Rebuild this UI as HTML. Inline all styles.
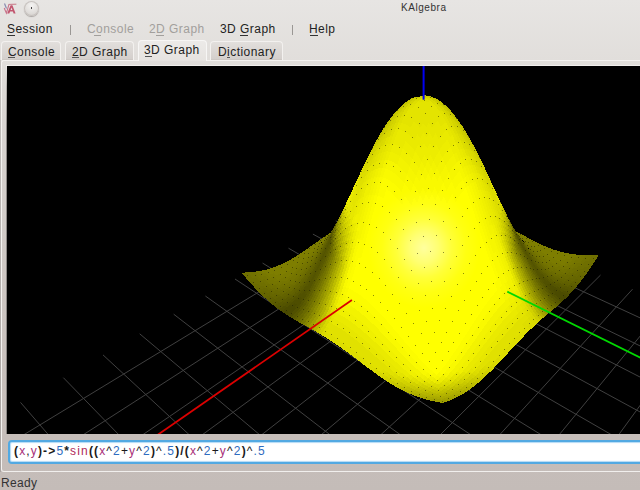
<!DOCTYPE html>
<html><head><meta charset="utf-8">
<style>
html,body{margin:0;padding:0;}
body{width:640px;height:490px;overflow:hidden;position:relative;
 background:linear-gradient(to bottom,#e7e5e3 0px,#e1dedb 60px,#dad6d3 110px,#cfc9c5 250px,#c8c0bc 380px,#c4bcb8 490px);
 font-family:"Liberation Sans",sans-serif;color:#222;}
.t{position:absolute;white-space:pre;font-size:12px;line-height:14px;}
.u{position:absolute;height:1px;background:#333;}
#frame{position:absolute;left:1px;top:60px;width:700px;height:412px;border-left:1px solid #f4f2f0;border-top:1px solid #f4f2f0;border-bottom:1px solid #f1efed;border-radius:3px 0 0 3px;box-sizing:border-box;}
#frame0{position:absolute;left:0px;top:60px;width:1px;height:412px;background:linear-gradient(#c3bfbc,#a9a3a0);}
#gwrap{position:absolute;left:6px;top:65px;width:700px;height:369px;background:#f0eeec;}
#gleft{position:absolute;left:6px;top:66px;width:1px;height:368px;background:linear-gradient(#ebe9e7 0px,#b4b0ad 20px,#8e8a88 60px,#8a8684 368px);}
#gbot{display:none;}
#graph{position:absolute;left:7px;top:66px;width:633px;height:368px;background:#000;overflow:hidden;}
.tab{position:absolute;top:41px;height:19px;box-sizing:border-box;border:1px solid #f3f1ef;border-bottom:none;border-radius:4px 4px 0 0;
 background:linear-gradient(#e2dfdc,#d3cecb);box-shadow:inset 0 -1px 0 #cdc8c4;}
.tab.sel{top:40px;height:21px;background:linear-gradient(#eceae8,#e6e3e0);box-shadow:none;border-color:#f7f6f5;}
#input{position:absolute;left:8px;top:440px;width:700px;height:24px;box-sizing:border-box;border:2px solid #52a9e2;border-radius:4px;background:#fff;
 box-shadow:inset 0 0 1px 1px #b3daf5;}
</style></head><body>
<!-- title bar -->
<svg style="position:absolute;left:0px;top:0px" width="20" height="16" viewBox="0 0 20 16">
 <path d="M8.6 4.4 L16.4 4.2" stroke="#c46a7c" stroke-width="0.9" fill="none"/>
 <path d="M4.2 8 L6.4 13.2 L9 4.4" stroke="#c9728a" stroke-width="1.1" fill="none"/>
 <path d="M4.5 3.5 L6.5 8.5" stroke="#8a8ab0" stroke-width="1.2" fill="none"/>
 <path d="M7.2 13.4 L10.6 5.2 L12.4 5.2 L15.6 13.4 L13.6 13.4 L12.9 11.4 L10.1 11.4 L9.3 13.4 Z M10.6 10 L12.4 10 L11.5 7.4 Z" fill="#c2566f" fill-rule="evenodd"/>
</svg>
<div style="position:absolute;left:24px;top:1px;width:15px;height:15px;border-radius:50%;background:radial-gradient(circle at 50% 30%,#f4f3f2,#dddad7 65%,#c9c5c2);box-shadow:0 1px 1px #a9a4a1, inset 0 0 0 1px #c7c2bf;"></div>
<div style="position:absolute;left:31px;top:7px;width:1px;height:2px;background:#444;"></div>
<div class="t" style="left:401px;top:2px;font-size:10px;line-height:12px;color:#333;letter-spacing:0.55px">KAlgebra</div>
<!-- menu -->
<div class="t" style="left:7px;top:22px;letter-spacing:0.45px">Session</div>
<div class="u" style="left:7px;top:35px;width:8px"></div><div class="u" style="left:94px;top:35px;width:7px;background:#a29f9c"></div><div class="u" style="left:156px;top:35px;width:8px;background:#a29f9c"></div><div class="u" style="left:240px;top:35px;width:8px"></div><div class="u" style="left:310px;top:35px;width:8px"></div>
<div style="position:absolute;left:70px;top:25px;width:1px;height:10px;background:#9a9794"></div>
<div class="t" style="left:87px;top:22px;color:#a29f9c;letter-spacing:0.45px">Console</div>
<div class="t" style="left:149px;top:22px;color:#a29f9c;letter-spacing:0.45px">2D Graph</div>
<div class="t" style="left:220px;top:22px;letter-spacing:0.45px">3D Graph</div>
<div style="position:absolute;left:292px;top:25px;width:1px;height:10px;background:#9a9794"></div>
<div class="t" style="left:309px;top:22px;letter-spacing:0.45px">Help</div>
<!-- tabs -->
<div id="frame0"></div>
<div id="frame"></div>
<div class="tab" style="left:1px;width:60px"></div>
<div class="tab" style="left:65px;width:69px"></div>
<div class="tab" style="left:210px;width:73px"></div>
<div class="tab sel" style="left:138px;width:69px"></div>
<div class="t" style="left:8px;top:45px;letter-spacing:0.45px">Console</div>
<div class="t" style="left:72px;top:45px;letter-spacing:0.45px">2D Graph</div>
<div class="t" style="left:144px;top:43px;letter-spacing:0.45px">3D Graph</div>
<div class="t" style="left:218px;top:45px;letter-spacing:0.45px">Dictionary</div>
<div class="u" style="left:8px;top:57px;width:7px;background:#555"></div><div class="u" style="left:72px;top:57px;width:7px;background:#555"></div><div class="u" style="left:145px;top:56px;width:7px;background:#555"></div><div class="u" style="left:227px;top:57px;width:3px;background:#555"></div><div id="gwrap"></div><div id="gleft"></div><div id="gbot"></div>
<div id="graph"><svg width="633" height="368" viewBox="0 0 633 368" style="display:block"><defs><radialGradient id="sp" cx="50%" cy="50%" r="50%"><stop offset="0" stop-color="#fff" stop-opacity=".62"/><stop offset=".25" stop-color="#fff" stop-opacity=".45"/><stop offset=".5" stop-color="#fff" stop-opacity=".22"/><stop offset=".75" stop-color="#fff" stop-opacity=".07"/><stop offset="1" stop-color="#fff" stop-opacity="0"/></radialGradient></defs><rect width="633" height="368" fill="#000"/><path d="M370.9 130.8L906.7 378.2M411.4 129L-123.9 454.2M350.4 142.5L898.4 408.9M433.7 138.8L-106.6 486.4M328.8 154.9L889.3 442.6M457.1 149.1L-87.7 521.5M305.9 168.1L879.3 479.8M481.6 159.9L-67 560.1M281.5 182.2L868.1 521M507.4 171.2L-44.3 602.5M255.6 197.1L855.7 566.9M534.6 183.2L-19 649.4M228 213L841.8 618.4M563.3 195.8L9 701.6M198.4 230L826.1 676.6M593.5 209.1L40.4 760.1M166.7 248.2L808.2 742.9M625.5 223.2L75.7 825.9M132.7 267.8L787.7 819M659.4 238.1L115.9 900.6M96 288.9L763.8 907.3M695.4 253.9L161.8 986.2M56.4 311.7L735.8 1011.1M733.7 270.7L215 1085.1M13.5 336.4L702.4 1134.9M774.4 288.6L277.1 1200.8M-33.2 363.2L661.9 1284.8M817.9 307.8L350.7 1337.9M-84.1 392.5L611.8 1470.3M864.4 328.2L439.4 1503" stroke="#404040" stroke-width="1" fill="none"/><g shape-rendering="crispEdges"><path fill="#484800" d="M556.8 229.5L555 231.2 558.1 232.9 560 231.1zM279.3 244.8L276.4 246.7 278.8 248.3 281.7 246.2z"/><path fill="#4b4b00" d="M552.5 224.3L550.7 225.7 553.7 227.7 555.5 226.2zM555.5 226.2L553.7 227.7 556.8 229.5 558.6 227.8zM558.6 227.8L556.8 229.5 560 231.1 561.8 229.2zM547.7 223.3L545.9 224.5 548.9 227 550.7 225.7zM550.7 225.7L548.9 227 551.9 229.2 553.7 227.7zM553.7 227.7L551.9 229.2 555 231.2 556.8 229.5zM548.9 227L547.1 228.2 550.1 230.6 551.9 229.2zM551.9 229.2L550.1 230.6 553.2 232.8 555 231.2zM555 231.2L553.2 232.8 556.3 234.6 558.1 232.9zM287.6 237.4L284.9 240.1 287.2 241.3 289.9 238.4zM282.5 239L279.7 241.2 282.1 242.6 284.9 240.1zM284.9 240.1L282.1 242.6 284.5 243.9 287.2 241.3zM287.2 241.3L284.5 243.9 286.9 245.1 289.6 242.3zM279.7 241.2L276.9 243.3 279.3 244.8 282.1 242.6zM282.1 242.6L279.3 244.8 281.7 246.2 284.5 243.9zM284.5 243.9L281.7 246.2 284.1 247.6 286.9 245.1zM276.9 243.3L274 245 276.4 246.7 279.3 244.8zM281.7 246.2L278.8 248.3 281.2 249.9 284.1 247.6z"/><path fill="#4e4e00" d="M557.3 224.6L555.5 226.2 558.6 227.8 560.4 226.1zM560.4 226.1L558.6 227.8 561.8 229.2 563.6 227.3zM546.5 219.8L544.8 220.8 547.7 223.3 549.5 222.1zM549.5 222.1L547.7 223.3 550.7 225.7 552.5 224.3zM541.9 217.9L540.2 218.6 543 221.7 544.8 220.8zM544.8 220.8L543 221.7 545.9 224.5 547.7 223.3zM543 221.7L541.3 222.6 544.2 225.5 545.9 224.5zM545.9 224.5L544.2 225.5 547.1 228.2 548.9 227zM553.2 232.8L551.4 234.3 554.5 236.3 556.3 234.6zM292.8 231.3L290.2 234.5 292.5 235.2 295.1 231.8zM287.9 233.7L285.2 236.4 287.6 237.4 290.2 234.5zM290.2 234.5L287.6 237.4 289.9 238.4 292.5 235.2zM292.5 235.2L289.9 238.4 292.2 239.2 294.8 235.9zM285.2 236.4L282.5 239 284.9 240.1 287.6 237.4zM289.9 238.4L287.2 241.3 289.6 242.3 292.2 239.2zM277.4 239.8L274.5 241.7 276.9 243.3 279.7 241.2zM274.5 241.7L271.6 243.3 274 245 276.9 243.3zM284.1 247.6L281.2 249.9 283.7 251.4 286.5 249z"/><path fill="#515100" d="M551.2 220.9L549.5 222.1 552.5 224.3 554.2 222.8zM554.2 222.8L552.5 224.3 555.5 226.2 557.3 224.6zM540.7 214.3L539 214.8 541.9 217.9 543.6 217.1zM543.6 217.1L541.9 217.9 544.8 220.8 546.5 219.8zM536.2 211.5L534.6 211.8 537.3 215.3 539 214.8zM539 214.8L537.3 215.3 540.2 218.6 541.9 217.9zM537.3 215.3L535.6 215.8 538.4 219.3 540.2 218.6zM540.2 218.6L538.4 219.3 541.3 222.6 543 221.7zM544.2 225.5L542.4 226.5 545.3 229.4 547.1 228.2zM547.1 228.2L545.3 229.4 548.3 232 550.1 230.6zM550.1 230.6L548.3 232 551.4 234.3 553.2 232.8zM297.8 224.1L295.3 227.8 297.6 228.1 300.1 224.2zM293.1 227.4L290.5 230.7 292.8 231.3 295.3 227.8zM295.3 227.8L292.8 231.3 295.1 231.8 297.6 228.1zM297.6 228.1L295.1 231.8 297.4 232.3 299.9 228.4zM290.5 230.7L287.9 233.7 290.2 234.5 292.8 231.3zM295.1 231.8L292.5 235.2 294.8 235.9 297.4 232.3zM282.9 235.4L280.2 237.7 282.5 239 285.2 236.4zM292.2 239.2L289.6 242.3 291.9 243.3 294.6 240.1zM280.2 237.7L277.4 239.8 279.7 241.2 282.5 239zM289.6 242.3L286.9 245.1 289.2 246.3 291.9 243.3zM286.9 245.1L284.1 247.6 286.5 249 289.2 246.3z"/><path fill="#545400" d="M556 221.3L554.2 222.8 557.3 224.6 559.1 222.9zM559.1 222.9L557.3 224.6 560.4 226.1 562.3 224.2zM562.3 224.2L560.4 226.1 563.6 227.3 565.5 225.3zM545.3 216.3L543.6 217.1 546.5 219.8 548.2 218.7zM548.2 218.7L546.5 219.8 549.5 222.1 551.2 220.9zM535.2 207.8L533.5 207.9 536.2 211.5 537.9 211.1zM537.9 211.1L536.2 211.5 539 214.8 540.7 214.3zM509.6 167.7L508 165.3 510.6 170.5 512.2 172.6zM512.2 172.6L510.6 170.5 513.2 175.7 514.8 177.5zM514.8 177.5L513.2 175.7 515.8 180.8 517.5 182.3zM517.5 182.3L515.8 180.8 518.5 185.7 520.1 187zM520.1 187L518.5 185.7 521.1 190.6 522.7 191.5zM522.7 191.5L521.1 190.6 523.7 195.2 525.4 195.9zM525.4 195.9L523.7 195.2 526.4 199.7 528.1 200.1zM528.1 200.1L526.4 199.7 529.1 203.9 530.8 204.1zM530.8 204.1L529.1 203.9 531.8 208 533.5 207.9zM533.5 207.9L531.8 208 534.6 211.8 536.2 211.5zM508 165.3L506.4 162.9 509 168.4 510.6 170.5zM510.6 170.5L509 168.4 511.6 173.9 513.2 175.7zM513.2 175.7L511.6 173.9 514.2 179.2 515.8 180.8zM515.8 180.8L514.2 179.2 516.8 184.4 518.5 185.7zM518.5 185.7L516.8 184.4 519.5 189.5 521.1 190.6zM529.1 203.9L527.4 203.7 530.1 208 531.8 208zM531.8 208L530.1 208 532.8 212 534.6 211.8zM534.6 211.8L532.8 212 535.6 215.8 537.3 215.3zM538.4 219.3L536.7 219.9 539.5 223.4 541.3 222.6zM541.3 222.6L539.5 223.4 542.4 226.5 544.2 225.5zM323.7 171.4L321.4 176.7 323.5 174.1 325.8 168.5zM321.4 176.7L319.1 182 321.2 179.7 323.5 174.1zM323.5 174.1L321.2 179.7 323.3 177.3 325.6 171.5zM319.1 182L316.8 187.2 318.9 185.2 321.2 179.7zM316.8 187.2L314.5 192.4 316.6 190.6 318.9 185.2zM314.5 192.4L312.2 197.4 314.3 196 316.6 190.6zM312.2 197.4L309.9 202.3 312 201.1 314.3 196zM309.9 202.3L307.5 207.1 309.7 206.1 312 201.1zM307.5 207.1L305.1 211.6 307.3 211 309.7 206.1zM305.1 211.6L302.7 216 304.9 215.6 307.3 211zM302.7 216L300.3 220.2 302.5 220 304.9 215.6zM304.9 215.6L302.5 220 304.8 219.8 307.2 215.1zM298.1 220.2L295.6 223.9 297.8 224.1 300.3 220.2zM300.3 220.2L297.8 224.1 300.1 224.2 302.5 220zM302.5 220L300.1 224.2 302.3 224.2 304.8 219.8zM295.6 223.9L293.1 227.4 295.3 227.8 297.8 224.1zM300.1 224.2L297.6 228.1 299.9 228.4 302.3 224.2zM288.3 230L285.6 232.8 287.9 233.7 290.5 230.7zM285.6 232.8L282.9 235.4 285.2 236.4 287.9 233.7zM294.8 235.9L292.2 239.2 294.6 240.1 297.1 236.5zM277.8 236.4L275 238.3 277.4 239.8 280.2 237.7zM275 238.3L272.1 240 274.5 241.7 277.4 239.8zM272.1 240L269.1 241.5 271.6 243.3 274.5 241.7z"/><path fill="#575700" d="M557.8 219.7L556 221.3 559.1 222.9 560.9 221.1zM560.9 221.1L559.1 222.9 562.3 224.2 564.1 222.3zM564.1 222.3L562.3 224.2 565.5 225.3 567.3 223.2zM550 217.5L548.2 218.7 551.2 220.9 553 219.5zM553 219.5L551.2 220.9 554.2 222.8 556 221.3zM539.6 210.7L537.9 211.1 540.7 214.3 542.5 213.6zM542.5 213.6L540.7 214.3 543.6 217.1 545.3 216.3zM505.9 160.5L504.3 157.7 507 162.7 508.5 165.2zM508.5 165.2L507 162.7 509.6 167.7 511.2 169.9zM511.2 169.9L509.6 167.7 512.2 172.6 513.8 174.6zM513.8 174.6L512.2 172.6 514.8 177.5 516.4 179.2zM516.4 179.2L514.8 177.5 517.5 182.3 519 183.7zM519 183.7L517.5 182.3 520.1 187 521.7 188.2zM521.7 188.2L520.1 187 522.7 191.5 524.3 192.4zM524.3 192.4L522.7 191.5 525.4 195.9 527 196.5zM527 196.5L525.4 195.9 528.1 200.1 529.7 200.5zM529.7 200.5L528.1 200.1 530.8 204.1 532.4 204.3zM532.4 204.3L530.8 204.1 533.5 207.9 535.2 207.8zM521.1 190.6L519.5 189.5 522.1 194.4 523.7 195.2zM523.7 195.2L522.1 194.4 524.7 199.2 526.4 199.7zM526.4 199.7L524.7 199.2 527.4 203.7 529.1 203.9zM532.8 212L531.1 212.2 533.9 216.2 535.6 215.8zM535.6 215.8L533.9 216.2 536.7 219.9 538.4 219.3zM545.3 229.4L543.5 230.6 546.5 233.4 548.3 232zM548.3 232L546.5 233.4 549.5 235.8 551.4 234.3zM551.4 234.3L549.5 235.8 552.6 238 554.5 236.3zM323.9 169.1L321.6 174.2 323.7 171.4 326 166.1zM321.6 174.2L319.3 179.2 321.4 176.7 323.7 171.4zM319.3 179.2L317 184.2 319.1 182 321.4 176.7zM317 184.2L314.7 189.2 316.8 187.2 319.1 182zM321.2 179.7L318.9 185.2 321 183.1 323.3 177.3zM314.7 189.2L312.4 194 314.5 192.4 316.8 187.2zM318.9 185.2L316.6 190.6 318.8 188.8 321 183.1zM312.4 194L310.1 198.8 312.2 197.4 314.5 192.4zM316.6 190.6L314.3 196 316.5 194.4 318.8 188.8zM310.1 198.8L307.7 203.4 309.9 202.3 312.2 197.4zM314.3 196L312 201.1 314.2 199.9 316.5 194.4zM307.7 203.4L305.4 207.9 307.5 207.1 309.9 202.3zM312 201.1L309.7 206.1 311.9 205.2 314.2 199.9zM305.4 207.9L303 212.2 305.1 211.6 307.5 207.1zM309.7 206.1L307.3 211 309.5 210.2 311.9 205.2zM303 212.2L300.6 216.3 302.7 216 305.1 211.6zM307.3 211L304.9 215.6 307.2 215.1 309.5 210.2zM300.6 216.3L298.1 220.2 300.3 220.2 302.7 216zM293.4 223.7L290.8 227 293.1 227.4 295.6 223.9zM302.3 224.2L299.9 228.4 302.2 228.6 304.6 224.2zM290.8 227L288.3 230 290.5 230.7 293.1 227.4zM299.9 228.4L297.4 232.3 299.7 232.7 302.2 228.6zM297.4 232.3L294.8 235.9 297.1 236.5 299.7 232.7zM283.3 231.8L280.6 234.2 282.9 235.4 285.6 232.8zM280.6 234.2L277.8 236.4 280.2 237.7 282.9 235.4zM275.5 234.9L272.6 236.7 275 238.3 277.8 236.4zM291.9 243.3L289.2 246.3 291.6 247.4 294.3 244.3zM272.6 236.7L269.7 238.2 272.1 240 275 238.3zM289.2 246.3L286.5 249 288.9 250.3 291.6 247.4zM269.7 238.2L266.7 239.6 269.1 241.5 272.1 240zM286.5 249L283.7 251.4 286.1 252.8 288.9 250.3z"/><path fill="#5a5a00" d="M562.7 219.2L560.9 221.1 564.1 222.3 565.9 220.3zM565.9 220.3L564.1 222.3 567.3 223.2 569.2 221.1zM551.7 216.3L550 217.5 553 219.5 554.7 218.1zM554.7 218.1L553 219.5 556 221.3 557.8 219.7zM544.2 212.9L542.5 213.6 545.3 216.3 547 215.3zM547 215.3L545.3 216.3 548.2 218.7 550 217.5zM510.1 167.7L508.5 165.2 511.2 169.9 512.7 172.1zM512.7 172.1L511.2 169.9 513.8 174.6 515.4 176.5zM515.4 176.5L513.8 174.6 516.4 179.2 518 180.8zM518 180.8L516.4 179.2 519 183.7 520.6 185.1zM520.6 185.1L519 183.7 521.7 188.2 523.3 189.2zM523.3 189.2L521.7 188.2 524.3 192.4 525.9 193.2zM525.9 193.2L524.3 192.4 527 196.5 528.6 197.1zM528.6 197.1L527 196.5 529.7 200.5 531.3 200.8zM531.3 200.8L529.7 200.5 532.4 204.3 534.1 204.3zM534.1 204.3L532.4 204.3 535.2 207.8 536.8 207.6zM536.8 207.6L535.2 207.8 537.9 211.1 539.6 210.7zM509 168.4L507.3 166.2 510 172 511.6 173.9zM511.6 173.9L510 172 512.6 177.6 514.2 179.2zM514.2 179.2L512.6 177.6 515.2 183.1 516.8 184.4zM516.8 184.4L515.2 183.1 517.8 188.5 519.5 189.5zM519.5 189.5L517.8 188.5 520.4 193.7 522.1 194.4zM522.1 194.4L520.4 193.7 523.1 198.6 524.7 199.2zM524.7 199.2L523.1 198.6 525.7 203.4 527.4 203.7zM527.4 203.7L525.7 203.4 528.4 207.9 530.1 208zM530.1 208L528.4 207.9 531.1 212.2 532.8 212zM539.5 223.4L537.7 224.2 540.6 227.5 542.4 226.5zM542.4 226.5L540.6 227.5 543.5 230.6 545.3 229.4zM324.2 167.3L321.9 172.1 323.9 169.1 326.2 164.1zM321.9 172.1L319.6 176.8 321.6 174.2 323.9 169.1zM319.6 176.8L317.3 181.6 319.3 179.2 321.6 174.2zM317.3 181.6L315 186.3 317 184.2 319.3 179.2zM315 186.3L312.6 191 314.7 189.2 317 184.2zM323.3 177.3L321 183.1 323.2 181 325.5 174.9zM312.6 191L310.3 195.6 312.4 194 314.7 189.2zM321 183.1L318.8 188.8 320.9 187 323.2 181zM310.3 195.6L308 200.1 310.1 198.8 312.4 194zM318.8 188.8L316.5 194.4 318.7 192.9 320.9 187zM308 200.1L305.6 204.4 307.7 203.4 310.1 198.8zM316.5 194.4L314.2 199.9 316.4 198.6 318.7 192.9zM305.6 204.4L303.2 208.6 305.4 207.9 307.7 203.4zM314.2 199.9L311.9 205.2 314.1 204.2 316.4 198.6zM303.2 208.6L300.8 212.7 303 212.2 305.4 207.9zM311.9 205.2L309.5 210.2 311.7 209.5 314.1 204.2zM300.8 212.7L298.4 216.6 300.6 216.3 303 212.2zM309.5 210.2L307.2 215.1 309.4 214.6 311.7 209.5zM298.4 216.6L295.9 220.2 298.1 220.2 300.6 216.3zM307.2 215.1L304.8 219.8 307 219.5 309.4 214.6zM295.9 220.2L293.4 223.7 295.6 223.9 298.1 220.2zM304.8 219.8L302.3 224.2 304.6 224.2 307 219.5zM288.6 226.4L286 229.2 288.3 230 290.8 227zM286 229.2L283.3 231.8 285.6 232.8 288.3 230zM281 230.8L278.3 232.9 280.6 234.2 283.3 231.8zM297.1 236.5L294.6 240.1 296.9 240.9 299.5 237.1zM278.3 232.9L275.5 234.9 277.8 236.4 280.6 234.2zM294.6 240.1L291.9 243.3 294.3 244.3 296.9 240.9zM270.2 235L267.3 236.4 269.7 238.2 272.6 236.7zM267.3 236.4L264.3 237.6 266.7 239.6 269.7 238.2z"/><path fill="#5d5d00" d="M564.5 217.3L562.7 219.2 565.9 220.3 567.8 218.1zM567.8 218.1L565.9 220.3 569.2 221.1 571 218.8zM556.5 216.6L554.7 218.1 557.8 219.7 559.6 218zM559.6 218L557.8 219.7 560.9 221.1 562.7 219.2zM548.8 214.2L547 215.3 550 217.5 551.7 216.3zM538.5 207.3L536.8 207.6 539.6 210.7 541.3 210.2zM541.3 210.2L539.6 210.7 542.5 213.6 544.2 212.9zM533.9 216.2L532.1 216.6 534.9 220.5 536.7 219.9zM536.7 219.9L534.9 220.5 537.7 224.2 539.5 223.4zM546.5 233.4L544.7 234.7 547.7 237.3 549.5 235.8zM549.5 235.8L547.7 237.3 550.8 239.6 552.6 238zM326.5 162.6L324.2 167.3 326.2 164.1 328.5 159.1zM326.2 164.1L323.9 169.1 326 166.1 328.3 160.8zM293.7 220.1L291.2 223.4 293.4 223.7 295.9 220.2zM291.2 223.4L288.6 226.4 290.8 227 293.4 223.7zM302.2 228.6L299.7 232.7 302 233.1 304.5 228.7zM283.7 228.4L281 230.8 283.3 231.8 286 229.2zM299.7 232.7L297.1 236.5 299.5 237.1 302 233.1zM276 231.6L273.1 233.4 275.5 234.9 278.3 232.9zM273.1 233.4L270.2 235 272.6 236.7 275.5 234.9zM267.9 233.2L264.9 234.4 267.3 236.4 270.2 235zM264.9 234.4L261.9 235.5 264.3 237.6 267.3 236.4zM288.9 250.3L286.1 252.8 288.6 254.3 291.3 251.6z"/><path fill="#606000" d="M566.4 215.2L564.5 217.3 567.8 218.1 569.6 215.9zM569.6 215.9L567.8 218.1 571 218.8 572.9 216.5zM558.3 214.9L556.5 216.6 559.6 218 561.4 216.2zM561.4 216.2L559.6 218 562.7 219.2 564.5 217.3zM550.5 213.1L548.8 214.2 551.7 216.3 553.5 214.9zM553.5 214.9L551.7 216.3 554.7 218.1 556.5 216.6zM543 209.5L541.3 210.2 544.2 212.9 545.9 212zM545.9 212L544.2 212.9 547 215.3 548.8 214.2zM511.6 170L510.1 167.7 512.7 172.1 514.3 174.1zM514.3 174.1L512.7 172.1 515.4 176.5 516.9 178.3zM516.9 178.3L515.4 176.5 518 180.8 519.6 182.3zM519.6 182.3L518 180.8 520.6 185.1 522.2 186.3zM522.2 186.3L520.6 185.1 523.3 189.2 524.9 190.2zM524.9 190.2L523.3 189.2 525.9 193.2 527.5 193.9zM527.5 193.9L525.9 193.2 528.6 197.1 530.2 197.5zM530.2 197.5L528.6 197.1 531.3 200.8 533 201zM533 201L531.3 200.8 534.1 204.3 535.7 204.2zM535.7 204.2L534.1 204.3 536.8 207.6 538.5 207.3zM510 172L508.3 170.1 510.9 176 512.6 177.6zM512.6 177.6L510.9 176 513.5 181.8 515.2 183.1zM515.2 183.1L513.5 181.8 516.1 187.4 517.8 188.5zM517.8 188.5L516.1 187.4 518.7 192.9 520.4 193.7zM520.4 193.7L518.7 192.9 521.4 198.1 523.1 198.6zM523.1 198.6L521.4 198.1 524 203.1 525.7 203.4zM525.7 203.4L524 203.1 526.7 207.9 528.4 207.9zM528.4 207.9L526.7 207.9 529.4 212.4 531.1 212.2zM531.1 212.2L529.4 212.4 532.1 216.6 533.9 216.2zM540.6 227.5L538.8 228.5 541.7 231.8 543.5 230.6zM543.5 230.6L541.7 231.8 544.7 234.7 546.5 233.4zM329.2 157.3L326.8 161.5 328.8 158 331.2 153.5zM326.8 161.5L324.5 165.9 326.5 162.6 328.8 158zM324.5 165.9L322.2 170.4 324.2 167.3 326.5 162.6zM322.2 170.4L319.9 174.8 321.9 172.1 324.2 167.3zM319.9 174.8L317.6 179.3 319.6 176.8 321.9 172.1zM326 166.1L323.7 171.4 325.8 168.5 328.1 162.9zM317.6 179.3L315.2 183.8 317.3 181.6 319.6 176.8zM315.2 183.8L312.9 188.3 315 186.3 317.3 181.6zM312.9 188.3L310.6 192.7 312.6 191 315 186.3zM310.6 192.7L308.2 197 310.3 195.6 312.6 191zM323.2 181L320.9 187 323.2 185.2 325.4 178.9zM308.2 197L305.9 201.2 308 200.1 310.3 195.6zM320.9 187L318.7 192.9 320.9 191.3 323.2 185.2zM305.9 201.2L303.5 205.3 305.6 204.4 308 200.1zM318.7 192.9L316.4 198.6 318.6 197.3 320.9 191.3zM303.5 205.3L301.1 209.3 303.2 208.6 305.6 204.4zM301.1 209.3L298.7 213.1 300.8 212.7 303.2 208.6zM298.7 213.1L296.2 216.7 298.4 216.6 300.8 212.7zM296.2 216.7L293.7 220.1 295.9 220.2 298.4 216.6zM307 219.5L304.6 224.2 306.9 224.1 309.3 219.3zM289 222.9L286.4 225.7 288.6 226.4 291.2 223.4zM304.6 224.2L302.2 228.6 304.5 228.7 306.9 224.1zM286.4 225.7L283.7 228.4 286 229.2 288.6 226.4zM281.4 227.4L278.7 229.6 281 230.8 283.7 228.4zM278.7 229.6L276 231.6 278.3 232.9 281 230.8zM273.6 230.1L270.8 231.7 273.1 233.4 276 231.6zM270.8 231.7L267.9 233.2 270.2 235 273.1 233.4zM294.3 244.3L291.6 247.4 294 248.6 296.7 245.2zM265.5 231.3L262.5 232.4 264.9 234.4 267.9 233.2zM291.6 247.4L288.9 250.3 291.3 251.6 294 248.6zM262.5 232.4L259.4 233.3 261.9 235.5 264.9 234.4z"/><path fill="#636300" d="M568.2 213L566.4 215.2 569.6 215.9 571.5 213.6zM571.5 213.6L569.6 215.9 572.9 216.5 574.8 214.1zM560.1 213.2L558.3 214.9 561.4 216.2 563.2 214.3zM563.2 214.3L561.4 216.2 564.5 217.3 566.4 215.2zM552.2 211.8L550.5 213.1 553.5 214.9 555.2 213.5zM555.2 213.5L553.5 214.9 556.5 216.6 558.3 214.9zM544.7 208.8L543 209.5 545.9 212 547.6 211zM547.6 211L545.9 212 548.8 214.2 550.5 213.1zM515.8 176L514.3 174.1 516.9 178.3 518.5 179.9zM518.5 179.9L516.9 178.3 519.6 182.3 521.1 183.7zM521.1 183.7L519.6 182.3 522.2 186.3 523.8 187.4zM523.8 187.4L522.2 186.3 524.9 190.2 526.4 191zM526.4 191L524.9 190.2 527.5 193.9 529.1 194.5zM529.1 194.5L527.5 193.9 530.2 197.5 531.8 197.8zM531.8 197.8L530.2 197.5 533 201 534.6 201zM534.6 201L533 201 535.7 204.2 537.4 204zM537.4 204L535.7 204.2 538.5 207.3 540.1 206.9zM540.1 206.9L538.5 207.3 541.3 210.2 543 209.5zM505.4 160L503.8 157.3 506.4 162.9 508 165.3zM506.4 162.9L504.7 160.4 507.3 166.2 509 168.4zM534.9 220.5L533.1 221.1 535.9 225 537.7 224.2zM537.7 224.2L535.9 225 538.8 228.5 540.6 227.5zM324.9 164.9L322.5 169 324.5 165.9 326.8 161.5zM322.5 169L320.2 173.2 322.2 170.4 324.5 165.9zM320.2 173.2L317.9 177.5 319.9 174.8 322.2 170.4zM317.9 177.5L315.5 181.7 317.6 179.3 319.9 174.8zM315.5 181.7L313.2 185.9 315.2 183.8 317.6 179.3zM325.8 168.5L323.5 174.1 325.6 171.5 327.9 165.6zM313.2 185.9L310.9 190.1 312.9 188.3 315.2 183.8zM310.9 190.1L308.5 194.2 310.6 192.7 312.9 188.3zM308.5 194.2L306.2 198.3 308.2 197 310.6 192.7zM306.2 198.3L303.8 202.3 305.9 201.2 308.2 197zM303.8 202.3L301.4 206.1 303.5 205.3 305.9 201.2zM301.4 206.1L299 209.8 301.1 209.3 303.5 205.3zM316.4 198.6L314.1 204.2 316.3 203.1 318.6 197.3zM299 209.8L296.5 213.3 298.7 213.1 301.1 209.3zM314.1 204.2L311.7 209.5 314 208.7 316.3 203.1zM296.5 213.3L294 216.7 296.2 216.7 298.7 213.1zM311.7 209.5L309.4 214.6 311.7 214.1 314 208.7zM294 216.7L291.5 219.9 293.7 220.1 296.2 216.7zM309.4 214.6L307 219.5 309.3 219.3 311.7 214.1zM291.5 219.9L289 222.9 291.2 223.4 293.7 220.1zM286.7 222.4L284.1 225 286.4 225.7 289 222.9zM284.1 225L281.4 227.4 283.7 228.4 286.4 225.7zM279.2 226.3L276.4 228.3 278.7 229.6 281.4 227.4zM276.4 228.3L273.6 230.1 276 231.6 278.7 229.6zM299.5 237.1L296.9 240.9 299.3 241.6 301.8 237.7zM271.3 228.5L268.4 230 270.8 231.7 273.6 230.1zM296.9 240.9L294.3 244.3 296.7 245.2 299.3 241.6zM268.4 230L265.5 231.3 267.9 233.2 270.8 231.7zM263.1 229.3L260 230.2 262.5 232.4 265.5 231.3zM260 230.2L257 231.1 259.4 233.3 262.5 232.4z"/><path fill="#666600" d="M571.9 208.4L570.1 210.7 573.3 211.2 575.2 208.7zM575.2 208.7L573.3 211.2 576.7 211.6 578.6 209zM566.8 210.1L565 212.2 568.2 213 570.1 210.7zM570.1 210.7L568.2 213 571.5 213.6 573.3 211.2zM573.3 211.2L571.5 213.6 574.8 214.1 576.7 211.6zM561.9 211.3L560.1 213.2 563.2 214.3 565 212.2zM565 212.2L563.2 214.3 566.4 215.2 568.2 213zM557 211.9L555.2 213.5 558.3 214.9 560.1 213.2zM549.3 209.9L547.6 211 550.5 213.1 552.2 211.8zM512.1 170.4L510.5 168.2 513.2 172.1 514.7 174.1zM514.7 174.1L513.2 172.1 515.8 176 517.3 177.7zM517.3 177.7L515.8 176 518.5 179.9 520 181.3zM520 181.3L518.5 179.9 521.1 183.7 522.7 184.8zM522.7 184.8L521.1 183.7 523.8 187.4 525.3 188.3zM525.3 188.3L523.8 187.4 526.4 191 528 191.6zM528 191.6L526.4 191 529.1 194.5 530.7 194.9zM530.7 194.9L529.1 194.5 531.8 197.8 533.5 198zM533.5 198L531.8 197.8 534.6 201 536.2 200.9zM536.2 200.9L534.6 201 537.4 204 539 203.7zM539 203.7L537.4 204 540.1 206.9 541.8 206.4zM541.8 206.4L540.1 206.9 543 209.5 544.7 208.8zM507.3 166.2L505.7 164.1 508.3 170.1 510 172zM529.4 212.4L527.6 212.5 530.4 217 532.1 216.6zM532.1 216.6L530.4 217 533.1 221.1 534.9 220.5zM541.7 231.8L539.9 232.9 542.8 236 544.7 234.7zM544.7 234.7L542.8 236 545.8 238.7 547.7 237.3zM547.7 237.3L545.8 238.7 548.9 241.2 550.8 239.6zM325.2 164.2L322.9 168.1 324.9 164.9 327.2 160.9zM322.9 168.1L320.6 172 322.5 169 324.9 164.9zM320.6 172L318.2 175.9 320.2 173.2 322.5 169zM318.2 175.9L315.9 179.9 317.9 177.5 320.2 173.2zM315.9 179.9L313.5 183.9 315.5 181.7 317.9 177.5zM313.5 183.9L311.2 187.8 313.2 185.9 315.5 181.7zM311.2 187.8L308.9 191.8 310.9 190.1 313.2 185.9zM325.6 171.5L323.3 177.3 325.5 174.9 327.8 168.8zM308.9 191.8L306.5 195.6 308.5 194.2 310.9 190.1zM306.5 195.6L304.1 199.4 306.2 198.3 308.5 194.2zM304.1 199.4L301.7 203.1 303.8 202.3 306.2 198.3zM301.7 203.1L299.3 206.7 301.4 206.1 303.8 202.3zM299.3 206.7L296.8 210.1 299 209.8 301.4 206.1zM296.8 210.1L294.4 213.5 296.5 213.3 299 209.8zM294.4 213.5L291.9 216.6 294 216.7 296.5 213.3zM291.9 216.6L289.3 219.6 291.5 219.9 294 216.7zM289.3 219.6L286.7 222.4 289 222.9 291.5 219.9zM281.9 224.1L279.2 226.3 281.4 227.4 284.1 225zM304.5 228.7L302 233.1 304.3 233.5 306.8 228.9zM302 233.1L299.5 237.1 301.8 237.7 304.3 233.5zM274.1 226.9L271.3 228.5 273.6 230.1 276.4 228.3zM268.9 226.8L266 228.1 268.4 230 271.3 228.5zM263.6 226.1L260.7 227.1 263.1 229.3 266 228.1zM266 228.1L263.1 229.3 265.5 231.3 268.4 230zM258.2 224.9L255.2 225.6 257.6 228 260.7 227.1zM260.7 227.1L257.6 228 260 230.2 263.1 229.3zM294 248.6L291.3 251.6 293.8 252.8 296.5 249.7zM255.2 225.6L252 226.2 254.5 228.7 257.6 228zM257.6 228L254.5 228.7 257 231.1 260 230.2zM291.3 251.6L288.6 254.3 291 255.7 293.8 252.8z"/><path fill="#696900" d="M579 203.5L577.1 206.2 580.5 206.3 582.4 203.5zM570.5 205.5L568.7 207.8 571.9 208.4 573.8 205.9zM573.8 205.9L571.9 208.4 575.2 208.7 577.1 206.2zM577.1 206.2L575.2 208.7 578.6 209 580.5 206.3zM565.5 207.2L563.7 209.3 566.8 210.1 568.7 207.8zM568.7 207.8L566.8 210.1 570.1 210.7 571.9 208.4zM560.6 208.3L558.8 210.1 561.9 211.3 563.7 209.3zM563.7 209.3L561.9 211.3 565 212.2 566.8 210.1zM555.7 208.8L554 210.4 557 211.9 558.8 210.1zM558.8 210.1L557 211.9 560.1 213.2 561.9 211.3zM551 208.7L549.3 209.9 552.2 211.8 554 210.4zM554 210.4L552.2 211.8 555.2 213.5 557 211.9zM540.7 203.3L539 203.7 541.8 206.4 543.5 205.7zM543.5 205.7L541.8 206.4 544.7 208.8 546.4 207.9zM546.4 207.9L544.7 208.8 547.6 211 549.3 209.9zM508.3 170.1L506.6 168.3 509.2 174.4 510.9 176zM510.9 176L509.2 174.4 511.8 180.5 513.5 181.8zM513.5 181.8L511.8 180.5 514.4 186.4 516.1 187.4zM516.1 187.4L514.4 186.4 517 192.1 518.7 192.9zM518.7 192.9L517 192.1 519.6 197.6 521.4 198.1zM521.4 198.1L519.6 197.6 522.3 202.8 524 203.1zM524 203.1L522.3 202.8 524.9 207.8 526.7 207.9zM526.7 207.9L524.9 207.8 527.6 212.5 529.4 212.4zM535.9 225L534.1 225.8 537 229.5 538.8 228.5zM538.8 228.5L537 229.5 539.9 232.9 541.7 231.8zM325.5 174.9L323.2 181 325.4 178.9 327.7 172.6zM323.2 185.2L320.9 191.3 323.1 189.8 325.4 183.4zM320.9 191.3L318.6 197.3 320.9 196.1 323.1 189.8zM318.6 197.3L316.3 203.1 318.6 202.1 320.9 196.1zM316.3 203.1L314 208.7 316.3 208 318.6 202.1zM289.7 216.3L287.1 219.1 289.3 219.6 291.9 216.6zM311.7 214.1L309.3 219.3 311.6 219 313.9 213.6zM287.1 219.1L284.5 221.7 286.7 222.4 289.3 219.6zM309.3 219.3L306.9 224.1 309.2 224.1 311.6 219zM284.5 221.7L281.9 224.1 284.1 225 286.7 222.4zM306.9 224.1L304.5 228.7 306.8 228.9 309.2 224.1zM279.6 223L276.9 225 279.2 226.3 281.9 224.1zM274.6 223.6L271.8 225.3 274.1 226.9 276.9 225zM276.9 225L274.1 226.9 276.4 228.3 279.2 226.3zM269.5 223.6L266.6 225 268.9 226.8 271.8 225.3zM271.8 225.3L268.9 226.8 271.3 228.5 274.1 226.9zM264.2 223L261.2 224 263.6 226.1 266.6 225zM266.6 225L263.6 226.1 266 228.1 268.9 226.8zM299.3 241.6L296.7 245.2 299.1 246.2 301.7 242.4zM258.8 221.8L255.8 222.6 258.2 224.9 261.2 224zM261.2 224L258.2 224.9 260.7 227.1 263.6 226.1zM296.7 245.2L294 248.6 296.5 249.7 299.1 246.2zM255.8 222.6L252.7 223.2 255.2 225.6 258.2 224.9zM250.2 220.6L247 221 249.5 223.7 252.7 223.2zM252.7 223.2L249.5 223.7 252 226.2 255.2 225.6z"/><path fill="#6c6c00" d="M582.8 197.8L580.9 200.7 584.3 200.7 586.2 197.7zM577.6 200.6L575.7 203.3 579 203.5 580.9 200.7zM580.9 200.7L579 203.5 582.4 203.5 584.3 200.7zM572.4 203L570.5 205.5 573.8 205.9 575.7 203.3zM575.7 203.3L573.8 205.9 577.1 206.2 579 203.5zM567.3 204.9L565.5 207.2 568.7 207.8 570.5 205.5zM562.4 206.3L560.6 208.3 563.7 209.3 565.5 207.2zM557.5 207.2L555.7 208.8 558.8 210.1 560.6 208.3zM552.7 207.4L551 208.7 554 210.4 555.7 208.8zM545.2 204.9L543.5 205.7 546.4 207.9 548.1 206.9zM548.1 206.9L546.4 207.9 549.3 209.9 551 208.7zM516.2 175.8L514.7 174.1 517.3 177.7 518.9 179.2zM518.9 179.2L517.3 177.7 520 181.3 521.5 182.5zM521.5 182.5L520 181.3 522.7 184.8 524.2 185.8zM524.2 185.8L522.7 184.8 525.3 188.3 526.9 189zM526.9 189L525.3 188.3 528 191.6 529.6 192.1zM529.6 192.1L528 191.6 530.7 194.9 532.3 195.1zM532.3 195.1L530.7 194.9 533.5 198 535.1 198zM535.1 198L533.5 198 536.2 200.9 537.8 200.7zM537.8 200.7L536.2 200.9 539 203.7 540.7 203.3zM533.1 221.1L531.4 221.7 534.1 225.8 535.9 225zM318.6 174.6L316.3 178.3 318.2 175.9 320.6 172zM316.3 178.3L313.9 182.1 315.9 179.9 318.2 175.9zM313.9 182.1L311.6 185.8 313.5 183.9 315.9 179.9zM311.6 185.8L309.2 189.5 311.2 187.8 313.5 183.9zM309.2 189.5L306.8 193.2 308.9 191.8 311.2 187.8zM306.8 193.2L304.4 196.8 306.5 195.6 308.9 191.8zM304.4 196.8L302.1 200.4 304.1 199.4 306.5 195.6zM325.4 178.9L323.2 185.2 325.4 183.4 327.7 176.8zM302.1 200.4L299.6 203.8 301.7 203.1 304.1 199.4zM299.6 203.8L297.2 207.1 299.3 206.7 301.7 203.1zM297.2 207.1L294.7 210.3 296.8 210.1 299.3 206.7zM294.7 210.3L292.2 213.4 294.4 213.5 296.8 210.1zM292.2 213.4L289.7 216.3 291.9 216.6 294.4 213.5zM314 208.7L311.7 214.1 313.9 213.6 316.3 208zM284.9 218.4L282.3 220.8 284.5 221.7 287.1 219.1zM282.3 220.8L279.6 223 281.9 224.1 284.5 221.7zM277.4 221.8L274.6 223.6 276.9 225 279.6 223zM272.3 222.1L269.5 223.6 271.8 225.3 274.6 223.6zM267.1 221.8L264.2 223 266.6 225 269.5 223.6zM301.8 237.7L299.3 241.6 301.7 242.4 304.2 238.3zM261.8 220.9L258.8 221.8 261.2 224 264.2 223zM256.4 219.5L253.3 220.1 255.8 222.6 258.8 221.8zM250.9 217.6L247.7 218 250.2 220.6 253.3 220.1zM253.3 220.1L250.2 220.6 252.7 223.2 255.8 222.6zM245.2 215.2L242 215.5 244.5 218.3 247.7 218zM247.7 218L244.5 218.3 247 221 250.2 220.6z"/><path fill="#6f6f00" d="M585.3 188.9L583.3 192 586.7 191.8 588.7 188.7zM588.7 188.7L586.7 191.8 590.1 191.6 592.1 188.5zM583.3 192L581.4 194.9 584.8 194.9 586.7 191.8zM586.7 191.8L584.8 194.9 588.2 194.7 590.1 191.6zM578.1 194.9L576.2 197.7 579.5 197.8 581.4 194.9zM581.4 194.9L579.5 197.8 582.8 197.8 584.8 194.9zM584.8 194.9L582.8 197.8 586.2 197.7 588.2 194.7zM576.2 197.7L574.3 200.4 577.6 200.6 579.5 197.8zM579.5 197.8L577.6 200.6 580.9 200.7 582.8 197.8zM571 200.1L569.2 202.6 572.4 203 574.3 200.4zM574.3 200.4L572.4 203 575.7 203.3 577.6 200.6zM566 202L564.2 204.2 567.3 204.9 569.2 202.6zM569.2 202.6L567.3 204.9 570.5 205.5 572.4 203zM561.1 203.4L559.3 205.3 562.4 206.3 564.2 204.2zM564.2 204.2L562.4 206.3 565.5 207.2 567.3 204.9zM559.3 205.3L557.5 207.2 560.6 208.3 562.4 206.3zM551.5 204.4L549.8 205.7 552.7 207.4 554.5 205.8zM554.5 205.8L552.7 207.4 555.7 208.8 557.5 207.2zM546.9 203.9L545.2 204.9 548.1 206.9 549.8 205.7zM549.8 205.7L548.1 206.9 551 208.7 552.7 207.4zM515.1 174.1L513.6 172.4 516.2 175.8 517.8 177.3zM517.8 177.3L516.2 175.8 518.9 179.2 520.4 180.5zM523.1 183.6L521.5 182.5 524.2 185.8 525.8 186.6zM525.8 186.6L524.2 185.8 526.9 189 528.5 189.6zM528.5 189.6L526.9 189 529.6 192.1 531.2 192.4zM531.2 192.4L529.6 192.1 532.3 195.1 533.9 195.2zM533.9 195.2L532.3 195.1 535.1 198 536.7 197.8zM536.7 197.8L535.1 198 537.8 200.7 539.5 200.3zM539.5 200.3L537.8 200.7 540.7 203.3 542.3 202.7zM542.3 202.7L540.7 203.3 543.5 205.7 545.2 204.9zM509.2 174.4L507.4 172.9 510 179.2 511.8 180.5zM511.8 180.5L510 179.2 512.6 185.4 514.4 186.4zM514.4 186.4L512.6 185.4 515.3 191.3 517 192.1zM517 192.1L515.3 191.3 517.9 197.1 519.6 197.6zM524.9 207.8L523.2 207.8 525.9 212.7 527.6 212.5zM527.6 212.5L525.9 212.7 528.6 217.4 530.4 217zM530.4 217L528.6 217.4 531.4 221.7 533.1 221.1zM539.9 232.9L538 234.1 541 237.3 542.8 236zM542.8 236L541 237.3 544 240.2 545.8 238.7zM545.8 238.7L544 240.2 547 242.8 548.9 241.2zM321.3 170.2L319 173.6 320.9 171 323.3 167.4zM319 173.6L316.6 177.1 318.6 174.6 320.9 171zM316.6 177.1L314.3 180.5 316.3 178.3 318.6 174.6zM314.3 180.5L311.9 184 313.9 182.1 316.3 178.3zM311.9 184L309.6 187.5 311.6 185.8 313.9 182.1zM309.6 187.5L307.2 191 309.2 189.5 311.6 185.8zM307.2 191L304.8 194.4 306.8 193.2 309.2 189.5zM304.8 194.4L302.4 197.8 304.4 196.8 306.8 193.2zM302.4 197.8L300 201.1 302.1 200.4 304.4 196.8zM300 201.1L297.6 204.3 299.6 203.8 302.1 200.4zM297.6 204.3L295.1 207.4 297.2 207.1 299.6 203.8zM295.1 207.4L292.6 210.4 294.7 210.3 297.2 207.1zM292.6 210.4L290.1 213.2 292.2 213.4 294.7 210.3zM290.1 213.2L287.5 215.9 289.7 216.3 292.2 213.4zM287.5 215.9L284.9 218.4 287.1 219.1 289.7 216.3zM282.7 217.6L280.1 219.8 282.3 220.8 284.9 218.4zM277.8 218.7L275.1 220.5 277.4 221.8 280.1 219.8zM280.1 219.8L277.4 221.8 279.6 223 282.3 220.8zM275.1 220.5L272.3 222.1 274.6 223.6 277.4 221.8zM306.8 228.9L304.3 233.5 306.7 233.8 309.1 229.1zM267.6 218.7L264.8 219.9 267.1 221.8 270 220.5zM270 220.5L267.1 221.8 269.5 223.6 272.3 222.1zM304.3 233.5L301.8 237.7 304.2 238.3 306.7 233.8zM262.4 217.8L259.4 218.7 261.8 220.9 264.8 219.9zM264.8 219.9L261.8 220.9 264.2 223 267.1 221.8zM257 216.3L254 217 256.4 219.5 259.4 218.7zM259.4 218.7L256.4 219.5 258.8 221.8 261.8 220.9zM249 211.8L245.9 212.1 248.4 214.9 251.5 214.4zM251.5 214.4L248.4 214.9 250.9 217.6 254 217zM254 217L250.9 217.6 253.3 220.1 256.4 219.5zM240.9 206.4L237.7 206.5 240.2 209.5 243.4 209.3zM243.4 209.3L240.2 209.5 242.7 212.4 245.9 212.1zM245.9 212.1L242.7 212.4 245.2 215.2 248.4 214.9zM248.4 214.9L245.2 215.2 247.7 218 250.9 217.6zM296.5 249.7L293.8 252.8 296.2 254.1 298.9 250.8zM237.7 206.5L234.4 206.6 236.9 209.7 240.2 209.5zM240.2 209.5L236.9 209.7 239.5 212.6 242.7 212.4zM242.7 212.4L239.5 212.6 242 215.5 245.2 215.2zM293.8 252.8L291 255.7 293.5 257.1 296.2 254.1z"/><path fill="#727200" d="M578.6 189L576.7 191.9 580 192 581.9 189zM581.9 189L580 192 583.3 192 585.3 188.9zM576.7 191.9L574.8 194.7 578.1 194.9 580 192zM580 192L578.1 194.9 581.4 194.9 583.3 192zM574.8 194.7L572.9 197.5 576.2 197.7 578.1 194.9zM569.7 197.1L567.8 199.6 571 200.1 572.9 197.5zM572.9 197.5L571 200.1 574.3 200.4 576.2 197.7zM567.8 199.6L566 202 569.2 202.6 571 200.1zM562.9 201.3L561.1 203.4 564.2 204.2 566 202zM558 202.4L556.2 204.2 559.3 205.3 561.1 203.4zM553.2 202.9L551.5 204.4 554.5 205.8 556.2 204.2zM556.2 204.2L554.5 205.8 557.5 207.2 559.3 205.3zM545.7 201L544 201.9 546.9 203.9 548.6 202.7zM548.6 202.7L546.9 203.9 549.8 205.7 551.5 204.4zM514 172.7L512.5 171 515.1 174.1 516.6 175.6zM519.3 178.6L517.8 177.3 520.4 180.5 522 181.5zM522 181.5L520.4 180.5 523.1 183.6 524.6 184.4zM524.6 184.4L523.1 183.6 525.8 186.6 527.3 187.2zM527.3 187.2L525.8 186.6 528.5 189.6 530.1 189.9zM530.1 189.9L528.5 189.6 531.2 192.4 532.8 192.6zM532.8 192.6L531.2 192.4 533.9 195.2 535.5 195.1zM535.5 195.1L533.9 195.2 536.7 197.8 538.3 197.5zM538.3 197.5L536.7 197.8 539.5 200.3 541.1 199.8zM541.1 199.8L539.5 200.3 542.3 202.7 544 201.9zM544 201.9L542.3 202.7 545.2 204.9 546.9 203.9zM519.6 197.6L517.9 197.1 520.5 202.6 522.3 202.8zM522.3 202.8L520.5 202.6 523.2 207.8 524.9 207.8zM534.1 225.8L532.3 226.6 535.2 230.5 537 229.5zM537 229.5L535.2 230.5 538 234.1 539.9 232.9zM317 176L314.7 179.2 316.6 177.1 319 173.6zM314.7 179.2L312.3 182.5 314.3 180.5 316.6 177.1zM328.5 159.1L326.2 164.1 328.3 160.8 330.6 155.5zM312.3 182.5L309.9 185.8 311.9 184 314.3 180.5zM309.9 185.8L307.6 189 309.6 187.5 311.9 184zM307.6 189L305.2 192.3 307.2 191 309.6 187.5zM305.2 192.3L302.8 195.5 304.8 194.4 307.2 191zM302.8 195.5L300.4 198.6 302.4 197.8 304.8 194.4zM300.4 198.6L297.9 201.7 300 201.1 302.4 197.8zM297.9 201.7L295.5 204.6 297.6 204.3 300 201.1zM325.4 183.4L323.1 189.8 325.4 188.3 327.7 181.7zM295.5 204.6L293 207.5 295.1 207.4 297.6 204.3zM323.1 189.8L320.9 196.1 323.1 194.8 325.4 188.3zM293 207.5L290.5 210.2 292.6 210.4 295.1 207.4zM320.9 196.1L318.6 202.1 320.9 201.2 323.1 194.8zM290.5 210.2L287.9 212.8 290.1 213.2 292.6 210.4zM318.6 202.1L316.3 208 318.6 207.3 320.9 201.2zM287.9 212.8L285.3 215.3 287.5 215.9 290.1 213.2zM316.3 208L313.9 213.6 316.3 213.1 318.6 207.3zM283.1 214.6L280.5 216.7 282.7 217.6 285.3 215.3zM285.3 215.3L282.7 217.6 284.9 218.4 287.5 215.9zM313.9 213.6L311.6 219 313.9 218.7 316.3 213.1zM280.5 216.7L277.8 218.7 280.1 219.8 282.7 217.6zM311.6 219L309.2 224.1 311.5 224.1 313.9 218.7zM275.5 217.3L272.8 219 275.1 220.5 277.8 218.7zM309.2 224.1L306.8 228.9 309.1 229.1 311.5 224.1zM270.5 217.3L267.6 218.7 270 220.5 272.8 219zM272.8 219L270 220.5 272.3 222.1 275.1 220.5zM265.3 216.7L262.4 217.8 264.8 219.9 267.6 218.7zM257.6 213.2L254.6 213.9 257 216.3 260 215.6zM260 215.6L257 216.3 259.4 218.7 262.4 217.8zM247.2 205.8L244.1 206.1 246.6 209 249.7 208.6zM249.7 208.6L246.6 209 249 211.8 252.1 211.3zM252.1 211.3L249 211.8 251.5 214.4 254.6 213.9zM254.6 213.9L251.5 214.4 254 217 257 216.3zM301.7 242.4L299.1 246.2 301.5 247.1 304.1 243.2zM244.1 206.1L240.9 206.4 243.4 209.3 246.6 209zM246.6 209L243.4 209.3 245.9 212.1 249 211.8zM299.1 246.2L296.5 249.7 298.9 250.8 301.5 247.1z"/><path fill="#757500" d="M575.4 188.9L573.5 191.8 576.7 191.9 578.6 189zM573.5 191.8L571.6 194.5 574.8 194.7 576.7 191.9zM568.4 194.2L566.5 196.7 569.7 197.1 571.6 194.5zM571.6 194.5L569.7 197.1 572.9 197.5 574.8 194.7zM566.5 196.7L564.7 199 567.8 199.6 569.7 197.1zM561.6 198.3L559.8 200.4 562.9 201.3 564.7 199zM564.7 199L562.9 201.3 566 202 567.8 199.6zM556.8 199.5L555 201.3 558 202.4 559.8 200.4zM559.8 200.4L558 202.4 561.1 203.4 562.9 201.3zM552 200L550.3 201.5 553.2 202.9 555 201.3zM555 201.3L553.2 202.9 556.2 204.2 558 202.4zM522.4 180.4L520.8 179.6 523.5 182.3 525.1 182.9zM525.1 182.9L523.5 182.3 526.2 185 527.8 185.3zM527.8 185.3L526.2 185 528.9 187.6 530.5 187.7zM530.5 187.7L528.9 187.6 531.6 190.1 533.3 190zM533.3 190L531.6 190.1 534.4 192.5 536 192.2zM536 192.2L534.4 192.5 537.2 194.8 538.8 194.3zM538.8 194.3L537.2 194.8 540 197 541.6 196.3zM541.6 196.3L540 197 542.8 199 544.5 198.1zM544.5 198.1L542.8 199 545.7 201 547.4 199.9zM547.4 199.9L545.7 201 548.6 202.7 550.3 201.5zM550.3 201.5L548.6 202.7 551.5 204.4 553.2 202.9zM515.5 174.2L514 172.7 516.6 175.6 518.2 176.9zM518.2 176.9L516.6 175.6 519.3 178.6 520.8 179.6zM520.8 179.6L519.3 178.6 522 181.5 523.5 182.3zM523.5 182.3L522 181.5 524.6 184.4 526.2 185zM526.2 185L524.6 184.4 527.3 187.2 528.9 187.6zM528.9 187.6L527.3 187.2 530.1 189.9 531.6 190.1zM531.6 190.1L530.1 189.9 532.8 192.6 534.4 192.5zM534.4 192.5L532.8 192.6 535.5 195.1 537.2 194.8zM537.2 194.8L535.5 195.1 538.3 197.5 540 197zM540 197L538.3 197.5 541.1 199.8 542.8 199zM542.8 199L541.1 199.8 544 201.9 545.7 201zM528.6 217.4L526.8 217.8 529.5 222.4 531.4 221.7zM531.4 221.7L529.5 222.4 532.3 226.6 534.1 225.8zM320.2 171.7L317.9 174.3 319.8 172.2 322.2 169.3zM315.5 177.1L313.1 179.9 315.1 178.1 317.5 175.1zM317.5 175.1L315.1 178.1 317 176 319.4 172.8zM310.8 182.7L308.4 185.6 310.3 184.2 312.7 181.1zM312.7 181.1L310.3 184.2 312.3 182.5 314.7 179.2zM308.4 185.6L306 188.4 308 187.2 310.3 184.2zM310.3 184.2L308 187.2 309.9 185.8 312.3 182.5zM328.3 160.8L326 166.1 328.1 162.9 330.4 157.3zM306 188.4L303.6 191.2 305.6 190.3 308 187.2zM308 187.2L305.6 190.3 307.6 189 309.9 185.8zM303.6 191.2L301.1 194 303.2 193.3 305.6 190.3zM305.6 190.3L303.2 193.3 305.2 192.3 307.6 189zM301.1 194L298.7 196.8 300.8 196.2 303.2 193.3zM303.2 193.3L300.8 196.2 302.8 195.5 305.2 192.3zM298.7 196.8L296.2 199.5 298.3 199.1 300.8 196.2zM300.8 196.2L298.3 199.1 300.4 198.6 302.8 195.5zM296.2 199.5L293.8 202.1 295.9 202 298.3 199.1zM298.3 199.1L295.9 202 297.9 201.7 300.4 198.6zM293.8 202.1L291.3 204.6 293.4 204.7 295.9 202zM295.9 202L293.4 204.7 295.5 204.6 297.9 201.7zM291.3 204.6L288.7 207 290.9 207.4 293.4 204.7zM293.4 204.7L290.9 207.4 293 207.5 295.5 204.6zM288.7 207L286.2 209.4 288.3 209.9 290.9 207.4zM290.9 207.4L288.3 209.9 290.5 210.2 293 207.5zM286.2 209.4L283.6 211.6 285.8 212.3 288.3 209.9zM288.3 209.9L285.8 212.3 287.9 212.8 290.5 210.2zM283.6 211.6L280.9 213.6 283.1 214.6 285.8 212.3zM285.8 212.3L283.1 214.6 285.3 215.3 287.9 212.8zM280.9 213.6L278.3 215.6 280.5 216.7 283.1 214.6zM276 214.3L273.3 215.9 275.5 217.3 278.3 215.6zM278.3 215.6L275.5 217.3 277.8 218.7 280.5 216.7zM271 214.2L268.2 215.5 270.5 217.3 273.3 215.9zM273.3 215.9L270.5 217.3 272.8 219 275.5 217.3zM265.8 213.6L262.9 214.6 265.3 216.7 268.2 215.5zM268.2 215.5L265.3 216.7 267.6 218.7 270.5 217.3zM258.1 210L255.2 210.7 257.6 213.2 260.6 212.4zM260.6 212.4L257.6 213.2 260 215.6 262.9 214.6zM262.9 214.6L260 215.6 262.4 217.8 265.3 216.7zM250.3 205.4L247.2 205.8 249.7 208.6 252.7 208.1zM252.7 208.1L249.7 208.6 252.1 211.3 255.2 210.7zM255.2 210.7L252.1 211.3 254.6 213.9 257.6 213.2zM304.2 238.3L301.7 242.4 304.1 243.2 306.6 238.9z"/><path fill="#787800" d="M572.2 188.8L570.3 191.5 573.5 191.8 575.4 188.9zM567.1 191.2L565.3 193.7 568.4 194.2 570.3 191.5zM570.3 191.5L568.4 194.2 571.6 194.5 573.5 191.8zM565.3 193.7L563.4 196.1 566.5 196.7 568.4 194.2zM560.3 195.4L558.5 197.5 561.6 198.3 563.4 196.1zM563.4 196.1L561.6 198.3 564.7 199 566.5 196.7zM558.5 197.5L556.8 199.5 559.8 200.4 561.6 198.3zM550.8 197.1L549.1 198.6 552 200 553.8 198.3zM553.8 198.3L552 200 555 201.3 556.8 199.5zM515.9 173.9L514.4 172.8 517 175.4 518.6 176.3zM518.6 176.3L517 175.4 519.7 177.9 521.3 178.6zM521.3 178.6L519.7 177.9 522.4 180.4 523.9 180.9zM523.9 180.9L522.4 180.4 525.1 182.9 526.7 183.2zM526.7 183.2L525.1 182.9 527.8 185.3 529.4 185.4zM529.4 185.4L527.8 185.3 530.5 187.7 532.1 187.6zM532.1 187.6L530.5 187.7 533.3 190 534.9 189.7zM534.9 189.7L533.3 190 536 192.2 537.7 191.7zM537.7 191.7L536 192.2 538.8 194.3 540.5 193.6zM540.5 193.6L538.8 194.3 541.6 196.3 543.3 195.4zM543.3 195.4L541.6 196.3 544.5 198.1 546.2 197zM546.2 197L544.5 198.1 547.4 199.9 549.1 198.6zM549.1 198.6L547.4 199.9 550.3 201.5 552 200zM502.7 154.8L501.1 151.8 503.8 157.3 505.4 160zM503.8 157.3L502.1 154.6 504.7 160.4 506.4 162.9zM510 179.2L508.3 178.1 510.9 184.5 512.6 185.4zM512.6 185.4L510.9 184.5 513.5 190.7 515.3 191.3zM515.3 191.3L513.5 190.7 516.1 196.6 517.9 197.1zM517.9 197.1L516.1 196.6 518.7 202.3 520.5 202.6zM520.5 202.6L518.7 202.3 521.4 207.8 523.2 207.8zM523.2 207.8L521.4 207.8 524.1 212.9 525.9 212.7zM525.9 212.7L524.1 212.9 526.8 217.8 528.6 217.4zM541 237.3L539.1 238.6 542.1 241.7 544 240.2zM544 240.2L542.1 241.7 545.1 244.4 547 242.8zM318.3 173.7L315.9 176.2 317.9 174.3 320.2 171.7zM311.2 181.4L308.8 184 310.8 182.7 313.1 179.9zM308.8 184L306.4 186.7 308.4 185.6 310.8 182.7zM306.4 186.7L304 189.3 306 188.4 308.4 185.6zM304 189.3L301.5 191.9 303.6 191.2 306 188.4zM328.1 162.9L325.8 168.5 327.9 165.6 330.2 159.7zM301.5 191.9L299.1 194.5 301.1 194 303.6 191.2zM299.1 194.5L296.6 197.1 298.7 196.8 301.1 194zM296.6 197.1L294.2 199.5 296.2 199.5 298.7 196.8zM294.2 199.5L291.7 202 293.8 202.1 296.2 199.5zM291.7 202L289.1 204.3 291.3 204.6 293.8 202.1zM289.1 204.3L286.6 206.5 288.7 207 291.3 204.6zM286.6 206.5L284 208.6 286.2 209.4 288.7 207zM284 208.6L281.4 210.6 283.6 211.6 286.2 209.4zM281.4 210.6L278.7 212.5 280.9 213.6 283.6 211.6zM276.5 211.2L273.7 212.8 276 214.3 278.7 212.5zM278.7 212.5L276 214.3 278.3 215.6 280.9 213.6zM273.7 212.8L271 214.2 273.3 215.9 276 214.3zM266.3 210.5L263.5 211.5 265.8 213.6 268.7 212.4zM268.7 212.4L265.8 213.6 268.2 215.5 271 214.2zM258.7 206.8L255.7 207.5 258.1 210 261.1 209.2zM261.1 209.2L258.1 210 260.6 212.4 263.5 211.5zM263.5 211.5L260.6 212.4 262.9 214.6 265.8 213.6zM309.1 229.1L306.7 233.8 309.1 234.3 311.5 229.3zM253.3 204.9L250.3 205.4 252.7 208.1 255.7 207.5zM255.7 207.5L252.7 208.1 255.2 210.7 258.1 210zM306.7 233.8L304.2 238.3 306.6 238.9 309.1 234.3zM296.2 254.1L293.5 257.1 296 258.4 298.7 255.3z"/><path fill="#7b7b00" d="M565.9 188.1L564 190.7 567.1 191.2 569 188.5zM569 188.5L567.1 191.2 570.3 191.5 572.2 188.8zM564 190.7L562.2 193.1 565.3 193.7 567.1 191.2zM559.1 192.4L557.3 194.6 560.3 195.4 562.2 193.1zM562.2 193.1L560.3 195.4 563.4 196.1 565.3 193.7zM554.3 193.6L552.5 195.5 555.5 196.5 557.3 194.6zM557.3 194.6L555.5 196.5 558.5 197.5 560.3 195.4zM511 169.3L509.5 168.3 512.1 170.4 513.7 171.2zM513.7 171.2L512.1 170.4 514.8 172.6 516.4 173.2zM516.4 173.2L514.8 172.6 517.5 174.7 519 175.2zM519 175.2L517.5 174.7 520.1 176.9 521.7 177.2zM521.7 177.2L520.1 176.9 522.8 179 524.4 179.2zM524.4 179.2L522.8 179 525.5 181.2 527.1 181.1zM527.1 181.1L525.5 181.2 528.2 183.2 529.9 183zM529.9 183L528.2 183.2 531 185.3 532.6 184.9zM532.6 184.9L531 185.3 533.7 187.2 535.4 186.6zM535.4 186.6L533.7 187.2 536.5 189.1 538.2 188.4zM538.2 188.4L536.5 189.1 539.3 190.9 541 190zM541 190L539.3 190.9 542.1 192.6 543.8 191.5zM543.8 191.5L542.1 192.6 545 194.2 546.7 192.9zM546.7 192.9L545 194.2 547.9 195.7 549.6 194.3zM549.6 194.3L547.9 195.7 550.8 197.1 552.5 195.5zM552.5 195.5L550.8 197.1 553.8 198.3 555.5 196.5zM555.5 196.5L553.8 198.3 556.8 199.5 558.5 197.5zM514.8 172.6L513.2 171.6 515.9 173.9 517.5 174.7zM517.5 174.7L515.9 173.9 518.6 176.3 520.1 176.9zM520.1 176.9L518.6 176.3 521.3 178.6 522.8 179zM522.8 179L521.3 178.6 523.9 180.9 525.5 181.2zM525.5 181.2L523.9 180.9 526.7 183.2 528.2 183.2zM528.2 183.2L526.7 183.2 529.4 185.4 531 185.3zM531 185.3L529.4 185.4 532.1 187.6 533.7 187.2zM533.7 187.2L532.1 187.6 534.9 189.7 536.5 189.1zM536.5 189.1L534.9 189.7 537.7 191.7 539.3 190.9zM539.3 190.9L537.7 191.7 540.5 193.6 542.1 192.6zM542.1 192.6L540.5 193.6 543.3 195.4 545 194.2zM545 194.2L543.3 195.4 546.2 197 547.9 195.7zM547.9 195.7L546.2 197 549.1 198.6 550.8 197.1zM504.7 160.4L503.1 158 505.7 164.1 507.3 166.2zM505.7 164.1L504 162 506.6 168.3 508.3 170.1zM535.2 230.5L533.3 231.5 536.2 235.2 538 234.1zM538 234.1L536.2 235.2 539.1 238.6 541 237.3zM314.4 176.6L312 178.9 314 177.7 316.3 175.3zM316.3 175.3L314 177.7 315.9 176.2 318.3 173.7zM312 178.9L309.6 181.1 311.6 180.1 314 177.7zM314 177.7L311.6 180.1 313.5 178.8 315.9 176.2zM309.6 181.1L307.2 183.4 309.2 182.5 311.6 180.1zM311.6 180.1L309.2 182.5 311.2 181.4 313.5 178.8zM307.2 183.4L304.8 185.7 306.8 185 309.2 182.5zM309.2 182.5L306.8 185 308.8 184 311.2 181.4zM304.8 185.7L302.4 188 304.4 187.5 306.8 185zM306.8 185L304.4 187.5 306.4 186.7 308.8 184zM302.4 188L299.9 190.2 301.9 189.9 304.4 187.5zM304.4 187.5L301.9 189.9 304 189.3 306.4 186.7zM299.9 190.2L297.5 192.5 299.5 192.3 301.9 189.9zM301.9 189.9L299.5 192.3 301.5 191.9 304 189.3zM297.5 192.5L295 194.7 297.1 194.7 299.5 192.3zM299.5 192.3L297.1 194.7 299.1 194.5 301.5 191.9zM327.9 165.6L325.6 171.5 327.8 168.8 330 162.6zM295 194.7L292.5 196.9 294.6 197.1 297.1 194.7zM297.1 194.7L294.6 197.1 296.6 197.1 299.1 194.5zM292.5 196.9L290 199 292.1 199.4 294.6 197.1zM294.6 197.1L292.1 199.4 294.2 199.5 296.6 197.1zM290 199L287.4 201 289.6 201.6 292.1 199.4zM292.1 199.4L289.6 201.6 291.7 202 294.2 199.5zM287.4 201L284.8 202.9 287 203.7 289.6 201.6zM289.6 201.6L287 203.7 289.1 204.3 291.7 202zM284.8 202.9L282.2 204.8 284.4 205.8 287 203.7zM287 203.7L284.4 205.8 286.6 206.5 289.1 204.3zM325.4 188.3L323.1 194.8 325.5 193.7 327.7 186.9zM282.2 204.8L279.6 206.5 281.8 207.7 284.4 205.8zM284.4 205.8L281.8 207.7 284 208.6 286.6 206.5zM323.1 194.8L320.9 201.2 323.2 200.3 325.5 193.7zM279.6 206.5L276.9 208.2 279.2 209.5 281.8 207.7zM281.8 207.7L279.2 209.5 281.4 210.6 284 208.6zM320.9 201.2L318.6 207.3 320.9 206.6 323.2 200.3zM276.9 208.2L274.2 209.7 276.5 211.2 279.2 209.5zM279.2 209.5L276.5 211.2 278.7 212.5 281.4 210.6zM318.6 207.3L316.3 213.1 318.6 212.7 320.9 206.6zM271.9 208L269.2 209.3 271.5 211.1 274.2 209.7zM274.2 209.7L271.5 211.1 273.7 212.8 276.5 211.2zM316.3 213.1L313.9 218.7 316.3 218.5 318.6 212.7zM266.8 207.3L264 208.3 266.3 210.5 269.2 209.3zM269.2 209.3L266.3 210.5 268.7 212.4 271.5 211.1zM271.5 211.1L268.7 212.4 271 214.2 273.7 212.8zM313.9 218.7L311.5 224.1 313.9 224.1 316.3 218.5zM259.2 203.6L256.3 204.3 258.7 206.8 261.6 206.1zM261.6 206.1L258.7 206.8 261.1 209.2 264 208.3zM264 208.3L261.1 209.2 263.5 211.5 266.3 210.5zM311.5 224.1L309.1 229.1 311.5 229.3 313.9 224.1zM256.3 204.3L253.3 204.9 255.7 207.5 258.7 206.8zM301.5 247.1L298.9 250.8 301.4 251.9 304 248.1zM298.9 250.8L296.2 254.1 298.7 255.3 301.4 251.9z"/><path fill="#7e7e00" d="M509.5 165.6L507.9 165.6 510.5 167.1 512.2 167zM512.2 167L510.5 167.1 513.2 168.7 514.8 168.4zM514.8 168.4L513.2 168.7 515.8 170.2 517.5 169.9zM517.5 169.9L515.8 170.2 518.5 171.8 520.1 171.3zM520.1 171.3L518.5 171.8 521.2 173.3 522.8 172.8zM522.8 172.8L521.2 173.3 523.9 174.9 525.5 174.2zM525.5 174.2L523.9 174.9 526.6 176.4 528.2 175.6zM528.2 175.6L526.6 176.4 529.3 177.9 531 176.9zM531 176.9L529.3 177.9 532 179.4 533.7 178.3zM533.7 178.3L532 179.4 534.8 180.8 536.5 179.5zM536.5 179.5L534.8 180.8 537.6 182.1 539.3 180.7zM539.3 180.7L537.6 182.1 540.4 183.4 542.1 181.9zM542.1 181.9L540.4 183.4 543.2 184.7 545 183zM545 183L543.2 184.7 546.1 185.8 547.9 184zM547.9 184L546.1 185.8 549 186.9 550.8 184.9zM550.8 184.9L549 186.9 551.9 187.8 553.7 185.7zM553.7 185.7L551.9 187.8 554.9 188.7 556.7 186.5zM556.7 186.5L554.9 188.7 557.9 189.5 559.7 187.1zM559.7 187.1L557.9 189.5 560.9 190.1 562.8 187.7zM562.8 187.7L560.9 190.1 564 190.7 565.9 188.1zM510.5 167.1L508.9 166.9 511.6 168.6 513.2 168.7zM513.2 168.7L511.6 168.6 514.2 170.2 515.8 170.2zM515.8 170.2L514.2 170.2 516.9 171.9 518.5 171.8zM518.5 171.8L516.9 171.9 519.5 173.6 521.2 173.3zM521.2 173.3L519.5 173.6 522.2 175.3 523.9 174.9zM523.9 174.9L522.2 175.3 524.9 177 526.6 176.4zM526.6 176.4L524.9 177 527.7 178.6 529.3 177.9zM529.3 177.9L527.7 178.6 530.4 180.2 532 179.4zM532 179.4L530.4 180.2 533.1 181.8 534.8 180.8zM534.8 180.8L533.1 181.8 535.9 183.3 537.6 182.1zM537.6 182.1L535.9 183.3 538.7 184.7 540.4 183.4zM540.4 183.4L538.7 184.7 541.5 186.1 543.2 184.7zM543.2 184.7L541.5 186.1 544.4 187.4 546.1 185.8zM546.1 185.8L544.4 187.4 547.3 188.6 549 186.9zM549 186.9L547.3 188.6 550.2 189.7 551.9 187.8zM551.9 187.8L550.2 189.7 553.1 190.7 554.9 188.7zM554.9 188.7L553.1 190.7 556.1 191.6 557.9 189.5zM557.9 189.5L556.1 191.6 559.1 192.4 560.9 190.1zM560.9 190.1L559.1 192.4 562.2 193.1 564 190.7zM511.6 168.6L510 168.1 512.6 169.9 514.2 170.2zM514.2 170.2L512.6 169.9 515.3 171.7 516.9 171.9zM516.9 171.9L515.3 171.7 517.9 173.6 519.5 173.6zM519.5 173.6L517.9 173.6 520.6 175.4 522.2 175.3zM522.2 175.3L520.6 175.4 523.3 177.2 524.9 177zM524.9 177L523.3 177.2 526 179 527.7 178.6zM527.7 178.6L526 179 528.7 180.8 530.4 180.2zM530.4 180.2L528.7 180.8 531.5 182.5 533.1 181.8zM533.1 181.8L531.5 182.5 534.2 184.2 535.9 183.3zM535.9 183.3L534.2 184.2 537 185.8 538.7 184.7zM538.7 184.7L537 185.8 539.8 187.4 541.5 186.1zM541.5 186.1L539.8 187.4 542.7 188.8 544.4 187.4zM544.4 187.4L542.7 188.8 545.5 190.2 547.3 188.6zM547.3 188.6L545.5 190.2 548.4 191.4 550.2 189.7zM550.2 189.7L548.4 191.4 551.3 192.6 553.1 190.7zM553.1 190.7L551.3 192.6 554.3 193.6 556.1 191.6zM556.1 191.6L554.3 193.6 557.3 194.6 559.1 192.4zM512.6 169.9L511 169.3 513.7 171.2 515.3 171.7zM515.3 171.7L513.7 171.2 516.4 173.2 517.9 173.6zM517.9 173.6L516.4 173.2 519 175.2 520.6 175.4zM520.6 175.4L519 175.2 521.7 177.2 523.3 177.2zM523.3 177.2L521.7 177.2 524.4 179.2 526 179zM526 179L524.4 179.2 527.1 181.1 528.7 180.8zM528.7 180.8L527.1 181.1 529.9 183 531.5 182.5zM531.5 182.5L529.9 183 532.6 184.9 534.2 184.2zM534.2 184.2L532.6 184.9 535.4 186.6 537 185.8zM537 185.8L535.4 186.6 538.2 188.4 539.8 187.4zM539.8 187.4L538.2 188.4 541 190 542.7 188.8zM542.7 188.8L541 190 543.8 191.5 545.5 190.2zM545.5 190.2L543.8 191.5 546.7 192.9 548.4 191.4zM548.4 191.4L546.7 192.9 549.6 194.3 551.3 192.6zM551.3 192.6L549.6 194.3 552.5 195.5 554.3 193.6zM506.6 168.3L504.8 166.5 507.4 172.9 509.2 174.4zM507.4 172.9L505.7 171.5 508.3 178.1 510 179.2zM529.5 222.4L527.7 223 530.5 227.4 532.3 226.6zM532.3 226.6L530.5 227.4 533.3 231.5 535.2 230.5zM322.9 167.1L320.5 168.6 322.6 168.1 324.9 166.6zM320.5 168.6L318.2 170.1 320.2 169.8 322.6 168.1zM322.6 168.1L320.2 169.8 322.2 169 324.6 167.3zM318.2 170.1L315.8 171.8 317.9 171.4 320.2 169.8zM320.2 169.8L317.9 171.4 319.9 170.7 322.2 169zM315.8 171.8L313.5 173.4 315.5 173.1 317.9 171.4zM317.9 171.4L315.5 173.1 317.5 172.5 319.9 170.7zM319.9 170.7L317.5 172.5 319.5 171.6 321.9 169.7zM313.5 173.4L311.1 175.1 313.1 174.9 315.5 173.1zM315.5 173.1L313.1 174.9 315.1 174.4 317.5 172.5zM317.5 172.5L315.1 174.4 317.1 173.5 319.5 171.6zM319.5 171.6L317.1 173.5 319.1 172.3 321.5 170.3zM311.1 175.1L308.7 176.8 310.7 176.7 313.1 174.9zM313.1 174.9L310.7 176.7 312.8 176.3 315.1 174.4zM315.1 174.4L312.8 176.3 314.8 175.6 317.1 173.5zM317.1 173.5L314.8 175.6 316.7 174.5 319.1 172.3zM308.7 176.8L306.3 178.5 308.3 178.5 310.7 176.7zM310.7 176.7L308.3 178.5 310.4 178.2 312.8 176.3zM312.8 176.3L310.4 178.2 312.4 177.6 314.8 175.6zM314.8 175.6L312.4 177.6 314.4 176.6 316.7 174.5zM306.3 178.5L303.9 180.2 305.9 180.4 308.3 178.5zM308.3 178.5L305.9 180.4 308 180.2 310.4 178.2zM310.4 178.2L308 180.2 310 179.7 312.4 177.6zM312.4 177.6L310 179.7 312 178.9 314.4 176.6zM303.9 180.2L301.4 181.9 303.5 182.2 305.9 180.4zM305.9 180.4L303.5 182.2 305.6 182.2 308 180.2zM308 180.2L305.6 182.2 307.6 181.8 310 179.7zM310 179.7L307.6 181.8 309.6 181.1 312 178.9zM301.4 181.9L299 183.6 301.1 184.1 303.5 182.2zM303.5 182.2L301.1 184.1 303.1 184.1 305.6 182.2zM305.6 182.2L303.1 184.1 305.2 183.9 307.6 181.8zM307.6 181.8L305.2 183.9 307.2 183.4 309.6 181.1zM299 183.6L296.5 185.4 298.6 185.9 301.1 184.1zM301.1 184.1L298.6 185.9 300.7 186.1 303.1 184.1zM303.1 184.1L300.7 186.1 302.7 186.1 305.2 183.9zM305.2 183.9L302.7 186.1 304.8 185.7 307.2 183.4zM296.5 185.4L294 187 296.2 187.7 298.6 185.9zM298.6 185.9L296.2 187.7 298.2 188.1 300.7 186.1zM300.7 186.1L298.2 188.1 300.3 188.2 302.7 186.1zM302.7 186.1L300.3 188.2 302.4 188 304.8 185.7zM294 187L291.5 188.7 293.7 189.5 296.2 187.7zM296.2 187.7L293.7 189.5 295.8 190 298.2 188.1zM298.2 188.1L295.8 190 297.9 190.3 300.3 188.2zM300.3 188.2L297.9 190.3 299.9 190.2 302.4 188zM291.5 188.7L289 190.3 291.2 191.3 293.7 189.5zM293.7 189.5L291.2 191.3 293.3 192 295.8 190zM295.8 190L293.3 192 295.4 192.4 297.9 190.3zM297.9 190.3L295.4 192.4 297.5 192.5 299.9 190.2zM289 190.3L286.5 191.9 288.6 193 291.2 191.3zM291.2 191.3L288.6 193 290.8 193.8 293.3 192zM293.3 192L290.8 193.8 292.9 194.4 295.4 192.4zM295.4 192.4L292.9 194.4 295 194.7 297.5 192.5zM286.5 191.9L283.9 193.4 286.1 194.6 288.6 193zM288.6 193L286.1 194.6 288.2 195.6 290.8 193.8zM290.8 193.8L288.2 195.6 290.4 196.4 292.9 194.4zM292.9 194.4L290.4 196.4 292.5 196.9 295 194.7zM327.8 168.8L325.5 174.9 327.7 172.6 330 166.1zM283.9 193.4L281.3 194.9 283.5 196.2 286.1 194.6zM286.1 194.6L283.5 196.2 285.7 197.4 288.2 195.6zM288.2 195.6L285.7 197.4 287.8 198.3 290.4 196.4zM290.4 196.4L287.8 198.3 290 199 292.5 196.9zM327.7 172.6L325.4 178.9 327.7 176.8 329.9 170.2zM281.3 194.9L278.6 196.2 280.9 197.8 283.5 196.2zM283.5 196.2L280.9 197.8 283.1 199.1 285.7 197.4zM285.7 197.4L283.1 199.1 285.3 200.2 287.8 198.3zM287.8 198.3L285.3 200.2 287.4 201 290 199zM278.6 196.2L276 197.6 278.2 199.2 280.9 197.8zM280.9 197.8L278.2 199.2 280.5 200.7 283.1 199.1zM283.1 199.1L280.5 200.7 282.7 201.9 285.3 200.2zM285.3 200.2L282.7 201.9 284.8 202.9 287.4 201zM276 197.6L273.3 198.8 275.6 200.6 278.2 199.2zM278.2 199.2L275.6 200.6 277.8 202.2 280.5 200.7zM280.5 200.7L277.8 202.2 280 203.6 282.7 201.9zM282.7 201.9L280 203.6 282.2 204.8 284.8 202.9zM273.3 198.8L270.5 199.9 272.8 201.9 275.6 200.6zM275.6 200.6L272.8 201.9 275.1 203.6 277.8 202.2zM277.8 202.2L275.1 203.6 277.4 205.2 280 203.6zM280 203.6L277.4 205.2 279.6 206.5 282.2 204.8zM270.5 199.9L267.8 201 270.1 203.1 272.8 201.9zM272.8 201.9L270.1 203.1 272.4 205 275.1 203.6zM275.1 203.6L272.4 205 274.7 206.7 277.4 205.2zM277.4 205.2L274.7 206.7 276.9 208.2 279.6 206.5zM267.8 201L265 202 267.3 204.2 270.1 203.1zM270.1 203.1L267.3 204.2 269.6 206.2 272.4 205zM272.4 205L269.6 206.2 271.9 208 274.7 206.7zM274.7 206.7L271.9 208 274.2 209.7 276.9 208.2zM265 202L262.1 202.8 264.5 205.2 267.3 204.2zM267.3 204.2L264.5 205.2 266.8 207.3 269.6 206.2zM269.6 206.2L266.8 207.3 269.2 209.3 271.9 208zM262.1 202.8L259.2 203.6 261.6 206.1 264.5 205.2zM264.5 205.2L261.6 206.1 264 208.3 266.8 207.3zM304.1 243.2L301.5 247.1 304 248.1 306.5 244z"/><path fill="#818100" d="M508.3 178.1L506.5 177 509.1 183.6 510.9 184.5zM510.9 184.5L509.1 183.6 511.7 190.1 513.5 190.7zM524.1 212.9L522.3 213.2 525 218.3 526.8 217.8zM526.8 217.8L525 218.3 527.7 223 529.5 222.4zM327.7 176.8L325.4 183.4 327.7 181.7 329.9 174.8zM327.7 181.7L325.4 188.3 327.7 186.9 330 180zM309.1 234.3L306.6 238.9 309 239.5 311.5 234.7zM306.6 238.9L304.1 243.2 306.5 244 309 239.5z"/><path fill="#848400" d="M513.5 190.7L511.7 190.1 514.3 196.3 516.1 196.6zM516.1 196.6L514.3 196.3 516.9 202.2 518.7 202.3zM518.7 202.3L516.9 202.2 519.6 207.9 521.4 207.8zM521.4 207.8L519.6 207.9 522.3 213.2 524.1 212.9zM536.2 235.2L534.3 236.4 537.2 239.9 539.1 238.6zM539.1 238.6L537.2 239.9 540.2 243.1 542.1 241.7zM542.1 241.7L540.2 243.1 543.2 246 545.1 244.4zM330.9 154.3L328.5 159.1 330.6 155.5 332.9 150.4zM311.5 229.3L309.1 234.3 311.5 234.7 313.9 229.6zM298.7 255.3L296 258.4 298.5 259.8 301.2 256.6z"/><path fill="#878700" d="M530.5 227.4L528.6 228.3 531.4 232.5 533.3 231.5zM533.3 231.5L531.4 232.5 534.3 236.4 536.2 235.2zM330.6 155.5L328.3 160.8 330.4 157.3 332.7 151.8zM327.7 186.9L325.5 193.7 327.8 192.6 330.1 185.6zM325.5 193.7L323.2 200.3 325.6 199.5 327.8 192.6zM323.2 200.3L320.9 206.6 323.3 206 325.6 199.5zM320.9 206.6L318.6 212.7 321 212.3 323.3 206zM318.6 212.7L316.3 218.5 318.7 218.4 321 212.3zM316.3 218.5L313.9 224.1 316.3 224.1 318.7 218.4zM313.9 224.1L311.5 229.3 313.9 229.6 316.3 224.1zM304 248.1L301.4 251.9 303.8 253 306.4 249.1zM301.4 251.9L298.7 255.3 301.2 256.6 303.8 253z"/><path fill="#8a8a00" d="M527.7 223L525.9 223.7 528.6 228.3 530.5 227.4zM306.5 244L304 248.1 306.4 249.1 309 244.8z"/><path fill="#8d8d00" d="M509.1 183.6L507.2 182.9 509.8 189.6 511.7 190.1zM511.7 190.1L509.8 189.6 512.5 196 514.3 196.3zM522.3 213.2L520.4 213.6 523.1 218.8 525 218.3zM525 218.3L523.1 218.8 525.9 223.7 527.7 223zM540.2 243.1L538.3 244.6 541.3 247.6 543.2 246zM330.4 157.3L328.1 162.9 330.2 159.7 332.5 153.8zM311.5 234.7L309 239.5 311.5 240.2 313.9 235.2zM309 239.5L306.5 244 309 244.8 311.5 240.2z"/><path fill="#909000" d="M502.1 154.6L500.4 151.9 503.1 158 504.7 160.4zM503.1 158L501.3 155.6 504 162 505.7 164.1zM504 162L502.2 159.9 504.8 166.5 506.6 168.3zM504.8 166.5L503.1 164.8 505.7 171.5 507.4 172.9zM505.7 171.5L503.9 170.2 506.5 177 508.3 178.1zM514.3 196.3L512.5 196 515.1 202.1 516.9 202.2zM516.9 202.2L515.1 202.1 517.7 208 519.6 207.9zM519.6 207.9L517.7 208 520.4 213.6 522.3 213.2zM534.3 236.4L532.4 237.6 535.3 241.3 537.2 239.9zM537.2 239.9L535.3 241.3 538.3 244.6 540.2 243.1zM330.2 159.7L327.9 165.6 330 162.6 332.3 156.4zM330 162.6L327.8 168.8 330 166.1 332.2 159.7zM313.9 229.6L311.5 234.7 313.9 235.2 316.4 229.9zM301.2 256.6L298.5 259.8 301 261.2 303.7 257.9z"/><path fill="#939300" d="M506.5 177L504.6 176.1 507.2 182.9 509.1 183.6zM528.6 228.3L526.7 229.2 529.6 233.6 531.4 232.5zM531.4 232.5L529.6 233.6 532.4 237.6 534.3 236.4zM330 166.1L327.7 172.6 329.9 170.2 332.2 163.5zM329.9 170.2L327.7 176.8 329.9 174.8 332.2 167.9zM329.9 174.8L327.7 181.7 330 180 332.3 172.9zM330 180L327.7 186.9 330.1 185.6 332.4 178.4zM327.8 192.6L325.6 199.5 328 198.7 330.3 191.7zM325.6 199.5L323.3 206 325.7 205.5 328 198.7zM323.3 206L321 212.3 323.4 212.1 325.7 205.5zM321 212.3L318.7 218.4 321.1 218.3 323.4 212.1zM318.7 218.4L316.3 224.1 318.7 224.3 321.1 218.3zM316.3 224.1L313.9 229.6 316.4 229.9 318.7 224.3zM306.4 249.1L303.8 253 306.3 254.1 308.9 250.1zM303.8 253L301.2 256.6 303.7 257.9 306.3 254.1z"/><path fill="#969600" d="M525.9 223.7L524 224.5 526.7 229.2 528.6 228.3zM309 244.8L306.4 249.1 308.9 250.1 311.5 245.6z"/><path fill="#999900" d="M507.2 182.9L505.3 182.4 508 189.2 509.8 189.6zM509.8 189.6L508 189.2 510.6 195.9 512.5 196zM520.4 213.6L518.5 214 521.2 219.4 523.1 218.8zM523.1 218.8L521.2 219.4 524 224.5 525.9 223.7zM538.3 244.6L536.4 246.1 539.4 249.2 541.3 247.6zM330.1 185.6L327.8 192.6 330.3 191.7 332.5 184.5zM311.5 240.2L309 244.8 311.5 245.6 314 240.9z"/><path fill="#9c9c00" d="M512.5 196L510.6 195.9 513.2 202.2 515.1 202.1zM515.1 202.1L513.2 202.2 515.9 208.3 517.7 208zM517.7 208L515.9 208.3 518.5 214 520.4 213.6zM532.4 237.6L530.5 238.9 533.4 242.7 535.3 241.3zM535.3 241.3L533.4 242.7 536.4 246.1 538.3 244.6zM332.9 150.4L330.6 155.5 332.7 151.8 335 146.4zM316.4 229.9L313.9 235.2 316.4 235.7 318.8 230.3zM313.9 235.2L311.5 240.2 314 240.9 316.4 235.7zM303.7 257.9L301 261.2 303.5 262.6 306.2 259.2zM435.3 335.4L432.5 336.4 436 337 438.8 336z"/><path fill="#9f9f00" d="M502.2 159.9L500.4 157.9 503.1 164.8 504.8 166.5zM503.1 164.8L501.2 163.2 503.9 170.2 505.7 171.5zM503.9 170.2L502 169 504.6 176.1 506.5 177zM526.7 229.2L524.8 230.2 527.6 234.7 529.6 233.6zM529.6 233.6L527.6 234.7 530.5 238.9 532.4 237.6zM330.3 191.7L328 198.7 330.4 198.2 332.7 190.9zM328 198.7L325.7 205.5 328.1 205.2 330.4 198.2zM321.1 218.3L318.7 224.3 321.2 224.5 323.5 218.3zM318.7 224.3L316.4 229.9 318.8 230.3 321.2 224.5zM308.9 250.1L306.3 254.1 308.9 255.3 311.4 251.1zM440.8 333.1L438 334.3 441.6 334.9 444.3 333.8zM306.3 254.1L303.7 257.9 306.2 259.2 308.9 255.3zM438 334.3L435.3 335.4 438.8 336 441.6 334.9zM428.3 333.9L425.4 335 428.9 335.7 431.7 334.7zM431.7 334.7L428.9 335.7 432.5 336.4 435.3 335.4z"/><path fill="#a2a200" d="M498.5 146.3L496.8 143 499.5 148.8 501.1 151.8zM499.5 148.8L497.8 145.8 500.4 151.9 502.1 154.6zM500.4 151.9L498.7 149.2 501.3 155.6 503.1 158zM501.3 155.6L499.6 153.3 502.2 159.9 504 162zM504.6 176.1L502.7 175.3 505.3 182.4 507.2 182.9zM524 224.5L522.1 225.3 524.8 230.2 526.7 229.2zM332.7 151.8L330.4 157.3 332.5 153.8 334.8 148.1zM325.7 205.5L323.4 212.1 325.8 211.9 328.1 205.2zM323.4 212.1L321.1 218.3 323.5 218.3 325.8 211.9zM311.5 245.6L308.9 250.1 311.4 251.1 314 246.6zM443.5 331.9L440.8 333.1 444.3 333.8 447 332.6zM437.2 332.4L434.5 333.6 438 334.3 440.8 333.1zM431 332.8L428.3 333.9 431.7 334.7 434.5 333.6zM434.5 333.6L431.7 334.7 435.3 335.4 438 334.3zM424.8 333.1L422 334.2 425.4 335 428.3 333.9z"/><path fill="#a5a500" d="M518.5 214L516.6 214.5 519.3 220.1 521.2 219.4zM521.2 219.4L519.3 220.1 522.1 225.3 524 224.5zM536.4 246.1L534.4 247.7 537.5 250.9 539.4 249.2zM332.5 153.8L330.2 159.7 332.3 156.4 334.6 150.3zM332.3 156.4L330 162.6 332.2 159.7 334.5 153.2zM332.2 159.7L330 166.1 332.2 163.5 334.5 156.8zM332.2 163.5L329.9 170.2 332.2 167.9 334.5 160.9zM332.2 167.9L329.9 174.8 332.3 172.9 334.5 165.7zM332.3 172.9L330 180 332.4 178.4 334.6 171.1zM332.4 178.4L330.1 185.6 332.5 184.5 334.8 177zM448.8 329.1L446.1 330.5 449.7 331.3 452.3 329.9zM314 240.9L311.5 245.6 314 246.6 316.5 241.6zM446.1 330.5L443.5 331.9 447 332.6 449.7 331.3zM440 331L437.2 332.4 440.8 333.1 443.5 331.9zM427.6 331.8L424.8 333.1 428.3 333.9 431 332.8zM418 331.1L415.2 332.3 418.6 333.3 421.4 332.1zM421.4 332.1L418.6 333.3 422 334.2 424.8 333.1z"/><path fill="#a8a800" d="M505.3 182.4L503.4 182 506 189 508 189.2zM508 189.2L506 189 508.7 195.9 510.6 195.9zM510.6 195.9L508.7 195.9 511.3 202.4 513.2 202.2zM513.2 202.2L511.3 202.4 514 208.6 515.9 208.3zM515.9 208.3L514 208.6 516.6 214.5 518.5 214zM530.5 238.9L528.6 240.2 531.5 244.1 533.4 242.7zM533.4 242.7L531.5 244.1 534.4 247.7 536.4 246.1zM332.5 184.5L330.3 191.7 332.7 190.9 335 183.5zM451.4 327.6L448.8 329.1 452.3 329.9 454.9 328.5zM316.4 235.7L314 240.9 316.5 241.6 318.9 236.4zM442.6 329.6L440 331 443.5 331.9 446.1 330.5zM433.8 331.5L431 332.8 434.5 333.6 437.2 332.4zM424.2 330.8L421.4 332.1 424.8 333.1 427.6 331.8zM306.2 259.2L303.5 262.6 306.1 264.1 308.8 260.5zM414.7 329.9L411.9 331.3 415.2 332.3 418 331.1z"/><path fill="#abab00" d="M527.6 234.7L525.7 236 528.6 240.2 530.5 238.9zM321.2 224.5L318.8 230.3 321.3 230.7 323.7 224.8zM454 325.9L451.4 327.6 454.9 328.5 457.5 326.9zM318.8 230.3L316.4 235.7 318.9 236.4 321.3 230.7zM445.3 328.1L442.6 329.6 446.1 330.5 448.8 329.1zM436.5 330.1L433.8 331.5 437.2 332.4 440 331zM430.4 330.5L427.6 331.8 431 332.8 433.8 331.5zM308.9 255.3L306.2 259.2 308.8 260.5 311.4 256.5zM420.8 329.7L418 331.1 421.4 332.1 424.2 330.8zM411.4 328.7L408.6 330.1 411.9 331.3 414.7 329.9z"/><path fill="#aeae00" d="M500.4 157.9L498.6 156.1 501.2 163.2 503.1 164.8zM501.2 163.2L499.4 161.8 502 169 503.9 170.2zM502 169L500.1 168 502.7 175.3 504.6 176.1zM522.1 225.3L520.1 226.3 522.9 231.3 524.8 230.2zM524.8 230.2L522.9 231.3 525.7 236 527.6 234.7zM332.7 190.9L330.4 198.2 332.9 197.8 335.2 190.3zM330.4 198.2L328.1 205.2 330.6 204.9 332.9 197.8zM328.1 205.2L325.8 211.9 328.3 211.9 330.6 204.9zM325.8 211.9L323.5 218.3 326 218.5 328.3 211.9zM323.5 218.3L321.2 224.5 323.7 224.8 326 218.5zM456.6 324.2L454 325.9 457.5 326.9 460.1 325.3zM447.9 326.5L445.3 328.1 448.8 329.1 451.4 327.6zM439.2 328.6L436.5 330.1 440 331 442.6 329.6zM314 246.6L311.4 251.1 314 252.2 316.5 247.6zM311.4 251.1L308.9 255.3 311.4 256.5 314 252.2zM427 329.4L424.2 330.8 427.6 331.8 430.4 330.5zM417.5 328.5L414.7 329.9 418 331.1 420.8 329.7zM408.1 327.3L405.3 328.8 408.6 330.1 411.4 328.7z"/><path fill="#b1b100" d="M499.6 153.3L497.8 151 500.4 157.9 502.2 159.9zM502.7 175.3L500.8 174.7 503.4 182 505.3 182.4zM519.3 220.1L517.4 220.9 520.1 226.3 522.1 225.3zM450.5 324.8L447.9 326.5 451.4 327.6 454 325.9zM441.9 327L439.2 328.6 442.6 329.6 445.3 328.1zM316.5 241.6L314 246.6 316.5 247.6 319 242.5zM433.1 329L430.4 330.5 433.8 331.5 436.5 330.1zM423.6 328.2L420.8 329.7 424.2 330.8 427 329.4zM414.2 327.1L411.4 328.7 414.7 329.9 417.5 328.5zM404.9 325.8L402 327.4 405.3 328.8 408.1 327.3z"/><path fill="#b4b400" d="M498.7 149.2L497 146.6 499.6 153.3 501.3 155.6zM506 189L504.1 189 506.7 196 508.7 195.9zM508.7 195.9L506.7 196 509.3 202.7 511.3 202.4zM511.3 202.4L509.3 202.7 512 209.1 514 208.6zM514 208.6L512 209.1 514.7 215.2 516.6 214.5zM516.6 214.5L514.7 215.2 517.4 220.9 519.3 220.1zM447.3 49L444.9 46 448.1 50.1 450.4 53zM531.5 244.1L529.5 245.6 532.5 249.3 534.4 247.7zM534.4 247.7L532.5 249.3 535.5 252.5 537.5 250.9zM441.8 42.6L439.3 40.1 442.5 43.6 444.9 46zM384.2 51.4L381.5 54.9 384.3 51.2 387 47.6zM335 146.4L332.7 151.8 334.8 148.1 337.1 142.4zM334.5 165.7L332.3 172.9 334.6 171.1 336.9 163.7zM334.6 171.1L332.4 178.4 334.8 177 337 169.5zM459.1 322.3L456.6 324.2 460.1 325.3 462.6 323.5zM453.1 322.9L450.5 324.8 454 325.9 456.6 324.2zM444.5 325.3L441.9 327 445.3 328.1 447.9 326.5zM318.9 236.4L316.5 241.6 319 242.5 321.4 237.1zM435.8 327.4L433.1 329 436.5 330.1 439.2 328.6zM429.7 327.8L427 329.4 430.4 330.5 433.1 329zM420.3 326.8L417.5 328.5 420.8 329.7 423.6 328.2zM411 325.6L408.1 327.3 411.4 328.7 414.2 327.1z"/><path fill="#b7b700" d="M496.8 143L495.1 139.7 497.8 145.8 499.5 148.8zM497.8 145.8L496.1 142.8 498.7 149.2 500.4 151.9zM452.7 56.4L450.4 53 453.5 57.5 455.8 60.8zM503.4 182L501.4 181.8 504.1 189 506 189zM528.6 240.2L526.6 241.6 529.5 245.6 531.5 244.1zM436.1 37.3L433.6 35.5 436.8 38.3 439.3 40.1zM421.5 30L418.8 29.4 422 30.1 424.6 30.7zM415.7 29.5L413 29.6 416.1 29.6 418.8 29.4zM409.9 30.4L407.1 31.3 410.3 30.5 413 29.6zM404.1 32.7L401.3 34.3 404.4 32.9 407.1 31.3zM398.3 36.4L395.6 38.7 398.6 36.6 401.3 34.3zM387 47.6L384.3 51.2 387.2 48 389.9 44.4zM334.8 148.1L332.5 153.8 334.6 150.3 336.9 144.3zM334.5 156.8L332.2 163.5 334.5 160.9 336.8 153.9zM334.5 160.9L332.2 167.9 334.5 165.7 336.8 158.5zM334.8 177L332.5 184.5 335 183.5 337.2 175.8zM461.7 320.4L459.1 322.3 462.6 323.5 465.1 321.7zM447.1 323.4L444.5 325.3 447.9 326.5 450.5 324.8zM321.3 230.7L318.9 236.4 321.4 237.1 323.8 231.3zM438.5 325.7L435.8 327.4 439.2 328.6 441.9 327zM426.4 326.5L423.6 328.2 427 329.4 429.7 327.8zM417 325.4L414.2 327.1 417.5 328.5 420.3 326.8zM407.7 324L404.9 325.8 408.1 327.3 411 325.6zM308.8 260.5L306.1 264.1 308.7 265.5 311.3 261.9zM401.7 324.3L398.8 326 402 327.4 404.9 325.8z"/><path fill="#baba00" d="M498.6 156.1L496.7 154.5 499.4 161.8 501.2 163.2zM499.4 161.8L497.5 160.6 500.1 168 502 169zM455.8 60.8L453.5 57.5 456.6 62.7 458.8 65.8zM450.4 53L448.1 50.1 451.2 54.7 453.5 57.5zM522.9 231.3L520.9 232.5 523.7 237.2 525.7 236zM525.7 236L523.7 237.2 526.6 241.6 528.6 240.2zM444.9 46L442.5 43.6 445.6 47.7 448.1 50.1zM430.4 33.3L427.8 32.1 431 34.2 433.6 35.5zM381.5 54.9L378.8 59 381.7 55.4 384.3 51.2zM334.6 150.3L332.3 156.4 334.5 153.2 336.8 146.8zM334.5 153.2L332.2 159.7 334.5 156.8 336.8 150zM335 183.5L332.7 190.9 335.2 190.3 337.5 182.6zM464.2 318.4L461.7 320.4 465.1 321.7 467.6 319.8zM455.7 321L453.1 322.9 456.6 324.2 459.1 322.3zM326 218.5L323.7 224.8 326.2 225.2 328.5 218.7zM323.7 224.8L321.3 230.7 323.8 231.3 326.2 225.2zM441.1 323.9L438.5 325.7 441.9 327 444.5 325.3zM432.4 326.2L429.7 327.8 433.1 329 435.8 327.4zM423 325.1L420.3 326.8 423.6 328.2 426.4 326.5zM314 252.2L311.4 256.5 314 257.8 316.6 253.4zM311.4 256.5L308.8 260.5 311.3 261.9 314 257.8zM398.5 322.6L395.6 324.4 398.8 326 401.7 324.3z"/><path fill="#bdbd00" d="M497.8 151L496 149 498.6 156.1 500.4 157.9zM461 69.4L458.8 65.8 461.8 71.4 464 74.8zM500.1 168L498.2 167.2 500.8 174.7 502.7 175.3zM453.5 57.5L451.2 54.7 454.3 60 456.6 62.7zM520.1 226.3L518.2 227.3 520.9 232.5 522.9 231.3zM448.1 50.1L445.6 47.7 448.8 52.5 451.2 54.7zM439.3 40.1L436.8 38.3 440 41.8 442.5 43.6zM424.6 30.7L422 30.1 425.2 31.5 427.8 32.1zM395.6 38.7L392.9 41.7 395.9 39.7 398.6 36.6zM389.9 44.4L387.2 48 390.2 45.4 392.9 41.7zM384.3 51.2L381.7 55.4 384.5 52.3 387.2 48zM373.4 67.5L370.8 72 373.5 67.7 376.1 63.1zM376.1 63.1L373.5 67.7 376.2 63.7 378.8 59zM466.7 316.3L464.2 318.4 467.6 319.8 470.1 317.8zM332.9 197.8L330.6 204.9 333.2 204.9 335.5 197.5zM330.6 204.9L328.3 211.9 330.9 212 333.2 204.9zM458.2 318.9L455.7 321 459.1 322.3 461.7 320.4zM328.3 211.9L326 218.5 328.5 218.7 330.9 212zM449.7 321.5L447.1 323.4 450.5 324.8 453.1 322.9zM316.5 247.6L314 252.2 316.6 253.4 319.1 248.6zM413.7 323.8L411 325.6 414.2 327.1 417 325.4zM404.5 322.4L401.7 324.3 404.9 325.8 407.7 324zM395.3 320.8L392.5 322.8 395.6 324.4 398.5 322.6z"/><path fill="#c0c000" d="M458.8 65.8L456.6 62.7 459.6 68.3 461.8 71.4zM500.8 174.7L498.8 174.3 501.4 181.8 503.4 182zM517.4 220.9L515.4 221.8 518.2 227.3 520.1 226.3zM442.5 43.6L440 41.8 443.2 46 445.6 47.7zM433.6 35.5L431 34.2 434.2 37.1 436.8 38.3zM418.8 29.4L416.1 29.6 419.3 30.3 422 30.1zM407.1 31.3L404.4 32.9 407.6 32.1 410.3 30.5zM401.3 34.3L398.6 36.6 401.7 35.2 404.4 32.9zM378.8 59L376.2 63.7 379 60.2 381.7 55.4zM335.2 190.3L332.9 197.8 335.5 197.5 337.7 189.9zM460.8 316.8L458.2 318.9 461.7 320.4 464.2 318.4zM452.3 319.4L449.7 321.5 453.1 322.9 455.7 321zM443.7 321.9L441.1 323.9 444.5 325.3 447.1 323.4zM435.1 324.3L432.4 326.2 435.8 327.4 438.5 325.7zM319 242.5L316.5 247.6 319.1 248.6 321.6 243.5zM429.1 324.7L426.4 326.5 429.7 327.8 432.4 326.2zM419.8 323.5L417 325.4 420.3 326.8 423 325.1zM410.5 322.1L407.7 324 411 325.6 413.7 323.8zM401.3 320.6L398.5 322.6 401.7 324.3 404.5 322.4z"/><path fill="#c3c300" d="M497 146.6L495.2 144.1 497.8 151 499.6 153.3zM466.1 78.6L464 74.8 467 80.6 469.1 84.3zM464 74.8L461.8 71.4 464.8 77.4 467 80.6zM461.8 71.4L459.6 68.3 462.6 74.5 464.8 77.4zM456.6 62.7L454.3 60 457.3 65.8 459.6 68.3zM504.1 189L502.1 189.2 504.7 196.4 506.7 196zM512 209.1L510 209.8 512.7 216 514.7 215.2zM514.7 215.2L512.7 216 515.4 221.8 517.4 220.9zM451.2 54.7L448.8 52.5 451.9 57.8 454.3 60zM529.5 245.6L527.5 247.2 530.5 250.9 532.5 249.3zM532.5 249.3L530.5 250.9 533.5 254.3 535.5 252.5zM445.6 47.7L443.2 46 446.3 50.8 448.8 52.5zM436.8 38.3L434.2 37.1 437.4 40.7 440 41.8zM427.8 32.1L425.2 31.5 428.4 33.7 431 34.2zM392.9 41.7L390.2 45.4 393.2 43.4 395.9 39.7zM387.2 48L384.5 52.3 387.5 49.8 390.2 45.4zM381.7 55.4L379 60.2 381.9 57.2 384.5 52.3zM370.8 72L368.2 77 370.9 72.8 373.5 67.7zM373.5 67.7L370.9 72.8 373.6 69 376.2 63.7zM376.2 63.7L373.6 69 376.4 65.6 379 60.2zM336.9 163.7L334.6 171.1 337 169.5 339.3 161.8zM337 169.5L334.8 177 337.2 175.8 339.5 168zM337.2 175.8L335 183.5 337.5 182.6 339.8 174.8zM469.2 314.1L466.7 316.3 470.1 317.8 472.6 315.7zM446.3 319.9L443.7 321.9 447.1 323.4 449.7 321.5zM437.7 322.4L435.1 324.3 438.5 325.7 441.1 323.9zM321.4 237.1L319 242.5 321.6 243.5 324 237.9zM425.8 323.1L423 325.1 426.4 326.5 429.1 324.7zM416.5 321.8L413.7 323.8 417 325.4 419.8 323.5zM392.2 319L389.3 321 392.5 322.8 395.3 320.8z"/><path fill="#c6c600" d="M496.1 142.8L494.3 139.9 497 146.6 498.7 149.2zM469.1 84.3L467 80.6 469.9 86.9 472 90.4zM496.7 154.5L494.8 153 497.5 160.6 499.4 161.8zM467 80.6L464.8 77.4 467.8 83.8 469.9 86.9zM497.5 160.6L495.5 159.5 498.2 167.2 500.1 168zM459.6 68.3L457.3 65.8 460.4 72.1 462.6 74.5zM506.7 196L504.7 196.4 507.4 203.2 509.3 202.7zM509.3 202.7L507.4 203.2 510 209.8 512 209.1zM454.3 60L451.9 57.8 455 63.7 457.3 65.8zM526.6 241.6L524.6 243.1 527.5 247.2 529.5 245.6zM440 41.8L437.4 40.7 440.6 44.9 443.2 46zM422 30.1L419.3 30.3 422.6 31.7 425.2 31.5zM398.6 36.6L395.9 39.7 399 38.3 401.7 35.2zM384.5 52.3L381.9 57.2 384.8 54.8 387.5 49.8zM368.2 77L365.7 82.5 368.3 78.4 370.9 72.8zM370.9 72.8L368.3 78.4 371 74.8 373.6 69zM336.8 153.9L334.5 160.9 336.8 158.5 339.1 151.2zM336.8 158.5L334.5 165.7 336.9 163.7 339.2 156.2zM471.6 311.8L469.2 314.1 472.6 315.7 475.1 313.6zM463.3 314.5L460.8 316.8 464.2 318.4 466.7 316.3zM454.9 317.2L452.3 319.4 455.7 321 458.2 318.9zM323.8 231.3L321.4 237.1 324 237.9 326.4 232zM407.3 320.3L404.5 322.4 407.7 324 410.5 322.1zM398.1 318.7L395.3 320.8 398.5 322.6 401.3 320.6zM311.3 261.9L308.7 265.5 311.3 267 313.9 263.3zM389 317L386.2 319.2 389.3 321 392.2 319z"/><path fill="#c9c900" d="M495.1 139.7L493.4 136.5 496.1 142.8 497.8 145.8zM496 149L494.1 147.1 496.7 154.5 498.6 156.1zM464.8 77.4L462.6 74.5 465.6 81 467.8 83.8zM498.2 167.2L496.2 166.6 498.8 174.3 500.8 174.7zM501.4 181.8L499.4 181.8 502.1 189.2 504.1 189zM520.9 232.5L518.9 233.8 521.7 238.6 523.7 237.2zM523.7 237.2L521.7 238.6 524.6 243.1 526.6 241.6zM448.8 52.5L446.3 50.8 449.5 56.3 451.9 57.8zM431 34.2L428.4 33.7 431.6 36.6 434.2 37.1zM416.1 29.6L413.4 30.5 416.6 31.2 419.3 30.3zM410.3 30.5L407.6 32.1 410.7 32.1 413.4 30.5zM404.4 32.9L401.7 35.2 404.8 34.5 407.6 32.1zM390.2 45.4L387.5 49.8 390.5 47.8 393.2 43.4zM379 60.2L376.4 65.6 379.2 62.7 381.9 57.2zM373.6 69L371 74.8 373.8 71.5 376.4 65.6zM337.3 141.2L335 146.4 337.1 142.4 339.5 136.9zM336.8 150L334.5 156.8 336.8 153.9 339 146.9zM474.1 309.4L471.6 311.8 475.1 313.6 477.5 311.4zM337.5 182.6L335.2 190.3 337.7 189.9 340 182zM465.8 312.2L463.3 314.5 466.7 316.3 469.2 314.1zM457.4 314.9L454.9 317.2 458.2 318.9 460.8 316.8zM448.9 317.7L446.3 319.9 449.7 321.5 452.3 319.4zM326.2 225.2L323.8 231.3 326.4 232 328.8 225.8zM440.4 320.3L437.7 322.4 441.1 323.9 443.7 321.9zM431.8 322.8L429.1 324.7 432.4 326.2 435.1 324.3zM422.5 321.4L419.8 323.5 423 325.1 425.8 323.1zM413.3 319.9L410.5 322.1 413.7 323.8 416.5 321.8zM316.6 253.4L314 257.8 316.6 259.2 319.1 254.7zM404.1 318.3L401.3 320.6 404.5 322.4 407.3 320.3zM314 257.8L311.3 261.9 313.9 263.3 316.6 259.2zM395 316.7L392.2 319 395.3 320.8 398.1 318.7zM385.9 315L383.1 317.3 386.2 319.2 389 317z"/><path fill="#cccc00" d="M495.2 144.1L493.3 141.8 496 149 497.8 151zM472 90.4L469.9 86.9 472.8 93.5 474.8 96.7zM469.9 86.9L467.8 83.8 470.7 90.5 472.8 93.5zM467.8 83.8L465.6 81 468.5 88 470.7 90.5zM462.6 74.5L460.4 72.1 463.4 78.8 465.6 81zM457.3 65.8L455 63.7 458 70.1 460.4 72.1zM518.2 227.3L516.2 228.5 518.9 233.8 520.9 232.5zM451.9 57.8L449.5 56.3 452.6 62.3 455 63.7zM443.2 46L440.6 44.9 443.8 49.8 446.3 50.8zM434.2 37.1L431.6 36.6 434.9 40.2 437.4 40.7zM425.2 31.5L422.6 31.7 425.8 33.9 428.4 33.7zM395.9 39.7L393.2 43.4 396.2 42.1 399 38.3zM387.5 49.8L384.8 54.8 387.8 52.9 390.5 47.8zM381.9 57.2L379.2 62.7 382.1 60.4 384.8 54.8zM365.7 81.5L363.1 86.9 365.7 82.5 368.2 77zM376.4 65.6L373.8 71.5 376.6 68.8 379.2 62.7zM365.7 82.5L363.2 88.4 365.8 84.5 368.3 78.4zM368.3 78.4L365.8 84.5 368.4 81 371 74.8zM337.1 142.4L334.8 148.1 336.9 144.3 339.3 138.3zM336.9 144.3L334.6 150.3 336.8 146.8 339.1 140.5zM336.8 146.8L334.5 153.2 336.8 150 339.1 143.3zM476.6 307L474.1 309.4 477.5 311.4 479.9 309.1zM468.3 309.8L465.8 312.2 469.2 314.1 471.6 311.8zM335.5 197.5L333.2 204.9 335.8 205 338 197.5zM333.2 204.9L330.9 212 333.4 212.2 335.8 205zM330.9 212L328.5 218.7 331.1 219.2 333.4 212.2zM328.5 218.7L326.2 225.2 328.8 225.8 331.1 219.2zM434.4 320.7L431.8 322.8 435.1 324.3 437.7 322.4zM428.5 321.1L425.8 323.1 429.1 324.7 431.8 322.8zM319.1 248.6L316.6 253.4 319.1 254.7 321.7 249.8zM391.9 314.6L389 317 392.2 319 395 316.7zM382.8 312.9L380 315.4 383.1 317.3 385.9 315z"/><path fill="#cfcf00" d="M474 94.1L472 90.4 474.8 96.7 476.8 100.3zM474.8 96.7L472.8 93.5 475.7 100.4 477.7 103.4zM472.8 93.5L470.7 90.5 473.6 97.6 475.7 100.4zM494.8 153L492.9 151.8 495.5 159.5 497.5 160.6zM465.6 81L463.4 78.8 466.3 85.9 468.5 88zM498.8 174.3L496.8 174.2 499.4 181.8 501.4 181.8zM460.4 72.1L458 70.1 461 77 463.4 78.8zM515.4 221.8L513.4 222.9 516.2 228.5 518.2 227.3zM455 63.7L452.6 62.3 455.6 68.8 458 70.1zM527.5 247.2L525.5 248.8 528.5 252.6 530.5 250.9zM530.5 250.9L528.5 252.6 531.5 256.1 533.5 254.3zM446.3 50.8L443.8 49.8 447 55.3 449.5 56.3zM437.4 40.7L434.9 40.2 438.1 44.5 440.6 44.9zM401.7 35.2L399 38.3 402.1 37.6 404.8 34.5zM393.2 43.4L390.5 47.8 393.5 46.5 396.2 42.1zM379.2 62.7L376.6 68.8 379.5 66.5 382.1 60.4zM363.1 86.9L360.6 92.6 363.2 88.4 365.7 82.5zM371 74.8L368.4 81 371.2 77.9 373.8 71.5zM479 304.5L476.6 307 479.9 309.1 482.3 306.7zM339.3 161.8L337 169.5 339.5 168 341.8 160.1zM339.5 168L337.2 175.8 339.8 174.8 342 166.8zM459.9 312.5L457.4 314.9 460.8 316.8 463.3 314.5zM451.5 315.3L448.9 317.7 452.3 319.4 454.9 317.2zM443 318.1L440.4 320.3 443.7 321.9 446.3 319.9zM419.2 319.6L416.5 321.8 419.8 323.5 422.5 321.4zM410.1 318L407.3 320.3 410.5 322.1 413.3 319.9zM400.9 316.3L398.1 318.7 401.3 320.6 404.1 318.3z"/><path fill="#d2d200" d="M494.3 139.9L492.5 137.2 495.2 144.1 497 146.6zM476.8 100.3L474.8 96.7 477.7 103.4 479.7 106.8zM477.7 103.4L475.7 100.4 478.5 107.5 480.5 110.4zM494.1 147.1L492.2 145.4 494.8 153 496.7 154.5zM475.7 100.4L473.6 97.6 476.4 105 478.5 107.5zM470.7 90.5L468.5 88 471.4 95.3 473.6 97.6zM495.5 159.5L493.5 158.8 496.2 166.6 498.2 167.2zM463.4 78.8L461 77 464 84.2 466.3 85.9zM512.7 216L510.7 216.9 513.4 222.9 515.4 221.8zM458 70.1L455.6 68.8 458.7 75.7 461 77zM524.6 243.1L522.6 244.7 525.5 248.8 527.5 247.2zM449.5 56.3L447 55.3 450.1 61.4 452.6 62.3zM440.6 44.9L438.1 44.5 441.3 49.4 443.8 49.8zM428.4 33.7L425.8 33.9 429 36.8 431.6 36.6zM419.3 30.3L416.6 31.2 419.9 32.6 422.6 31.7zM413.4 30.5L410.7 32.1 413.9 32.8 416.6 31.2zM407.6 32.1L404.8 34.5 408 34.5 410.7 32.1zM399 38.3L396.2 42.1 399.3 41.4 402.1 37.6zM390.5 47.8L387.8 52.9 390.8 51.7 393.5 46.5zM384.8 54.8L382.1 60.4 385.1 58.6 387.8 52.9zM373.8 71.5L371.2 77.9 374 75.3 376.6 68.8zM363.2 88.4L360.6 94.8 363.2 91.1 365.8 84.5zM365.8 84.5L363.2 91.1 365.9 87.7 368.4 81zM368.4 81L365.9 87.7 368.6 84.8 371.2 77.9zM481.4 302L479 304.5 482.3 306.7 484.8 304.3zM339.2 156.2L336.9 163.7 339.3 161.8 341.6 154zM470.8 307.3L468.3 309.8 471.6 311.8 474.1 309.4zM339.8 174.8L337.5 182.6 340 182 342.3 174zM462.5 310.1L459.9 312.5 463.3 314.5 465.8 312.2zM337.7 189.9L335.5 197.5 338 197.5 340.3 189.7zM454.1 312.9L451.5 315.3 454.9 317.2 457.4 314.9zM445.6 315.7L443 318.1 446.3 319.9 448.9 317.7zM437.1 318.5L434.4 320.7 437.7 322.4 440.4 320.3zM425.2 319.2L422.5 321.4 425.8 323.1 428.5 321.1zM321.6 243.5L319.1 248.6 321.7 249.8 324.1 244.5zM416 317.6L413.3 319.9 416.5 321.8 419.2 319.6zM406.9 315.9L404.1 318.3 407.3 320.3 410.1 318zM397.8 314.1L395 316.7 398.1 318.7 400.9 316.3zM388.7 312.4L385.9 315 389 317 391.9 314.6zM313.9 263.3L311.3 267 313.9 268.6 316.6 264.8zM379.8 310.7L376.9 313.3 380 315.4 382.8 312.9z"/><path fill="#d5d500" d="M475.9 98.2L474 94.1 476.8 100.3 478.8 104.1zM479.7 106.8L477.7 103.4 480.5 110.4 482.4 113.5zM480.5 110.4L478.5 107.5 481.3 114.9 483.3 117.5zM478.5 107.5L476.4 105 479.2 112.6 481.3 114.9zM473.6 97.6L471.4 95.3 474.3 102.8 476.4 105zM468.5 88L466.3 85.9 469.2 93.3 471.4 95.3zM496.2 166.6L494.1 166.3 496.8 174.2 498.8 174.3zM502.1 189.2L500 189.6 502.7 196.9 504.7 196.4zM504.7 196.4L502.7 196.9 505.3 203.9 507.4 203.2zM507.4 203.2L505.3 203.9 508 210.6 510 209.8zM510 209.8L508 210.6 510.7 216.9 512.7 216zM521.7 238.6L519.7 240.1 522.6 244.7 524.6 243.1zM452.6 62.3L450.1 61.4 453.2 68 455.6 68.8zM443.8 49.8L441.3 49.4 444.4 55 447 55.3zM447 55.3L444.4 55 447.6 61.1 450.1 61.4zM431.6 36.6L429 36.8 432.2 40.4 434.9 40.2zM404.8 34.5L402.1 37.6 405.2 37.6 408 34.5zM396.2 42.1L393.5 46.5 396.6 45.9 399.3 41.4zM387.8 52.9L385.1 58.6 388.1 57.4 390.8 51.7zM382.1 60.4L379.5 66.5 382.4 64.8 385.1 58.6zM360.6 91.5L358.1 97.1 360.6 92.6 363.1 86.9zM376.6 68.8L374 75.3 376.9 73.2 379.5 66.5zM360.6 92.6L358.1 98.8 360.6 94.8 363.2 88.4zM371.2 77.9L368.6 84.8 371.4 82.3 374 75.3zM360.6 94.8L358.2 101.4 360.8 97.9 363.2 91.1zM363.2 91.1L360.8 97.9 363.4 94.8 365.9 87.7zM483.8 299.4L481.4 302 484.8 304.3 487.1 301.9zM339.1 151.2L336.8 158.5 339.2 156.2 341.5 148.6zM473.2 304.7L470.8 307.3 474.1 309.4 476.6 307zM465 307.5L462.5 310.1 465.8 312.2 468.3 309.8zM324 237.9L321.6 243.5 324.1 244.5 326.6 238.9zM394.7 311.9L391.9 314.6 395 316.7 397.8 314.1zM316.6 259.2L313.9 263.3 316.6 264.8 319.2 260.6zM385.7 310.2L382.8 312.9 385.9 315 388.7 312.4zM376.7 308.5L373.9 311.2 376.9 313.3 379.8 310.7z"/><path fill="#d8d800" d="M493.4 136.5L491.6 133.3 494.3 139.9 496.1 142.8zM481.6 110.4L479.7 106.8 482.4 113.5 484.3 116.8zM482.4 113.5L480.5 110.4 483.3 117.5 485.2 120.4zM493.3 141.8L491.4 139.6 494.1 147.1 496 149zM483.3 117.5L481.3 114.9 484.1 122.4 486 124.8zM481.3 114.9L479.2 112.6 482 120.3 484.1 122.4zM476.4 105L474.3 102.8 477.1 110.6 479.2 112.6zM492.9 151.8L490.9 150.8 493.5 158.8 495.5 159.5zM471.4 95.3L469.2 93.3 472.1 101 474.3 102.8zM466.3 85.9L464 84.2 467 91.8 469.2 93.3zM499.4 181.8L497.4 182.1 500 189.6 502.1 189.2zM461 77L458.7 75.7 461.7 83.1 464 84.2zM518.9 233.8L516.9 235.1 519.7 240.1 521.7 238.6zM455.6 68.8L453.2 68 456.3 75 458.7 75.7zM525.5 248.8L523.5 250.6 526.4 254.4 528.5 252.6zM528.5 252.6L526.4 254.4 529.5 257.9 531.5 256.1zM450.1 61.4L447.6 61.1 450.7 67.8 453.2 68zM434.9 40.2L432.2 40.4 435.5 44.7 438.1 44.5zM438.1 44.5L435.5 44.7 438.7 49.7 441.3 49.4zM422.6 31.7L419.9 32.6 423.1 34.8 425.8 33.9zM393.5 46.5L390.8 51.7 393.9 51.1 396.6 45.9zM385.1 58.6L382.4 64.8 385.4 63.7 388.1 57.4zM379.5 66.5L376.9 73.2 379.8 71.6 382.4 64.8zM358.1 97.1L355.7 103 358.1 98.8 360.6 92.6zM374 75.3L371.4 82.3 374.3 80.3 376.9 73.2zM358.1 98.8L355.7 105.2 358.2 101.4 360.6 94.8zM365.9 87.7L363.4 94.8 366.1 92 368.6 84.8zM358.2 101.4L355.7 108.4 358.3 105.1 360.8 97.9zM486.2 296.8L483.8 299.4 487.1 301.9 489.5 299.4zM339 146.9L336.8 153.9 339.1 151.2 341.4 143.9zM475.7 302.1L473.2 304.7 476.6 307 479 304.5zM341.8 160.1L339.5 168 342 166.8 344.3 158.6zM340 182L337.7 189.9 340.3 189.7 342.6 181.7zM456.6 310.4L454.1 312.9 457.4 314.9 459.9 312.5zM448.2 313.2L445.6 315.7 448.9 317.7 451.5 315.3zM439.7 316.1L437.1 318.5 440.4 320.3 443 318.1zM326.4 232L324 237.9 326.6 238.9 329 232.8zM431.1 318.8L428.5 321.1 431.8 322.8 434.4 320.7zM421.9 317.2L419.2 319.6 422.5 321.4 425.2 319.2zM412.8 315.5L410.1 318 413.3 319.9 416 317.6zM403.7 313.7L400.9 316.3 404.1 318.3 406.9 315.9zM319.1 254.7L316.6 259.2 319.2 260.6 321.8 256zM382.6 307.9L379.8 310.7 382.8 312.9 385.7 310.2zM370.6 304L367.8 306.9 370.8 309.1 373.7 306.3zM373.7 306.3L370.8 309.1 373.9 311.2 376.7 308.5z"/><path fill="#dbdb00" d="M492.4 133.7L490.7 130.2 493.4 136.5 495.1 139.7zM484.3 116.8L482.4 113.5 485.2 120.4 487.1 123.5zM492.5 137.2L490.6 134.6 493.3 141.8 495.2 144.1zM485.2 120.4L483.3 117.5 486 124.8 487.9 127.4zM487.9 127.4L486 124.8 488.7 132.2 490.6 134.6zM486 124.8L484.1 122.4 486.8 130 488.7 132.2zM488.7 132.2L486.8 130 489.5 137.7 491.4 139.6zM484.1 122.4L482 120.3 484.8 128.1 486.8 130zM486.8 130L484.8 128.1 487.5 136 489.5 137.7zM492.2 145.4L490.2 143.9 492.9 151.8 494.8 153zM479.2 112.6L477.1 110.6 480 118.5 482 120.3zM474.3 102.8L472.1 101 475 109 477.1 110.6zM493.5 158.8L491.5 158.3 494.1 166.3 496.2 166.6zM469.2 93.3L467 91.8 469.9 99.7 472.1 101zM496.8 174.2L494.7 174.3 497.4 182.1 499.4 181.8zM464 84.2L461.7 83.1 464.7 90.8 467 91.8zM516.2 228.5L514.1 229.8 516.9 235.1 518.9 233.8zM458.7 75.7L456.3 75 459.3 82.5 461.7 83.1zM522.6 244.7L520.6 246.3 523.5 250.6 525.5 248.8zM453.2 68L450.7 67.8 453.8 74.9 456.3 75zM523.5 250.6L521.4 252.4 524.4 256.3 526.4 254.4zM526.4 254.4L524.4 256.3 527.4 259.8 529.5 257.9zM441.3 49.4L438.7 49.7 441.9 55.3 444.4 55zM444.4 55L441.9 55.3 445 61.5 447.6 61.1zM524.4 256.3L522.3 258.2 525.4 261.7 527.4 259.8zM425.8 33.9L423.1 34.8 426.3 37.7 429 36.8zM522.3 258.2L520.2 260.2 523.3 263.7 525.4 261.7zM416.6 31.2L413.9 32.8 417.1 34.2 419.9 32.6zM410.7 32.1L408 34.5 411.2 35.2 413.9 32.8zM402.1 37.6L399.3 41.4 402.5 41.4 405.2 37.6zM390.8 51.7L388.1 57.4 391.2 56.9 393.9 51.1zM382.4 64.8L379.8 71.6 382.8 70.6 385.4 63.7zM376.9 73.2L374.3 80.3 377.2 78.8 379.8 71.6zM355.7 103L353.2 109.3 355.7 105.2 358.1 98.8zM368.6 84.8L366.1 92 368.9 89.7 371.4 82.3zM339.7 136.1L337.3 141.2 339.5 136.9 341.8 131.5zM355.7 105.2L353.2 112 355.7 108.4 358.2 101.4zM360.8 97.9L358.3 105.1 360.9 102.2 363.4 94.8zM363.4 94.8L360.9 102.2 363.6 99.6 366.1 92zM491 291.6L488.6 294.2 491.9 296.9 494.2 294.4zM488.6 294.2L486.2 296.8 489.5 299.4 491.9 296.9zM339.1 143.3L336.8 150 339 146.9 341.4 140zM478.1 299.4L475.7 302.1 479 304.5 481.4 302zM341.6 154L339.3 161.8 341.8 160.1 344.1 152.1zM342 166.8L339.8 174.8 342.3 174 344.6 165.8zM467.5 304.8L465 307.5 468.3 309.8 470.8 307.3zM459.1 307.7L456.6 310.4 459.9 312.5 462.5 310.1zM331.1 219.2L328.8 225.8 331.4 226.5 333.7 219.7zM328.8 225.8L326.4 232 329 232.8 331.4 226.5zM433.8 316.5L431.1 318.8 434.4 320.7 437.1 318.5zM427.9 316.8L425.2 319.2 428.5 321.1 431.1 318.8zM321.7 249.8L319.1 254.7 321.8 256 324.3 251zM400.5 311.4L397.8 314.1 400.9 316.3 403.7 313.7zM391.5 309.6L388.7 312.4 391.9 314.6 394.7 311.9zM379.5 305.5L376.7 308.5 379.8 310.7 382.6 307.9zM316.6 264.8L313.9 268.6 316.5 270.2 319.2 266.3zM367.6 301.6L364.8 304.7 367.8 306.9 370.6 304z"/><path fill="#dede00" d="M483.4 114.2L481.6 110.4 484.3 116.8 486.2 120.4zM486.2 120.4L484.3 116.8 487.1 123.5 488.9 126.8zM487.1 123.5L485.2 120.4 487.9 127.4 489.8 130.3zM489.8 130.3L487.9 127.4 490.6 134.6 492.5 137.2zM490.6 134.6L488.7 132.2 491.4 139.6 493.3 141.8zM491.4 139.6L489.5 137.7 492.2 145.4 494.1 147.1zM489.5 137.7L487.5 136 490.2 143.9 492.2 145.4zM482 120.3L480 118.5 482.7 126.5 484.8 128.1zM484.8 128.1L482.7 126.5 485.5 134.6 487.5 136zM477.1 110.6L475 109 477.8 117.1 480 118.5zM472.1 101L469.9 99.7 472.8 107.8 475 109zM467 91.8L464.7 90.8 467.6 98.8 469.9 99.7zM513.4 222.9L511.4 224.1 514.1 229.8 516.2 228.5zM461.7 83.1L459.3 82.5 462.3 90.3 464.7 90.8zM519.7 240.1L517.7 241.7 520.6 246.3 522.6 244.7zM456.3 75L453.8 74.9 456.9 82.5 459.3 82.5zM520.6 246.3L518.5 248.1 521.4 252.4 523.5 250.6zM447.6 61.1L445 61.5 448.2 68.2 450.7 67.8zM521.4 252.4L519.3 254.2 522.3 258.2 524.4 256.3zM429 36.8L426.3 37.7 429.6 41.4 432.2 40.4zM432.2 40.4L429.6 41.4 432.8 45.7 435.5 44.7zM519.3 254.2L517.2 256.2 520.2 260.2 522.3 258.2zM517.2 256.2L515.1 258.2 518.1 262.2 520.2 260.2zM520.2 260.2L518.1 262.2 521.1 265.8 523.3 263.7zM518.1 262.2L515.9 264.4 519 267.9 521.1 265.8zM408 34.5L405.2 37.6 408.4 38.3 411.2 35.2zM515.9 264.4L513.8 266.6 516.9 270.1 519 267.9zM513.8 266.6L511.6 268.8 514.7 272.4 516.9 270.1zM399.3 41.4L396.6 45.9 399.8 46 402.5 41.4zM511.6 268.8L509.4 271.2 512.5 274.7 514.7 272.4zM396.6 45.9L393.9 51.1 397 51.2 399.8 46zM509.4 271.2L507.1 273.6 510.3 277 512.5 274.7zM507.1 273.6L504.9 276 508 279.4 510.3 277zM388.1 57.4L385.4 63.7 388.5 63.3 391.2 56.9zM504.9 276L502.6 278.5 505.8 281.9 508 279.4zM502.6 278.5L500.3 281.1 503.5 284.3 505.8 281.9zM355.7 101.8L353.3 107.5 355.7 103 358.1 97.1zM500.3 281.1L498 283.7 501.2 286.8 503.5 284.3zM371.4 82.3L368.9 89.7 371.7 87.8 374.3 80.3zM498 283.7L495.7 286.3 498.9 289.3 501.2 286.8zM353.2 109.3L350.8 115.8 353.2 112 355.7 105.2zM366.1 92L363.6 99.6 366.4 97.4 368.9 89.7zM495.7 286.3L493.3 288.9 496.6 291.9 498.9 289.3zM339.5 136.9L337.1 142.4 339.3 138.3 341.6 132.6zM353.2 112L350.8 119 353.3 115.7 355.7 108.4zM355.7 108.4L353.3 115.7 355.9 112.6 358.3 105.1zM358.3 105.1L355.9 112.6 358.5 109.8 360.9 102.2zM493.3 288.9L491 291.6 494.2 294.4 496.6 291.9zM339.1 140.5L336.8 146.8 339.1 143.3 341.4 136.7zM483 294L480.5 296.7 483.8 299.4 486.2 296.8zM480.5 296.7L478.1 299.4 481.4 302 483.8 299.4zM341.5 148.6L339.2 156.2 341.6 154 343.9 146.2zM469.9 302.1L467.5 304.8 470.8 307.3 473.2 304.7zM342.3 174L340 182 342.6 181.7 344.9 173.4zM461.7 305L459.1 307.7 462.5 310.1 465 307.5zM338 197.5L335.8 205 338.4 205.3 340.7 197.6zM450.8 310.6L448.2 313.2 451.5 315.3 454.1 312.9zM335.8 205L333.4 212.2 336.1 212.7 338.4 205.3zM333.4 212.2L331.1 219.2 333.7 219.7 336.1 212.7zM442.3 313.6L439.7 316.1 443 318.1 445.6 315.7zM418.7 315.1L416 317.6 419.2 319.6 421.9 317.2zM324.1 244.5L321.7 249.8 324.3 251 326.8 245.7zM409.6 313.2L406.9 315.9 410.1 318 412.8 315.5zM388.4 307.2L385.7 310.2 388.7 312.4 391.5 309.6zM319.2 260.6L316.6 264.8 319.2 266.3 321.8 262.1zM376.5 303.1L373.7 306.3 376.7 308.5 379.5 305.5zM319.2 266.3L316.5 270.2 319.2 271.9 321.9 267.9zM321.9 267.9L319.2 271.9 321.9 273.6 324.6 269.6zM324.6 269.6L321.9 273.6 324.6 275.3 327.3 271.3zM327.3 271.3L324.6 275.3 327.3 277.2 330 273.2zM330 273.2L327.3 277.2 330.1 279 332.8 275.1zM332.8 275.1L330.1 279 332.9 281 335.6 277zM335.6 277L332.9 281 335.7 283 338.4 279zM338.4 279L335.7 283 338.5 285 341.2 281.1zM341.2 281.1L338.5 285 341.4 287.1 344.1 283.3zM344.1 283.3L341.4 287.1 344.2 289.2 347 285.4zM347 285.4L344.2 289.2 347.1 291.4 349.9 287.7zM349.9 287.7L347.1 291.4 350 293.6 352.8 290zM352.8 290L350 293.6 353 295.8 355.7 292.3zM355.7 292.3L353 295.8 355.9 298.1 358.7 294.6zM358.7 294.6L355.9 298.1 358.8 300.3 361.6 297zM361.6 297L358.8 300.3 361.8 302.5 364.6 299.3zM364.6 299.3L361.8 302.5 364.8 304.7 367.6 301.6z"/><path fill="#e1e100" d="M485.2 118.1L483.4 114.2 486.2 120.4 488 124zM488.9 126.8L487.1 123.5 489.8 130.3 491.6 133.3zM491.6 133.3L489.8 130.3 492.5 137.2 494.3 139.9zM487.5 136L485.5 134.6 488.2 142.7 490.2 143.9zM490.2 143.9L488.2 142.7 490.9 150.8 492.9 151.8zM480 118.5L477.8 117.1 480.6 125.3 482.7 126.5zM490.9 150.8L488.8 150.1 491.5 158.3 493.5 158.8zM475 109L472.8 107.8 475.6 116.1 477.8 117.1zM494.1 166.3L492 166.3 494.7 174.3 496.8 174.2zM469.9 99.7L467.6 98.8 470.5 107.1 472.8 107.8zM510.7 216.9L508.7 218 511.4 224.1 513.4 222.9zM464.7 90.8L462.3 90.3 465.3 98.5 467.6 98.8zM516.9 235.1L514.9 236.6 517.7 241.7 519.7 240.1zM459.3 82.5L456.9 82.5 459.9 90.4 462.3 90.3zM517.7 241.7L515.6 243.4 518.5 248.1 520.6 246.3zM450.7 67.8L448.2 68.2 451.3 75.4 453.8 74.9zM518.5 248.1L516.4 249.9 519.3 254.2 521.4 252.4zM435.5 44.7L432.8 45.7 436 50.7 438.7 49.7zM438.7 49.7L436 50.7 439.2 56.4 441.9 55.3zM441.9 55.3L439.2 56.4 442.4 62.6 445 61.5zM516.4 249.9L514.3 251.8 517.2 256.2 519.3 254.2zM419.9 32.6L417.1 34.2 420.4 36.4 423.1 34.8zM514.3 251.8L512.1 253.9 515.1 258.2 517.2 256.2zM413.9 32.8L411.2 35.2 414.4 36.6 417.1 34.2zM512.1 253.9L509.9 256 512.9 260.4 515.1 258.2zM515.1 258.2L512.9 260.4 515.9 264.4 518.1 262.2zM509.9 256L507.7 258.3 510.7 262.6 512.9 260.4zM512.9 260.4L510.7 262.6 513.8 266.6 515.9 264.4zM405.2 37.6L402.5 41.4 405.7 42.2 408.4 38.3zM507.7 258.3L505.5 260.6 508.5 264.9 510.7 262.6zM510.7 262.6L508.5 264.9 511.6 268.8 513.8 266.6zM505.5 260.6L503.3 263 506.3 267.3 508.5 264.9zM508.5 264.9L506.3 267.3 509.4 271.2 511.6 268.8zM503.3 263L501 265.6 504 269.8 506.3 267.3zM506.3 267.3L504 269.8 507.1 273.6 509.4 271.2zM393.9 51.1L391.2 56.9 394.3 57 397 51.2zM501 265.6L498.7 268.2 501.8 272.3 504 269.8zM504 269.8L501.8 272.3 504.9 276 507.1 273.6zM498.7 268.2L496.4 270.8 499.5 274.9 501.8 272.3zM501.8 272.3L499.5 274.9 502.6 278.5 504.9 276zM385.4 63.7L382.8 70.6 385.8 70.2 388.5 63.3zM496.4 270.8L494.1 273.6 497.2 277.5 499.5 274.9zM499.5 274.9L497.2 277.5 500.3 281.1 502.6 278.5zM379.8 71.6L377.2 78.8 380.1 77.9 382.8 70.6zM494.1 273.6L491.7 276.4 494.8 280.2 497.2 277.5zM497.2 277.5L494.8 280.2 498 283.7 500.3 281.1zM353.3 107.5L350.8 113.5 353.2 109.3 355.7 103zM374.3 80.3L371.7 87.8 374.6 86.5 377.2 78.8zM491.7 276.4L489.4 279.2 492.5 282.9 494.8 280.2zM494.8 280.2L492.5 282.9 495.7 286.3 498 283.7zM368.9 89.7L366.4 97.4 369.2 95.7 371.7 87.8zM489.4 279.2L487 282.1 490.1 285.7 492.5 282.9zM492.5 282.9L490.1 285.7 493.3 288.9 495.7 286.3zM350.8 115.8L348.4 122.6 350.8 119 353.2 112zM360.9 102.2L358.5 109.8 361.1 107.4 363.6 99.6zM487 282.1L484.6 285 487.8 288.4 490.1 285.7zM490.1 285.7L487.8 288.4 491 291.6 493.3 288.9zM339.3 138.3L336.9 144.3 339.1 140.5 341.5 134.3zM350.8 119L348.5 126.2 350.9 123.1 353.3 115.7zM353.3 115.7L350.9 123.1 353.5 120.3 355.9 112.6zM355.9 112.6L353.5 120.3 356 117.7 358.5 109.8zM484.6 285L482.2 287.9 485.4 291.2 487.8 288.4zM487.8 288.4L485.4 291.2 488.6 294.2 491 291.6zM350.9 123.1L348.6 130.7 351.1 128.1 353.5 120.3zM482.2 287.9L479.7 290.8 483 294 485.4 291.2zM485.4 291.2L483 294 486.2 296.8 488.6 294.2zM479.7 290.8L477.3 293.7 480.5 296.7 483 294zM477.3 293.7L474.9 296.5 478.1 299.4 480.5 296.7zM474.9 296.5L472.4 299.4 475.7 302.1 478.1 299.4zM472.4 299.4L469.9 302.1 473.2 304.7 475.7 302.1zM340.3 189.7L338 197.5 340.7 197.6 343 189.7zM453.3 307.9L450.8 310.6 454.1 312.9 456.6 310.4zM436.4 313.9L433.8 316.5 437.1 318.5 439.7 316.1zM424.6 314.7L421.9 317.2 425.2 319.2 427.9 316.8zM326.6 238.9L324.1 244.5 326.8 245.7 329.2 239.9zM406.4 310.9L403.7 313.7 406.9 315.9 409.6 313.2zM397.4 309L394.7 311.9 397.8 314.1 400.5 311.4zM321.8 256L319.2 260.6 321.8 262.1 324.4 257.4zM324.4 257.4L321.8 262.1 324.5 263.6 327.1 258.9zM327.1 258.9L324.5 263.6 327.2 265.3 329.8 260.5zM329.8 260.5L327.2 265.3 329.9 267 332.5 262.2zM332.5 262.2L329.9 267 332.7 268.8 335.3 264zM335.3 264L332.7 268.8 335.5 270.7 338.1 265.9zM338.1 265.9L335.5 270.7 338.3 272.6 340.9 267.9zM340.9 267.9L338.3 272.6 341.1 274.7 343.7 270zM343.7 270L341.1 274.7 343.9 276.8 346.6 272.2zM346.6 272.2L343.9 276.8 346.8 279 349.4 274.4zM349.4 274.4L346.8 279 349.7 281.3 352.3 276.8zM352.3 276.8L349.7 281.3 352.6 283.6 355.3 279.2zM355.3 279.2L352.6 283.6 355.5 286 358.2 281.6zM358.2 281.6L355.5 286 358.5 288.4 361.2 284.1zM361.2 284.1L358.5 288.4 361.4 290.8 364.1 286.7zM364.1 286.7L361.4 290.8 364.4 293.3 367.1 289.3zM367.1 289.3L364.4 293.3 367.4 295.8 370.1 291.9zM370.1 291.9L367.4 295.8 370.4 298.2 373.1 294.5zM373.1 294.5L370.4 298.2 373.4 300.7 376.2 297.1zM376.2 297.1L373.4 300.7 376.5 303.1 379.2 299.7zM379.2 299.7L376.5 303.1 379.5 305.5 382.3 302.2zM382.3 302.2L379.5 305.5 382.6 307.9 385.3 304.7zM385.3 304.7L382.6 307.9 385.7 310.2 388.4 307.2zM321.8 262.1L319.2 266.3 321.9 267.9 324.5 263.6zM324.5 263.6L321.9 267.9 324.6 269.6 327.2 265.3zM327.2 265.3L324.6 269.6 327.3 271.3 329.9 267zM329.9 267L327.3 271.3 330 273.2 332.7 268.8zM332.7 268.8L330 273.2 332.8 275.1 335.5 270.7zM335.5 270.7L332.8 275.1 335.6 277 338.3 272.6zM338.3 272.6L335.6 277 338.4 279 341.1 274.7zM341.1 274.7L338.4 279 341.2 281.1 343.9 276.8zM343.9 276.8L341.2 281.1 344.1 283.3 346.8 279zM346.8 279L344.1 283.3 347 285.4 349.7 281.3zM349.7 281.3L347 285.4 349.9 287.7 352.6 283.6zM352.6 283.6L349.9 287.7 352.8 290 355.5 286zM355.5 286L352.8 290 355.7 292.3 358.5 288.4zM358.5 288.4L355.7 292.3 358.7 294.6 361.4 290.8zM361.4 290.8L358.7 294.6 361.6 297 364.4 293.3zM364.4 293.3L361.6 297 364.6 299.3 367.4 295.8zM367.4 295.8L364.6 299.3 367.6 301.6 370.4 298.2zM370.4 298.2L367.6 301.6 370.6 304 373.4 300.7zM373.4 300.7L370.6 304 373.7 306.3 376.5 303.1z"/><path fill="#e4e400" d="M488 124L486.2 120.4 488.9 126.8 490.7 130.2zM490.7 130.2L488.9 126.8 491.6 133.3 493.4 136.5zM482.7 126.5L480.6 125.3 483.4 133.6 485.5 134.6zM485.5 134.6L483.4 133.6 486.1 141.9 488.2 142.7zM488.2 142.7L486.1 141.9 488.8 150.1 490.9 150.8zM477.8 117.1L475.6 116.1 478.4 124.5 480.6 125.3zM491.5 158.3L489.4 158.1 492 166.3 494.1 166.3zM500 189.6L497.9 190.3 500.6 197.7 502.7 196.9zM502.7 196.9L500.6 197.7 503.3 204.8 505.3 203.9zM505.3 203.9L503.3 204.8 506 211.6 508 210.6zM508 210.6L506 211.6 508.7 218 510.7 216.9zM514.1 229.8L512.1 231.2 514.9 236.6 516.9 235.1zM514.9 236.6L512.8 238.3 515.6 243.4 517.7 241.7zM453.8 74.9L451.3 75.4 454.4 83.1 456.9 82.5zM515.6 243.4L513.5 245.2 516.4 249.9 518.5 248.1zM445 61.5L442.4 62.6 445.6 69.3 448.2 68.2zM448.2 68.2L445.6 69.3 448.7 76.6 451.3 75.4zM513.5 245.2L511.4 247.1 514.3 251.8 516.4 249.9zM423.1 34.8L420.4 36.4 423.6 39.4 426.3 37.7zM426.3 37.7L423.6 39.4 426.9 43 429.6 41.4zM429.6 41.4L426.9 43 430.1 47.4 432.8 45.7zM432.8 45.7L430.1 47.4 433.4 52.4 436 50.7zM436 50.7L433.4 52.4 436.6 58.1 439.2 56.4zM511.4 247.1L509.2 249.1 512.1 253.9 514.3 251.8zM417.1 34.2L414.4 36.6 417.6 38.8 420.4 36.4zM420.4 36.4L417.6 38.8 420.9 41.8 423.6 39.4zM423.6 39.4L420.9 41.8 424.2 45.5 426.9 43zM426.9 43L424.2 45.5 427.4 49.8 430.1 47.4zM430.1 47.4L427.4 49.8 430.7 54.8 433.4 52.4zM433.4 52.4L430.7 54.8 433.9 60.5 436.6 58.1zM411.2 35.2L408.4 38.3 411.7 39.8 414.4 36.6zM414.4 36.6L411.7 39.8 414.9 42 417.6 38.8zM417.6 38.8L414.9 42 418.2 44.9 420.9 41.8zM420.9 41.8L418.2 44.9 421.4 48.6 424.2 45.5zM424.2 45.5L421.4 48.6 424.7 52.9 427.4 49.8zM427.4 49.8L424.7 52.9 427.9 58 430.7 54.8zM408.4 38.3L405.7 42.2 408.9 43.7 411.7 39.8zM411.7 39.8L408.9 43.7 412.1 45.9 414.9 42zM414.9 42L412.1 45.9 415.4 48.8 418.2 44.9zM418.2 44.9L415.4 48.8 418.7 52.5 421.4 48.6zM421.4 48.6L418.7 52.5 421.9 56.8 424.7 52.9zM424.7 52.9L421.9 56.8 425.2 61.8 427.9 58zM402.5 41.4L399.8 46 402.9 46.7 405.7 42.2zM405.7 42.2L402.9 46.7 406.1 48.2 408.9 43.7zM408.9 43.7L406.1 48.2 409.4 50.4 412.1 45.9zM412.1 45.9L409.4 50.4 412.6 53.4 415.4 48.8zM415.4 48.8L412.6 53.4 415.9 57 418.7 52.5zM418.7 52.5L415.9 57 419.2 61.3 421.9 56.8zM399.8 46L397 51.2 400.2 52 402.9 46.7zM402.9 46.7L400.2 52 403.4 53.5 406.1 48.2zM406.1 48.2L403.4 53.5 406.6 55.7 409.4 50.4zM409.4 50.4L406.6 55.7 409.9 58.6 412.6 53.4zM412.6 53.4L409.9 58.6 413.1 62.2 415.9 57zM397 51.2L394.3 57 397.4 57.8 400.2 52zM400.2 52L397.4 57.8 400.6 59.4 403.4 53.5zM403.4 53.5L400.6 59.4 403.9 61.6 406.6 55.7zM391.2 56.9L388.5 63.3 391.6 63.5 394.3 57zM353.4 106.6L350.9 112.1 353.3 107.5 355.7 101.8zM382.8 70.6L380.1 77.9 383.2 77.6 385.8 70.2zM350.9 112.1L348.5 117.9 350.8 113.5 353.3 107.5zM377.2 78.8L374.6 86.5 377.5 85.7 380.1 77.9zM350.8 113.5L348.4 119.8 350.8 115.8 353.2 109.3zM371.7 87.8L369.2 95.7 372 94.5 374.6 86.5zM348.4 119.8L346 126.4 348.4 122.6 350.8 115.8zM363.6 99.6L361.1 107.4 363.9 105.4 366.4 97.4zM366.4 97.4L363.9 105.4 366.7 103.9 369.2 95.7zM348.4 122.6L346 129.6 348.5 126.2 350.8 119zM358.5 109.8L356 117.7 358.7 115.5 361.1 107.4zM346 129.6L343.7 136.7 346.1 133.6 348.5 126.2zM348.5 126.2L346.1 133.6 348.6 130.7 350.9 123.1zM353.5 120.3L351.1 128.1 353.7 125.8 356 117.7zM346.1 133.6L343.8 141.1 346.2 138.5 348.6 130.7zM348.6 130.7L346.2 138.5 348.7 136.1 351.1 128.1zM351.1 128.1L348.7 136.1 351.3 134 353.7 125.8zM341.4 143.9L339.1 151.2 341.5 148.6 343.8 141.1zM346.2 138.5L343.9 146.2 346.4 144.1 348.7 136.1zM344.1 152.1L341.8 160.1 344.3 158.6 346.6 150.4zM344.3 158.6L342 166.8 344.6 165.8 346.9 157.4zM344.6 165.8L342.3 174 344.9 173.4 347.2 165zM464.2 302.2L461.7 305 465 307.5 467.5 304.8zM342.6 181.7L340.3 189.7 343 189.7 345.3 181.5zM455.9 305.1L453.3 307.9 456.6 310.4 459.1 307.7zM444.9 310.9L442.3 313.6 445.6 315.7 448.2 313.2zM415.5 312.8L412.8 315.5 416 317.6 418.7 315.1zM324.3 251L321.8 256 324.4 257.4 326.9 252.4zM394.3 306.5L391.5 309.6 394.7 311.9 397.4 309z"/><path fill="#e7e700" d="M480.6 125.3L478.4 124.5 481.2 132.9 483.4 133.6zM483.4 133.6L481.2 132.9 484 141.4 486.1 141.9zM486.1 141.9L484 141.4 486.7 149.8 488.8 150.1zM488.8 150.1L486.7 149.8 489.4 158.1 491.5 158.3zM472.8 107.8L470.5 107.1 473.4 115.5 475.6 116.1zM475.6 116.1L473.4 115.5 476.2 124 478.4 124.5zM494.7 174.3L492.6 174.7 495.3 182.6 497.4 182.1zM497.4 182.1L495.3 182.6 497.9 190.3 500 189.6zM467.6 98.8L465.3 98.5 468.2 106.8 470.5 107.1zM462.3 90.3L459.9 90.4 462.9 98.6 465.3 98.5zM456.9 82.5L454.4 83.1 457.4 91 459.9 90.4zM512.8 238.3L510.7 240 513.5 245.2 515.6 243.4zM451.3 75.4L448.7 76.6 451.8 84.2 454.4 83.1zM510.7 240L508.5 241.9 511.4 247.1 513.5 245.2zM439.2 56.4L436.6 58.1 439.8 64.3 442.4 62.6zM442.4 62.6L439.8 64.3 443 71.1 445.6 69.3zM436.6 58.1L433.9 60.5 437.1 66.7 439.8 64.3zM509.2 249.1L507 251.3 509.9 256 512.1 253.9zM430.7 54.8L427.9 58 431.2 63.6 433.9 60.5zM433.9 60.5L431.2 63.6 434.4 69.8 437.1 66.7zM507 251.3L504.8 253.5 507.7 258.3 509.9 256zM427.9 58L425.2 61.8 428.5 67.4 431.2 63.6zM431.2 63.6L428.5 67.4 431.7 73.6 434.4 69.8zM504.8 253.5L502.6 255.9 505.5 260.6 507.7 258.3zM421.9 56.8L419.2 61.3 422.4 66.3 425.2 61.8zM425.2 61.8L422.4 66.3 425.7 71.8 428.5 67.4zM502.6 255.9L500.3 258.4 503.3 263 505.5 260.6zM415.9 57L413.1 62.2 416.4 66.5 419.2 61.3zM419.2 61.3L416.4 66.5 419.7 71.4 422.4 66.3zM500.3 258.4L498 261 501 265.6 503.3 263zM406.6 55.7L403.9 61.6 407.1 64.5 409.9 58.6zM409.9 58.6L407.1 64.5 410.4 68 413.1 62.2zM413.1 62.2L410.4 68 413.6 72.3 416.4 66.5zM498 261L495.7 263.7 498.7 268.2 501 265.6zM394.3 57L391.6 63.5 394.7 64.3 397.4 57.8zM397.4 57.8L394.7 64.3 397.9 65.8 400.6 59.4zM400.6 59.4L397.9 65.8 401.1 68.1 403.9 61.6zM403.9 61.6L401.1 68.1 404.4 70.9 407.1 64.5zM407.1 64.5L404.4 70.9 407.6 74.5 410.4 68zM495.7 263.7L493.4 266.4 496.4 270.8 498.7 268.2zM388.5 63.3L385.8 70.2 388.9 70.4 391.6 63.5zM493.4 266.4L491 269.3 494.1 273.6 496.4 270.8zM385.8 70.2L383.2 77.6 386.2 77.9 388.9 70.4zM491 269.3L488.6 272.2 491.7 276.4 494.1 273.6zM380.1 77.9L377.5 85.7 380.5 85.4 383.2 77.6zM488.6 272.2L486.3 275.1 489.4 279.2 491.7 276.4zM348.5 117.9L346.1 124 348.4 119.8 350.8 113.5zM374.6 86.5L372 94.5 375 93.8 377.5 85.7zM486.3 275.1L483.9 278.1 487 282.1 489.4 279.2zM346.1 124L343.7 130.3 346 126.4 348.4 119.8zM369.2 95.7L366.7 103.9 369.5 102.8 372 94.5zM483.9 278.1L481.4 281.2 484.6 285 487 282.1zM346 126.4L343.7 133.1 346 129.6 348.4 122.6zM361.1 107.4L358.7 115.5 361.4 113.7 363.9 105.4zM481.4 281.2L479 284.2 482.2 287.9 484.6 285zM343.7 133.1L341.4 140 343.7 136.7 346 129.6zM356 117.7L353.7 125.8 356.3 123.8 358.7 115.5zM479 284.2L476.6 287.3 479.7 290.8 482.2 287.9zM341.4 140L339 146.9 341.4 143.9 343.7 136.7zM343.7 136.7L341.4 143.9 343.8 141.1 346.1 133.6zM353.7 125.8L351.3 134 353.9 132.1 356.3 123.8zM476.6 287.3L474.1 290.3 477.3 293.7 479.7 290.8zM343.8 141.1L341.5 148.6 343.9 146.2 346.2 138.5zM348.7 136.1L346.4 144.1 349 142.2 351.3 134zM474.1 290.3L471.6 293.4 474.9 296.5 477.3 293.7zM343.9 146.2L341.6 154 344.1 152.1 346.4 144.1zM346.4 144.1L344.1 152.1 346.6 150.4 349 142.2zM471.6 293.4L469.2 296.3 472.4 299.4 474.9 296.5zM469.2 296.3L466.7 299.3 469.9 302.1 472.4 299.4zM466.7 299.3L464.2 302.2 467.5 304.8 469.9 302.1zM447.5 308.2L444.9 310.9 448.2 313.2 450.8 310.6zM439 311.3L436.4 313.9 439.7 316.1 442.3 313.6zM430.5 314.3L427.9 316.8 431.1 318.8 433.8 316.5zM329 232.8L326.6 238.9 329.2 239.9 331.6 233.8zM421.4 312.4L418.7 315.1 421.9 317.2 424.6 314.7zM412.3 310.4L409.6 313.2 412.8 315.5 415.5 312.8zM326.8 245.7L324.3 251 326.9 252.4 329.4 246.9zM403.3 308.4L400.5 311.4 403.7 313.7 406.4 310.9zM326.9 252.4L324.4 257.4 327.1 258.9 329.6 253.8zM329.6 253.8L327.1 258.9 329.8 260.5 332.3 255.4zM332.3 255.4L329.8 260.5 332.5 262.2 335.1 257zM335.1 257L332.5 262.2 335.3 264 337.8 258.8zM337.8 258.8L335.3 264 338.1 265.9 340.6 260.7zM340.6 260.7L338.1 265.9 340.9 267.9 343.5 262.8zM343.5 262.8L340.9 267.9 343.7 270 346.3 264.9zM346.3 264.9L343.7 270 346.6 272.2 349.2 267.1zM349.2 267.1L346.6 272.2 349.4 274.4 352.1 269.4zM352.1 269.4L349.4 274.4 352.3 276.8 355 271.9zM355 271.9L352.3 276.8 355.3 279.2 357.9 274.4zM357.9 274.4L355.3 279.2 358.2 281.6 360.9 276.9zM360.9 276.9L358.2 281.6 361.2 284.1 363.8 279.6zM363.8 279.6L361.2 284.1 364.1 286.7 366.8 282.2zM366.8 282.2L364.1 286.7 367.1 289.3 369.8 285zM369.8 285L367.1 289.3 370.1 291.9 372.8 287.7zM372.8 287.7L370.1 291.9 373.1 294.5 375.9 290.5zM375.9 290.5L373.1 294.5 376.2 297.1 378.9 293.2zM378.9 293.2L376.2 297.1 379.2 299.7 382 296zM382 296L379.2 299.7 382.3 302.2 385 298.7zM385 298.7L382.3 302.2 385.3 304.7 388.1 301.3zM388.1 301.3L385.3 304.7 388.4 307.2 391.2 304zM391.2 304L388.4 307.2 391.5 309.6 394.3 306.5z"/><path fill="#eaea00" d="M489.7 127.8L488 124 490.7 130.2 492.4 133.7zM478.4 124.5L476.2 124 479 132.6 481.2 132.9zM481.2 132.9L479 132.6 481.8 141.2 484 141.4zM484 141.4L481.8 141.2 484.5 149.7 486.7 149.8zM486.7 149.8L484.5 149.7 487.2 158.2 489.4 158.1zM489.4 158.1L487.2 158.2 489.9 166.5 492 166.3zM492 166.3L489.9 166.5 492.6 174.7 494.7 174.3zM470.5 107.1L468.2 106.8 471.1 115.3 473.4 115.5zM473.4 115.5L471.1 115.3 473.9 124 476.2 124zM511.4 224.1L509.3 225.4 512.1 231.2 514.1 229.8zM465.3 98.5L462.9 98.6 465.8 107.1 468.2 106.8zM512.1 231.2L510 232.8 512.8 238.3 514.9 236.6zM459.9 90.4L457.4 91 460.4 99.3 462.9 98.6zM510 232.8L507.8 234.5 510.7 240 512.8 238.3zM454.4 83.1L451.8 84.2 454.9 92.2 457.4 91zM445.6 69.3L443 71.1 446.1 78.3 448.7 76.6zM508.5 241.9L506.3 243.9 509.2 249.1 511.4 247.1zM439.8 64.3L437.1 66.7 440.3 73.5 443 71.1zM443 71.1L440.3 73.5 443.5 80.7 446.1 78.3zM506.3 243.9L504.1 246.1 507 251.3 509.2 249.1zM437.1 66.7L434.4 69.8 437.6 76.6 440.3 73.5zM504.1 246.1L501.9 248.4 504.8 253.5 507 251.3zM434.4 69.8L431.7 73.6 434.9 80.3 437.6 76.6zM501.9 248.4L499.6 250.8 502.6 255.9 504.8 253.5zM428.5 67.4L425.7 71.8 429 77.9 431.7 73.6zM431.7 73.6L429 77.9 432.2 84.6 434.9 80.3zM499.6 250.8L497.4 253.4 500.3 258.4 502.6 255.9zM422.4 66.3L419.7 71.4 423 76.9 425.7 71.8zM425.7 71.8L423 76.9 426.2 82.9 429 77.9zM497.4 253.4L495 256 498 261 500.3 258.4zM416.4 66.5L413.6 72.3 416.9 77.1 419.7 71.4zM419.7 71.4L416.9 77.1 420.2 82.5 423 76.9zM495 256L492.7 258.8 495.7 263.7 498 261zM410.4 68L407.6 74.5 410.9 78.6 413.6 72.3zM413.6 72.3L410.9 78.6 414.2 83.4 416.9 77.1zM492.7 258.8L490.4 261.6 493.4 266.4 495.7 263.7zM391.6 63.5L388.9 70.4 392 71.3 394.7 64.3zM394.7 64.3L392 71.3 395.2 72.9 397.9 65.8zM397.9 65.8L395.2 72.9 398.4 75.1 401.1 68.1zM401.1 68.1L398.4 75.1 401.6 77.9 404.4 70.9zM404.4 70.9L401.6 77.9 404.9 81.4 407.6 74.5zM407.6 74.5L404.9 81.4 408.1 85.5 410.9 78.6zM490.4 261.6L488 264.6 491 269.3 493.4 266.4zM388.9 70.4L386.2 77.9 389.3 78.8 392 71.3zM392 71.3L389.3 78.8 392.5 80.4 395.2 72.9zM395.2 72.9L392.5 80.4 395.7 82.6 398.4 75.1zM488 264.6L485.6 267.6 488.6 272.2 491 269.3zM348.6 116.8L346.2 122.4 348.5 117.9 350.9 112.1zM383.2 77.6L380.5 85.4 383.6 85.8 386.2 77.9zM485.6 267.6L483.2 270.7 486.3 275.1 488.6 272.2zM346.2 122.4L343.8 128.3 346.1 124 348.5 117.9zM377.5 85.7L375 93.8 377.9 93.6 380.5 85.4zM483.2 270.7L480.8 273.9 483.9 278.1 486.3 275.1zM372 94.5L369.5 102.8 372.4 102.2 375 93.8zM480.8 273.9L478.3 277.1 481.4 281.2 483.9 278.1zM343.7 130.3L341.4 136.7 343.7 133.1 346 126.4zM363.9 105.4L361.4 113.7 364.2 112.3 366.7 103.9zM478.3 277.1L475.9 280.3 479 284.2 481.4 281.2zM341.4 136.7L339.1 143.3 341.4 140 343.7 133.1zM358.7 115.5L356.3 123.8 359 122.1 361.4 113.7zM475.9 280.3L473.4 283.5 476.6 287.3 479 284.2zM356.3 123.8L353.9 132.1 356.6 130.7 359 122.1zM473.4 283.5L470.9 286.7 474.1 290.3 476.6 287.3zM351.3 134L349 142.2 351.6 140.6 353.9 132.1zM470.9 286.7L468.5 289.9 471.6 293.4 474.1 290.3zM349 142.2L346.6 150.4 349.2 149 351.6 140.6zM468.5 289.9L466 293.1 469.2 296.3 471.6 293.4zM466 293.1L463.5 296.2 466.7 299.3 469.2 296.3zM346.9 157.4L344.6 165.8 347.2 165 349.5 156.5zM463.5 296.2L460.9 299.2 464.2 302.2 466.7 299.3zM460.9 299.2L458.4 302.2 461.7 305 464.2 302.2zM344.9 173.4L342.6 181.7 345.3 181.5 347.6 173.2zM458.4 302.2L455.9 305.1 459.1 307.7 461.7 305zM450.1 305.3L447.5 308.2 450.8 310.6 453.3 307.9zM333.7 219.7L331.4 226.5 334 227.3 336.4 220.5zM331.4 226.5L329 232.8 331.6 233.8 334 227.3zM329.4 246.9L326.9 252.4 329.6 253.8 332.1 248.3zM332.1 248.3L329.6 253.8 332.3 255.4 334.8 249.8zM334.8 249.8L332.3 255.4 335.1 257 337.6 251.5zM337.6 251.5L335.1 257 337.8 258.8 340.4 253.3zM340.4 253.3L337.8 258.8 340.6 260.7 343.2 255.2zM343.2 255.2L340.6 260.7 343.5 262.8 346 257.2zM346 257.2L343.5 262.8 346.3 264.9 348.9 259.4zM348.9 259.4L346.3 264.9 349.2 267.1 351.7 261.7zM351.7 261.7L349.2 267.1 352.1 269.4 354.6 264.1zM354.6 264.1L352.1 269.4 355 271.9 357.6 266.6zM357.6 266.6L355 271.9 357.9 274.4 360.5 269.2zM360.5 269.2L357.9 274.4 360.9 276.9 363.5 271.9zM363.5 271.9L360.9 276.9 363.8 279.6 366.5 274.6zM366.5 274.6L363.8 279.6 366.8 282.2 369.5 277.4zM369.5 277.4L366.8 282.2 369.8 285 372.5 280.3zM372.5 280.3L369.8 285 372.8 287.7 375.5 283.2zM375.5 283.2L372.8 287.7 375.9 290.5 378.5 286.1zM378.5 286.1L375.9 290.5 378.9 293.2 381.6 289zM381.6 289L378.9 293.2 382 296 384.7 291.9zM384.7 291.9L382 296 385 298.7 387.7 294.8zM387.7 294.8L385 298.7 388.1 301.3 390.8 297.7zM390.8 297.7L388.1 301.3 391.2 304 393.9 300.5zM393.9 300.5L391.2 304 394.3 306.5 397 303.2zM397 303.2L394.3 306.5 397.4 309 400.2 305.8zM400.2 305.8L397.4 309 400.5 311.4 403.3 308.4z"/><path fill="#eded00" d="M476.2 124L473.9 124 476.7 132.7 479 132.6zM479 132.6L476.7 132.7 479.5 141.4 481.8 141.2zM481.8 141.2L479.5 141.4 482.3 150.1 484.5 149.7zM484.5 149.7L482.3 150.1 485 158.6 487.2 158.2zM506 211.6L503.9 212.7 506.6 219.3 508.7 218zM508.7 218L506.6 219.3 509.3 225.4 511.4 224.1zM468.2 106.8L465.8 107.1 468.7 115.7 471.1 115.3zM471.1 115.3L468.7 115.7 471.6 124.4 473.9 124zM509.3 225.4L507.2 226.9 510 232.8 512.1 231.2zM462.9 98.6L460.4 99.3 463.4 107.8 465.8 107.1zM507.2 226.9L505.1 228.6 507.8 234.5 510 232.8zM457.4 91L454.9 92.2 457.9 100.6 460.4 99.3zM507.8 234.5L505.7 236.4 508.5 241.9 510.7 240zM448.7 76.6L446.1 78.3 449.3 86 451.8 84.2zM451.8 84.2L449.3 86 452.3 94 454.9 92.2zM505.7 236.4L503.5 238.4 506.3 243.9 508.5 241.9zM446.1 78.3L443.5 80.7 446.6 88.4 449.3 86zM503.5 238.4L501.3 240.6 504.1 246.1 506.3 243.9zM440.3 73.5L437.6 76.6 440.8 83.8 443.5 80.7zM437.6 76.6L434.9 80.3 438.1 87.4 440.8 83.8zM434.9 80.3L432.2 84.6 435.4 91.7 438.1 87.4zM429 77.9L426.2 82.9 429.5 89.5 432.2 84.6zM423 76.9L420.2 82.5 423.4 88.5 426.2 82.9zM426.2 82.9L423.4 88.5 426.7 94.9 429.5 89.5zM416.9 77.1L414.2 83.4 417.4 88.7 420.2 82.5zM420.2 82.5L417.4 88.7 420.7 94.6 423.4 88.5zM410.9 78.6L408.1 85.5 411.4 90.2 414.2 83.4zM414.2 83.4L411.4 90.2 414.7 95.4 417.4 88.7zM398.4 75.1L395.7 82.6 398.9 85.4 401.6 77.9zM401.6 77.9L398.9 85.4 402.1 88.8 404.9 81.4zM404.9 81.4L402.1 88.8 405.4 92.9 408.1 85.5zM386.2 77.9L383.6 85.8 386.7 86.8 389.3 78.8zM389.3 78.8L386.7 86.8 389.8 88.3 392.5 80.4zM392.5 80.4L389.8 88.3 393 90.5 395.7 82.6zM380.5 85.4L377.9 93.6 381 94.1 383.6 85.8zM343.8 128.3L341.5 134.3 343.7 130.3 346.1 124zM375 93.8L372.4 102.2 375.4 102.2 377.9 93.6zM341.5 134.3L339.1 140.5 341.4 136.7 343.7 130.3zM366.7 103.9L364.2 112.3 367 111.4 369.5 102.8zM361.4 113.7L359 122.1 361.7 120.9 364.2 112.3zM353.9 132.1L351.6 140.6 354.2 139.3 356.6 130.7zM351.6 140.6L349.2 149 351.9 147.9 354.2 139.3zM346.6 150.4L344.3 158.6 346.9 157.4 349.2 149zM347.2 165L344.9 173.4 347.6 173.2 349.9 164.6zM340.7 197.6L338.4 205.3 341 205.8 343.4 198zM338.4 205.3L336.1 212.7 338.7 213.3 341 205.8zM441.7 308.4L439 311.3 442.3 313.6 444.9 310.9zM336.1 212.7L333.7 219.7 336.4 220.5 338.7 213.3zM433.2 311.6L430.5 314.3 433.8 316.5 436.4 313.9zM427.3 312L424.6 314.7 427.9 316.8 430.5 314.3zM418.2 309.9L415.5 312.8 418.7 315.1 421.4 312.4zM329.2 239.9L326.8 245.7 329.4 246.9 331.9 241.1zM409.2 307.8L406.4 310.9 409.6 313.2 412.3 310.4z"/><path fill="#f0f000" d="M487.2 158.2L485 158.6 487.7 167.1 489.9 166.5zM489.9 166.5L487.7 167.1 490.4 175.3 492.6 174.7zM492.6 174.7L490.4 175.3 493.1 183.4 495.3 182.6zM495.3 182.6L493.1 183.4 495.8 191.1 497.9 190.3zM497.9 190.3L495.8 191.1 498.5 198.7 500.6 197.7zM500.6 197.7L498.5 198.7 501.2 205.9 503.3 204.8zM503.3 204.8L501.2 205.9 503.9 212.7 506 211.6zM473.9 124L471.6 124.4 474.4 133.2 476.7 132.7zM476.7 132.7L474.4 133.2 477.2 142 479.5 141.4zM479.5 141.4L477.2 142 480 150.8 482.3 150.1zM482.3 150.1L480 150.8 482.8 159.4 485 158.6zM506.6 219.3L504.5 220.7 507.2 226.9 509.3 225.4zM465.8 107.1L463.4 107.8 466.3 116.5 468.7 115.7zM504.5 220.7L502.3 222.3 505.1 228.6 507.2 226.9zM460.4 99.3L457.9 100.6 460.9 109.1 463.4 107.8zM505.1 228.6L502.9 230.4 505.7 236.4 507.8 234.5zM454.9 92.2L452.3 94 455.4 102.4 457.9 100.6zM502.9 230.4L500.7 232.4 503.5 238.4 505.7 236.4zM449.3 86L446.6 88.4 449.7 96.4 452.3 94zM443.5 80.7L440.8 83.8 444 91.4 446.6 88.4zM501.3 240.6L499 242.9 501.9 248.4 504.1 246.1zM440.8 83.8L438.1 87.4 441.3 95 444 91.4zM499 242.9L496.7 245.3 499.6 250.8 501.9 248.4zM438.1 87.4L435.4 91.7 438.6 99.2 441.3 95zM496.7 245.3L494.4 247.9 497.4 253.4 499.6 250.8zM432.2 84.6L429.5 89.5 432.7 96.5 435.4 91.7zM494.4 247.9L492.1 250.7 495 256 497.4 253.4zM429.5 89.5L426.7 94.9 429.9 101.8 432.7 96.5zM492.1 250.7L489.8 253.5 492.7 258.8 495 256zM423.4 88.5L420.7 94.6 423.9 100.9 426.7 94.9zM489.8 253.5L487.4 256.5 490.4 261.6 492.7 258.8zM417.4 88.7L414.7 95.4 417.9 101.2 420.7 94.6zM487.4 256.5L485 259.6 488 264.6 490.4 261.6zM408.1 85.5L405.4 92.9 408.6 97.4 411.4 90.2zM411.4 90.2L408.6 97.4 411.9 102.6 414.7 95.4zM485 259.6L482.6 262.7 485.6 267.6 488 264.6zM346.4 121.6L344 127 346.2 122.4 348.6 116.8zM395.7 82.6L393 90.5 396.2 93.3 398.9 85.4zM398.9 85.4L396.2 93.3 399.4 96.7 402.1 88.8zM402.1 88.8L399.4 96.7 402.7 100.6 405.4 92.9zM482.6 262.7L480.2 266 483.2 270.7 485.6 267.6zM341.8 131.5L339.5 136.9 341.6 132.6 344 127zM344 127L341.6 132.6 343.8 128.3 346.2 122.4zM383.6 85.8L381 94.1 384.1 95.1 386.7 86.8zM386.7 86.8L384.1 95.1 387.2 96.6 389.8 88.3zM389.8 88.3L387.2 96.6 390.3 98.8 393 90.5zM480.2 266L477.7 269.3 480.8 273.9 483.2 270.7zM341.6 132.6L339.3 138.3 341.5 134.3 343.8 128.3zM477.7 269.3L475.3 272.6 478.3 277.1 480.8 273.9zM369.5 102.8L367 111.4 369.9 110.9 372.4 102.2zM475.3 272.6L472.8 276 475.9 280.3 478.3 277.1zM364.2 112.3L361.7 120.9 364.6 120.1 367 111.4zM472.8 276L470.3 279.4 473.4 283.5 475.9 280.3zM359 122.1L356.6 130.7 359.3 129.6 361.7 120.9zM361.7 120.9L359.3 129.6 362.1 128.9 364.6 120.1zM470.3 279.4L467.8 282.8 470.9 286.7 473.4 283.5zM356.6 130.7L354.2 139.3 356.9 138.4 359.3 129.6zM467.8 282.8L465.3 286.2 468.5 289.9 470.9 286.7zM354.2 139.3L351.9 147.9 354.6 147.2 356.9 138.4zM465.3 286.2L462.8 289.5 466 293.1 468.5 289.9zM349.2 149L346.9 157.4 349.5 156.5 351.9 147.9zM351.9 147.9L349.5 156.5 352.2 155.9 354.6 147.2zM462.8 289.5L460.3 292.8 463.5 296.2 466 293.1zM349.5 156.5L347.2 165 349.9 164.6 352.2 155.9zM460.3 292.8L457.7 296 460.9 299.2 463.5 296.2zM457.7 296L455.2 299.2 458.4 302.2 460.9 299.2zM455.2 299.2L452.6 302.3 455.9 305.1 458.4 302.2zM345.3 181.5L343 189.7 345.7 190 348 181.7zM452.6 302.3L450.1 305.3 453.3 307.9 455.9 305.1zM343 189.7L340.7 197.6 343.4 198 345.7 190zM444.3 305.5L441.7 308.4 444.9 310.9 447.5 308.2zM435.8 308.7L433.2 311.6 436.4 313.9 439 311.3zM424.1 309.5L421.4 312.4 424.6 314.7 427.3 312zM331.6 233.8L329.2 239.9 331.9 241.1 334.3 234.9zM415 307.3L412.3 310.4 415.5 312.8 418.2 309.9zM331.9 241.1L329.4 246.9 332.1 248.3 334.6 242.4zM334.6 242.4L332.1 248.3 334.8 249.8 337.3 243.9zM337.3 243.9L334.8 249.8 337.6 251.5 340.1 245.5zM340.1 245.5L337.6 251.5 340.4 253.3 342.8 247.3zM342.8 247.3L340.4 253.3 343.2 255.2 345.7 249.2zM345.7 249.2L343.2 255.2 346 257.2 348.5 251.3zM348.5 251.3L346 257.2 348.9 259.4 351.4 253.5zM351.4 253.5L348.9 259.4 351.7 261.7 354.3 255.9zM354.3 255.9L351.7 261.7 354.6 264.1 357.2 258.3zM357.2 258.3L354.6 264.1 357.6 266.6 360.1 260.9zM360.1 260.9L357.6 266.6 360.5 269.2 363.1 263.6zM363.1 263.6L360.5 269.2 363.5 271.9 366.1 266.4zM366.1 266.4L363.5 271.9 366.5 274.6 369.1 269.3zM369.1 269.3L366.5 274.6 369.5 277.4 372.1 272.3zM372.1 272.3L369.5 277.4 372.5 280.3 375.1 275.3zM375.1 275.3L372.5 280.3 375.5 283.2 378.2 278.3zM378.2 278.3L375.5 283.2 378.5 286.1 381.2 281.4zM381.2 281.4L378.5 286.1 381.6 289 384.3 284.5zM384.3 284.5L381.6 289 384.7 291.9 387.3 287.6zM387.3 287.6L384.7 291.9 387.7 294.8 390.4 290.7zM390.4 290.7L387.7 294.8 390.8 297.7 393.5 293.7zM393.5 293.7L390.8 297.7 393.9 300.5 396.6 296.7zM396.6 296.7L393.9 300.5 397 303.2 399.7 299.6zM399.7 299.6L397 303.2 400.2 305.8 402.9 302.4zM402.9 302.4L400.2 305.8 403.3 308.4 406 305.2zM406 305.2L403.3 308.4 406.4 310.9 409.2 307.8z"/><path fill="#f3f300" d="M485 158.6L482.8 159.4 485.5 168 487.7 167.1zM487.7 167.1L485.5 168 488.2 176.3 490.4 175.3zM490.4 175.3L488.2 176.3 490.9 184.4 493.1 183.4zM493.1 183.4L490.9 184.4 493.6 192.3 495.8 191.1zM495.8 191.1L493.6 192.3 496.3 199.9 498.5 198.7zM498.5 198.7L496.3 199.9 499 207.2 501.2 205.9zM501.2 205.9L499 207.2 501.7 214.1 503.9 212.7zM503.9 212.7L501.7 214.1 504.5 220.7 506.6 219.3zM468.7 115.7L466.3 116.5 469.2 125.3 471.6 124.4zM471.6 124.4L469.2 125.3 472.1 134.2 474.4 133.2zM474.4 133.2L472.1 134.2 474.9 143.1 477.2 142zM477.2 142L474.9 143.1 477.7 151.9 480 150.8zM480 150.8L477.7 151.9 480.5 160.6 482.8 159.4zM482.8 159.4L480.5 160.6 483.2 169.2 485.5 168zM501.7 214.1L499.6 215.7 502.3 222.3 504.5 220.7zM463.4 107.8L460.9 109.1 463.9 117.8 466.3 116.5zM502.3 222.3L500.1 224.1 502.9 230.4 505.1 228.6zM457.9 100.6L455.4 102.4 458.4 110.9 460.9 109.1zM500.7 232.4L498.4 234.6 501.3 240.6 503.5 238.4zM446.6 88.4L444 91.4 447.1 99.4 449.7 96.4zM498.4 234.6L496.2 237 499 242.9 501.3 240.6zM444 91.4L441.3 95 444.4 102.9 447.1 99.4zM496.2 237L493.9 239.5 496.7 245.3 499 242.9zM441.3 95L438.6 99.2 441.8 107 444.4 102.9zM493.9 239.5L491.6 242.1 494.4 247.9 496.7 245.3zM435.4 91.7L432.7 96.5 435.9 103.9 438.6 99.2zM491.6 242.1L489.2 244.9 492.1 250.7 494.4 247.9zM432.7 96.5L429.9 101.8 433.1 109.1 435.9 103.9zM489.2 244.9L486.8 247.9 489.8 253.5 492.1 250.7zM426.7 94.9L423.9 100.9 427.2 107.7 429.9 101.8zM486.8 247.9L484.4 251 487.4 256.5 489.8 253.5zM420.7 94.6L417.9 101.2 421.2 107.4 423.9 100.9zM484.4 251L482 254.2 485 259.6 487.4 256.5zM414.7 95.4L411.9 102.6 415.2 108.2 417.9 101.2zM482 254.2L479.6 257.5 482.6 262.7 485 259.6zM405.4 92.9L402.7 100.6 405.9 105.1 408.6 97.4zM408.6 97.4L405.9 105.1 409.2 110.1 411.9 102.6zM479.6 257.5L477.1 260.9 480.2 266 482.6 262.7zM393 90.5L390.3 98.8 393.5 101.6 396.2 93.3zM396.2 93.3L393.5 101.6 396.7 104.9 399.4 96.7zM399.4 96.7L396.7 104.9 400 108.7 402.7 100.6zM477.1 260.9L474.7 264.3 477.7 269.3 480.2 266zM377.9 93.6L375.4 102.2 378.4 102.6 381 94.1zM474.7 264.3L472.2 267.8 475.3 272.6 477.7 269.3zM372.4 102.2L369.9 110.9 372.9 110.9 375.4 102.2zM472.2 267.8L469.7 271.4 472.8 276 475.3 272.6zM367 111.4L364.6 120.1 367.4 119.7 369.9 110.9zM469.7 271.4L467.2 275 470.3 279.4 472.8 276zM364.6 120.1L362.1 128.9 365 128.7 367.4 119.7zM467.2 275L464.7 278.6 467.8 282.8 470.3 279.4zM359.3 129.6L356.9 138.4 359.7 137.9 362.1 128.9zM464.7 278.6L462.2 282.1 465.3 286.2 467.8 282.8zM356.9 138.4L354.6 147.2 357.3 146.8 359.7 137.9zM462.2 282.1L459.6 285.7 462.8 289.5 465.3 286.2zM354.6 147.2L352.2 155.9 355 155.7 357.3 146.8zM459.6 285.7L457.1 289.2 460.3 292.8 462.8 289.5zM457.1 289.2L454.5 292.6 457.7 296 460.3 292.8zM349.9 164.6L347.6 173.2 350.3 173.2 352.6 164.5zM454.5 292.6L452 296 455.2 299.2 457.7 296zM347.6 173.2L345.3 181.5 348 181.7 350.3 173.2zM452 296L449.4 299.2 452.6 302.3 455.2 299.2zM449.4 299.2L446.8 302.4 450.1 305.3 452.6 302.3zM446.8 302.4L444.3 305.5 447.5 308.2 450.1 305.3zM334 227.3L331.6 233.8 334.3 234.9 336.7 228.4zM334.3 234.9L331.9 241.1 334.6 242.4 337 236.2zM337 236.2L334.6 242.4 337.3 243.9 339.7 237.6zM339.7 237.6L337.3 243.9 340.1 245.5 342.5 239.2zM342.5 239.2L340.1 245.5 342.8 247.3 345.3 241zM345.3 241L342.8 247.3 345.7 249.2 348.1 242.9zM348.1 242.9L345.7 249.2 348.5 251.3 351 245zM351 245L348.5 251.3 351.4 253.5 353.9 247.3zM353.9 247.3L351.4 253.5 354.3 255.9 356.8 249.7zM356.8 249.7L354.3 255.9 357.2 258.3 359.7 252.2zM359.7 252.2L357.2 258.3 360.1 260.9 362.7 254.9zM362.7 254.9L360.1 260.9 363.1 263.6 365.7 257.7zM365.7 257.7L363.1 263.6 366.1 266.4 368.7 260.6zM368.7 260.6L366.1 266.4 369.1 269.3 371.7 263.7zM371.7 263.7L369.1 269.3 372.1 272.3 374.7 266.8zM374.7 266.8L372.1 272.3 375.1 275.3 377.7 270zM377.7 270L375.1 275.3 378.2 278.3 380.8 273.2zM380.8 273.2L378.2 278.3 381.2 281.4 383.9 276.4zM383.9 276.4L381.2 281.4 384.3 284.5 386.9 279.7zM386.9 279.7L384.3 284.5 387.3 287.6 390 283zM390 283L387.3 287.6 390.4 290.7 393.1 286.3zM393.1 286.3L390.4 290.7 393.5 293.7 396.2 289.5zM396.2 289.5L393.5 293.7 396.6 296.7 399.3 292.7zM399.3 292.7L396.6 296.7 399.7 299.6 402.4 295.8zM402.4 295.8L399.7 299.6 402.9 302.4 405.6 298.8zM405.6 298.8L402.9 302.4 406 305.2 408.7 301.8zM408.7 301.8L406 305.2 409.2 307.8 411.9 304.6zM411.9 304.6L409.2 307.8 412.3 310.4 415 307.3z"/><path fill="#f6f600" d="M485.5 168L483.2 169.2 486 177.6 488.2 176.3zM488.2 176.3L486 177.6 488.7 185.8 490.9 184.4zM490.9 184.4L488.7 185.8 491.4 193.7 493.6 192.3zM493.6 192.3L491.4 193.7 494.1 201.3 496.3 199.9zM496.3 199.9L494.1 201.3 496.8 208.7 499 207.2zM499 207.2L496.8 208.7 499.6 215.7 501.7 214.1zM466.3 116.5L463.9 117.8 466.8 126.7 469.2 125.3zM469.2 125.3L466.8 126.7 469.7 135.6 472.1 134.2zM472.1 134.2L469.7 135.6 472.5 144.5 474.9 143.1zM474.9 143.1L472.5 144.5 475.4 153.4 477.7 151.9zM477.7 151.9L475.4 153.4 478.1 162.1 480.5 160.6zM480.5 160.6L478.1 162.1 480.9 170.8 483.2 169.2zM483.2 169.2L480.9 170.8 483.7 179.2 486 177.6zM486 177.6L483.7 179.2 486.4 187.4 488.7 185.8zM499.6 215.7L497.4 217.4 500.1 224.1 502.3 222.3zM460.9 109.1L458.4 110.9 461.4 119.7 463.9 117.8zM500.1 224.1L497.9 226.1 500.7 232.4 502.9 230.4zM452.3 94L449.7 96.4 452.8 104.7 455.4 102.4zM455.4 102.4L452.8 104.7 455.8 113.3 458.4 110.9zM497.9 226.1L495.6 228.3 498.4 234.6 500.7 232.4zM449.7 96.4L447.1 99.4 450.2 107.7 452.8 104.7zM447.1 99.4L444.4 102.9 447.5 111.2 450.2 107.7zM444.4 102.9L441.8 107 444.9 115.2 447.5 111.2zM438.6 99.2L435.9 103.9 439 111.6 441.8 107zM435.9 103.9L433.1 109.1 436.3 116.8 439 111.6zM429.9 101.8L427.2 107.7 430.4 114.9 433.1 109.1zM423.9 100.9L421.2 107.4 424.4 114 427.2 107.7zM417.9 101.2L415.2 108.2 418.4 114.3 421.2 107.4zM411.9 102.6L409.2 110.1 412.4 115.6 415.2 108.2zM402.7 100.6L400 108.7 403.2 113.1 405.9 105.1zM405.9 105.1L403.2 113.1 406.4 118 409.2 110.1zM381 94.1L378.4 102.6 381.5 103.7 384.1 95.1zM384.1 95.1L381.5 103.7 384.6 105.3 387.2 96.6zM387.2 96.6L384.6 105.3 387.7 107.4 390.3 98.8zM390.3 98.8L387.7 107.4 390.9 110.1 393.5 101.6zM393.5 101.6L390.9 110.1 394.1 113.4 396.7 104.9zM396.7 104.9L394.1 113.4 397.3 117.2 400 108.7zM375.4 102.2L372.9 110.9 375.9 111.4 378.4 102.6zM369.9 110.9L367.4 119.7 370.4 119.8 372.9 110.9zM367.4 119.7L365 128.7 367.9 128.9 370.4 119.8zM362.1 128.9L359.7 137.9 362.6 137.7 365 128.7zM359.7 137.9L357.3 146.8 360.2 146.8 362.6 137.7zM357.3 146.8L355 155.7 357.8 155.8 360.2 146.8zM352.2 155.9L349.9 164.6 352.6 164.5 355 155.7zM355 155.7L352.6 164.5 355.4 164.7 357.8 155.8zM352.6 164.5L350.3 173.2 353.1 173.5 355.4 164.7zM438.4 305.7L435.8 308.7 439 311.3 441.7 308.4zM336.4 220.5L334 227.3 336.7 228.4 339.1 221.4zM429.9 309.1L427.3 312 430.5 314.3 433.2 311.6zM336.7 228.4L334.3 234.9 337 236.2 339.4 229.6zM420.9 306.8L418.2 309.9 421.4 312.4 424.1 309.5z"/><path fill="#f9f900" d="M488.7 185.8L486.4 187.4 489.2 195.4 491.4 193.7zM491.4 193.7L489.2 195.4 491.9 203 494.1 201.3zM494.1 201.3L491.9 203 494.6 210.4 496.8 208.7zM496.8 208.7L494.6 210.4 497.4 217.4 499.6 215.7zM463.9 117.8L461.4 119.7 464.3 128.5 466.8 126.7zM466.8 126.7L464.3 128.5 467.2 137.5 469.7 135.6zM469.7 135.6L467.2 137.5 470.1 146.4 472.5 144.5zM472.5 144.5L470.1 146.4 472.9 155.3 475.4 153.4zM475.4 153.4L472.9 155.3 475.8 164 478.1 162.1zM478.1 162.1L475.8 164 478.6 172.7 480.9 170.8zM480.9 170.8L478.6 172.7 481.3 181.1 483.7 179.2zM483.7 179.2L481.3 181.1 484.1 189.4 486.4 187.4zM486.4 187.4L484.1 189.4 486.9 197.3 489.2 195.4zM489.2 195.4L486.9 197.3 489.6 205 491.9 203zM491.9 203L489.6 205 492.4 212.4 494.6 210.4zM494.6 210.4L492.4 212.4 495.1 219.4 497.4 217.4zM497.4 217.4L495.1 219.4 497.9 226.1 500.1 224.1zM458.4 110.9L455.8 113.3 458.8 122 461.4 119.7zM495.1 219.4L492.8 221.6 495.6 228.3 497.9 226.1zM452.8 104.7L450.2 107.7 453.3 116.2 455.8 113.3zM495.6 228.3L493.4 230.7 496.2 237 498.4 234.6zM450.2 107.7L447.5 111.2 450.6 119.6 453.3 116.2zM493.4 230.7L491 233.2 493.9 239.5 496.2 237zM447.5 111.2L444.9 115.2 448 123.5 450.6 119.6zM491 233.2L488.7 236 491.6 242.1 493.9 239.5zM441.8 107L439 111.6 442.2 119.7 444.9 115.2zM488.7 236L486.3 238.9 489.2 244.9 491.6 242.1zM439 111.6L436.3 116.8 439.5 124.7 442.2 119.7zM486.3 238.9L483.9 241.9 486.8 247.9 489.2 244.9zM433.1 109.1L430.4 114.9 433.6 122.3 436.3 116.8zM483.9 241.9L481.5 245.1 484.4 251 486.8 247.9zM427.2 107.7L424.4 114 427.6 121 430.4 114.9zM430.4 114.9L427.6 121 430.8 128.4 433.6 122.3zM481.5 245.1L479.1 248.4 482 254.2 484.4 251zM421.2 107.4L418.4 114.3 421.7 120.8 424.4 114zM424.4 114L421.7 120.8 424.9 127.6 427.6 121zM479.1 248.4L476.6 251.9 479.6 257.5 482 254.2zM415.2 108.2L412.4 115.6 415.7 121.5 418.4 114.3zM418.4 114.3L415.7 121.5 418.9 127.9 421.7 120.8zM476.6 251.9L474.1 255.4 477.1 260.9 479.6 257.5zM409.2 110.1L406.4 118 409.7 123.4 412.4 115.6zM412.4 115.6L409.7 123.4 412.9 129.1 415.7 121.5zM474.1 255.4L471.7 259.1 474.7 264.3 477.1 260.9zM400 108.7L397.3 117.2 400.5 121.4 403.2 113.1zM403.2 113.1L400.5 121.4 403.7 126.2 406.4 118zM471.7 259.1L469.2 262.8 472.2 267.8 474.7 264.3zM378.4 102.6L375.9 111.4 378.9 112.5 381.5 103.7zM381.5 103.7L378.9 112.5 382 114.1 384.6 105.3zM384.6 105.3L382 114.1 385.1 116.3 387.7 107.4zM387.7 107.4L385.1 116.3 388.2 118.9 390.9 110.1zM390.9 110.1L388.2 118.9 391.4 122.1 394.1 113.4zM394.1 113.4L391.4 122.1 394.6 125.8 397.3 117.2zM469.2 262.8L466.6 266.5 469.7 271.4 472.2 267.8zM372.9 110.9L370.4 119.8 373.3 120.4 375.9 111.4zM466.6 266.5L464.1 270.3 467.2 275 469.7 271.4zM370.4 119.8L367.9 128.9 370.8 129.6 373.3 120.4zM464.1 270.3L461.6 274 464.7 278.6 467.2 275zM365 128.7L362.6 137.7 365.4 138 367.9 128.9zM461.6 274L459 277.8 462.2 282.1 464.7 278.6zM362.6 137.7L360.2 146.8 363 147.2 365.4 138zM459 277.8L456.5 281.6 459.6 285.7 462.2 282.1zM360.2 146.8L357.8 155.8 360.6 156.3 363 147.2zM456.5 281.6L453.9 285.3 457.1 289.2 459.6 285.7zM357.8 155.8L355.4 164.7 358.2 165.3 360.6 156.3zM453.9 285.3L451.4 288.9 454.5 292.6 457.1 289.2zM355.4 164.7L353.1 173.5 355.9 174.2 358.2 165.3zM451.4 288.9L448.8 292.5 452 296 454.5 292.6zM350.3 173.2L348 181.7 350.7 182.1 353.1 173.5zM448.8 292.5L446.2 296 449.4 299.2 452 296zM348 181.7L345.7 190 348.4 190.5 350.7 182.1zM446.2 296L443.6 299.3 446.8 302.4 449.4 299.2zM345.7 190L343.4 198 346.1 198.7 348.4 190.5zM443.6 299.3L441 302.6 444.3 305.5 446.8 302.4zM343.4 198L341 205.8 343.7 206.6 346.1 198.7zM441 302.6L438.4 305.7 441.7 308.4 444.3 305.5zM341 205.8L338.7 213.3 341.4 214.2 343.7 206.6zM338.7 213.3L336.4 220.5 339.1 221.4 341.4 214.2zM432.6 306.1L429.9 309.1 433.2 311.6 435.8 308.7zM339.1 221.4L336.7 228.4 339.4 229.6 341.8 222.6zM426.7 306.4L424.1 309.5 427.3 312 429.9 309.1zM339.4 229.6L337 236.2 339.7 237.6 342.1 230.9zM342.1 230.9L339.7 237.6 342.5 239.2 344.9 232.5zM344.9 232.5L342.5 239.2 345.3 241 347.7 234.3zM347.7 234.3L345.3 241 348.1 242.9 350.6 236.2zM350.6 236.2L348.1 242.9 351 245 353.5 238.3zM353.5 238.3L351 245 353.9 247.3 356.4 240.6zM356.4 240.6L353.9 247.3 356.8 249.7 359.3 243.1zM359.3 243.1L356.8 249.7 359.7 252.2 362.2 245.7zM362.2 245.7L359.7 252.2 362.7 254.9 365.2 248.5zM365.2 248.5L362.7 254.9 365.7 257.7 368.2 251.5zM368.2 251.5L365.7 257.7 368.7 260.6 371.2 254.5zM371.2 254.5L368.7 260.6 371.7 263.7 374.3 257.7zM374.3 257.7L371.7 263.7 374.7 266.8 377.3 261zM377.3 261L374.7 266.8 377.7 270 380.4 264.3zM380.4 264.3L377.7 270 380.8 273.2 383.4 267.7zM383.4 267.7L380.8 273.2 383.9 276.4 386.5 271.2zM386.5 271.2L383.9 276.4 386.9 279.7 389.6 274.6zM389.6 274.6L386.9 279.7 390 283 392.7 278.1zM392.7 278.1L390 283 393.1 286.3 395.8 281.6zM395.8 281.6L393.1 286.3 396.2 289.5 398.9 285zM398.9 285L396.2 289.5 399.3 292.7 402 288.4zM402 288.4L399.3 292.7 402.4 295.8 405.1 291.7zM405.1 291.7L402.4 295.8 405.6 298.8 408.3 295zM408.3 295L405.6 298.8 408.7 301.8 411.4 298.1zM411.4 298.1L408.7 301.8 411.9 304.6 414.5 301.1zM414.5 301.1L411.9 304.6 415 307.3 417.7 304.1zM417.7 304.1L415 307.3 418.2 309.9 420.9 306.8z"/><path fill="#fcfc00" d="M461.4 119.7L458.8 122 461.8 130.9 464.3 128.5zM464.3 128.5L461.8 130.9 464.7 139.8 467.2 137.5zM467.2 137.5L464.7 139.8 467.6 148.7 470.1 146.4zM470.1 146.4L467.6 148.7 470.5 157.6 472.9 155.3zM472.9 155.3L470.5 157.6 473.3 166.3 475.8 164zM475.8 164L473.3 166.3 476.2 174.9 478.6 172.7zM478.6 172.7L476.2 174.9 479 183.4 481.3 181.1zM481.3 181.1L479 183.4 481.8 191.6 484.1 189.4zM484.1 189.4L481.8 191.6 484.5 199.6 486.9 197.3zM486.9 197.3L484.5 199.6 487.3 207.2 489.6 205zM489.6 205L487.3 207.2 490.1 214.6 492.4 212.4zM492.4 212.4L490.1 214.6 492.8 221.6 495.1 219.4zM455.8 113.3L453.3 116.2 456.3 124.9 458.8 122zM490.1 214.6L487.7 217 490.5 224 492.8 221.6zM492.8 221.6L490.5 224 493.4 230.7 495.6 228.3zM453.3 116.2L450.6 119.6 453.7 128.2 456.3 124.9zM490.5 224L488.2 226.6 491 233.2 493.4 230.7zM450.6 119.6L448 123.5 451 132.1 453.7 128.2zM488.2 226.6L485.8 229.4 488.7 236 491 233.2zM444.9 115.2L442.2 119.7 445.3 127.9 448 123.5zM448 123.5L445.3 127.9 448.4 136.4 451 132.1zM485.8 229.4L483.4 232.4 486.3 238.9 488.7 236zM442.2 119.7L439.5 124.7 442.6 132.8 445.3 127.9zM483.4 232.4L481 235.6 483.9 241.9 486.3 238.9zM436.3 116.8L433.6 122.3 436.8 130.1 439.5 124.7zM439.5 124.7L436.8 130.1 439.9 138.1 442.6 132.8zM481 235.6L478.6 238.9 481.5 245.1 483.9 241.9zM433.6 122.3L430.8 128.4 434 136 436.8 130.1zM478.6 238.9L476.1 242.4 479.1 248.4 481.5 245.1zM427.6 121L424.9 127.6 428.1 134.8 430.8 128.4zM476.1 242.4L473.7 246 476.6 251.9 479.1 248.4zM421.7 120.8L418.9 127.9 422.1 134.5 424.9 127.6zM473.7 246L471.2 249.7 474.1 255.4 476.6 251.9zM415.7 121.5L412.9 129.1 416.2 135.3 418.9 127.9zM471.2 249.7L468.6 253.5 471.7 259.1 474.1 255.4zM406.4 118L403.7 126.2 407 131.4 409.7 123.4zM409.7 123.4L407 131.4 410.2 137 412.9 129.1zM468.6 253.5L466.1 257.4 469.2 262.8 471.7 259.1zM397.3 117.2L394.6 125.8 397.8 130 400.5 121.4zM400.5 121.4L397.8 130 401.1 134.6 403.7 126.2zM403.7 126.2L401.1 134.6 404.3 139.7 407 131.4zM466.1 257.4L463.6 261.3 466.6 266.5 469.2 262.8zM375.9 111.4L373.3 120.4 376.3 121.6 378.9 112.5zM378.9 112.5L376.3 121.6 379.4 123.2 382 114.1zM382 114.1L379.4 123.2 382.5 125.3 385.1 116.3zM385.1 116.3L382.5 125.3 385.6 127.9 388.2 118.9zM388.2 118.9L385.6 127.9 388.8 131.1 391.4 122.1zM391.4 122.1L388.8 131.1 392 134.7 394.6 125.8zM394.6 125.8L392 134.7 395.2 138.7 397.8 130zM463.6 261.3L461 265.3 464.1 270.3 466.6 266.5zM373.3 120.4L370.8 129.6 373.8 130.7 376.3 121.6zM376.3 121.6L373.8 130.7 376.9 132.4 379.4 123.2zM461 265.3L458.5 269.3 461.6 274 464.1 270.3zM367.9 128.9L365.4 138 368.4 138.8 370.8 129.6zM458.5 269.3L455.9 273.2 459 277.8 461.6 274zM365.4 138L363 147.2 365.9 148 368.4 138.8zM455.9 273.2L453.4 277.2 456.5 281.6 459 277.8zM363 147.2L360.6 156.3 363.5 157.1 365.9 148zM453.4 277.2L450.8 281.1 453.9 285.3 456.5 281.6zM360.6 156.3L358.2 165.3 361.1 166.2 363.5 157.1zM450.8 281.1L448.2 285 451.4 288.9 453.9 285.3zM358.2 165.3L355.9 174.2 358.7 175.2 361.1 166.2zM448.2 285L445.6 288.8 448.8 292.5 451.4 288.9zM353.1 173.5L350.7 182.1 353.5 182.9 355.9 174.2zM355.9 174.2L353.5 182.9 356.4 183.9 358.7 175.2zM445.6 288.8L443 292.5 446.2 296 448.8 292.5zM350.7 182.1L348.4 190.5 351.2 191.4 353.5 182.9zM353.5 182.9L351.2 191.4 354 192.5 356.4 183.9zM443 292.5L440.4 296.1 443.6 299.3 446.2 296zM348.4 190.5L346.1 198.7 348.8 199.6 351.2 191.4zM440.4 296.1L437.8 299.5 441 302.6 443.6 299.3zM346.1 198.7L343.7 206.6 346.5 207.6 348.8 199.6zM437.8 299.5L435.2 302.9 438.4 305.7 441 302.6zM343.7 206.6L341.4 214.2 344.1 215.2 346.5 207.6zM435.2 302.9L432.6 306.1 435.8 308.7 438.4 305.7zM341.4 214.2L339.1 221.4 341.8 222.6 344.1 215.2zM341.8 222.6L339.4 229.6 342.1 230.9 344.5 223.9zM344.5 223.9L342.1 230.9 344.9 232.5 347.3 225.4zM347.3 225.4L344.9 232.5 347.7 234.3 350.2 227.2zM350.2 227.2L347.7 234.3 350.6 236.2 353 229.1zM353 229.1L350.6 236.2 353.5 238.3 355.9 231.3zM355.9 231.3L353.5 238.3 356.4 240.6 358.8 233.6zM358.8 233.6L356.4 240.6 359.3 243.1 361.8 236.2zM361.8 236.2L359.3 243.1 362.2 245.7 364.8 238.9zM364.8 238.9L362.2 245.7 365.2 248.5 367.7 241.8zM367.7 241.8L365.2 248.5 368.2 251.5 370.8 244.9zM370.8 244.9L368.2 251.5 371.2 254.5 373.8 248.1zM373.8 248.1L371.2 254.5 374.3 257.7 376.8 251.4zM376.8 251.4L374.3 257.7 377.3 261 379.9 254.8zM379.9 254.8L377.3 261 380.4 264.3 383 258.4zM383 258.4L380.4 264.3 383.4 267.7 386 262zM386 262L383.4 267.7 386.5 271.2 389.1 265.6zM389.1 265.6L386.5 271.2 389.6 274.6 392.2 269.3zM392.2 269.3L389.6 274.6 392.7 278.1 395.3 273zM395.3 273L392.7 278.1 395.8 281.6 398.4 276.6zM398.4 276.6L395.8 281.6 398.9 285 401.5 280.3zM401.5 280.3L398.9 285 402 288.4 404.7 283.9zM404.7 283.9L402 288.4 405.1 291.7 407.8 287.4zM407.8 287.4L405.1 291.7 408.3 295 410.9 290.9zM410.9 290.9L408.3 295 411.4 298.1 414.1 294.2zM414.1 294.2L411.4 298.1 414.5 301.1 417.2 297.5zM417.2 297.5L414.5 301.1 417.7 304.1 420.4 300.6zM420.4 300.6L417.7 304.1 420.9 306.8 423.5 303.6zM423.5 303.6L420.9 306.8 424.1 309.5 426.7 306.4z"/><path fill="#ffff00" d="M458.8 122L456.3 124.9 459.3 133.7 461.8 130.9zM461.8 130.9L459.3 133.7 462.2 142.6 464.7 139.8zM464.7 139.8L462.2 142.6 465.1 151.4 467.6 148.7zM467.6 148.7L465.1 151.4 468 160.3 470.5 157.6zM470.5 157.6L468 160.3 470.9 169 473.3 166.3zM473.3 166.3L470.9 169 473.7 177.6 476.2 174.9zM476.2 174.9L473.7 177.6 476.6 186 479 183.4zM479 183.4L476.6 186 479.4 194.1 481.8 191.6zM481.8 191.6L479.4 194.1 482.2 202.1 484.5 199.6zM484.5 199.6L482.2 202.1 485 209.7 487.3 207.2zM487.3 207.2L485 209.7 487.7 217 490.1 214.6zM456.3 124.9L453.7 128.2 456.7 137 459.3 133.7zM459.3 133.7L456.7 137 459.6 145.8 462.2 142.6zM462.2 142.6L459.6 145.8 462.6 154.6 465.1 151.4zM465.1 151.4L462.6 154.6 465.5 163.3 468 160.3zM468 160.3L465.5 163.3 468.4 172 470.9 169zM470.9 169L468.4 172 471.3 180.5 473.7 177.6zM473.7 177.6L471.3 180.5 474.1 188.9 476.6 186zM476.6 186L474.1 188.9 476.9 197 479.4 194.1zM479.4 194.1L476.9 197 479.8 204.8 482.2 202.1zM482.2 202.1L479.8 204.8 482.6 212.4 485 209.7zM485 209.7L482.6 212.4 485.4 219.7 487.7 217zM487.7 217L485.4 219.7 488.2 226.6 490.5 224zM453.7 128.2L451 132.1 454.1 140.7 456.7 137zM456.7 137L454.1 140.7 457.1 149.4 459.6 145.8zM459.6 145.8L457.1 149.4 460 158.1 462.6 154.6zM462.6 154.6L460 158.1 463 166.8 465.5 163.3zM465.5 163.3L463 166.8 465.9 175.4 468.4 172zM468.4 172L465.9 175.4 468.8 183.8 471.3 180.5zM471.3 180.5L468.8 183.8 471.6 192.1 474.1 188.9zM474.1 188.9L471.6 192.1 474.5 200.1 476.9 197zM476.9 197L474.5 200.1 477.3 207.9 479.8 204.8zM479.8 204.8L477.3 207.9 480.2 215.4 482.6 212.4zM482.6 212.4L480.2 215.4 483 222.6 485.4 219.7zM485.4 219.7L483 222.6 485.8 229.4 488.2 226.6zM451 132.1L448.4 136.4 451.4 144.9 454.1 140.7zM454.1 140.7L451.4 144.9 454.4 153.5 457.1 149.4zM457.1 149.4L454.4 153.5 457.4 162.1 460 158.1zM460 158.1L457.4 162.1 460.4 170.6 463 166.8zM463 166.8L460.4 170.6 463.3 179.1 465.9 175.4zM465.9 175.4L463.3 179.1 466.2 187.4 468.8 183.8zM468.8 183.8L466.2 187.4 469.1 195.5 471.6 192.1zM471.6 192.1L469.1 195.5 472 203.5 474.5 200.1zM474.5 200.1L472 203.5 474.9 211.1 477.3 207.9zM477.3 207.9L474.9 211.1 477.7 218.5 480.2 215.4zM480.2 215.4L477.7 218.5 480.6 225.6 483 222.6zM483 222.6L480.6 225.6 483.4 232.4 485.8 229.4zM445.3 127.9L442.6 132.8 445.7 141.1 448.4 136.4zM448.4 136.4L445.7 141.1 448.8 149.5 451.4 144.9zM451.4 144.9L448.8 149.5 451.8 157.9 454.4 153.5zM454.4 153.5L451.8 157.9 454.8 166.4 457.4 162.1zM457.4 162.1L454.8 166.4 457.8 174.8 460.4 170.6zM460.4 170.6L457.8 174.8 460.7 183.1 463.3 179.1zM463.3 179.1L460.7 183.1 463.7 191.3 466.2 187.4zM466.2 187.4L463.7 191.3 466.6 199.3 469.1 195.5zM469.1 195.5L466.6 199.3 469.5 207.1 472 203.5zM472 203.5L469.5 207.1 472.4 214.6 474.9 211.1zM474.9 211.1L472.4 214.6 475.3 221.9 477.7 218.5zM477.7 218.5L475.3 221.9 478.1 228.9 480.6 225.6zM480.6 225.6L478.1 228.9 481 235.6 483.4 232.4zM442.6 132.8L439.9 138.1 443 146.2 445.7 141.1zM445.7 141.1L443 146.2 446.1 154.5 448.8 149.5zM448.8 149.5L446.1 154.5 449.1 162.7 451.8 157.9zM451.8 157.9L449.1 162.7 452.2 171 454.8 166.4zM454.8 166.4L452.2 171 455.2 179.3 457.8 174.8zM457.8 174.8L455.2 179.3 458.1 187.4 460.7 183.1zM460.7 183.1L458.1 187.4 461.1 195.5 463.7 191.3zM463.7 191.3L461.1 195.5 464 203.3 466.6 199.3zM466.6 199.3L464 203.3 467 211 469.5 207.1zM469.5 207.1L467 211 469.9 218.4 472.4 214.6zM472.4 214.6L469.9 218.4 472.8 225.5 475.3 221.9zM475.3 221.9L472.8 225.5 475.7 232.4 478.1 228.9zM478.1 228.9L475.7 232.4 478.6 238.9 481 235.6zM436.8 130.1L434 136 437.2 143.8 439.9 138.1zM439.9 138.1L437.2 143.8 440.3 151.7 443 146.2zM443 146.2L440.3 151.7 443.4 159.8 446.1 154.5zM446.1 154.5L443.4 159.8 446.5 167.9 449.1 162.7zM449.1 162.7L446.5 167.9 449.5 176 452.2 171zM452.2 171L449.5 176 452.5 184.1 455.2 179.3zM455.2 179.3L452.5 184.1 455.5 192 458.1 187.4zM458.1 187.4L455.5 192 458.5 199.9 461.1 195.5zM461.1 195.5L458.5 199.9 461.5 207.6 464 203.3zM464 203.3L461.5 207.6 464.4 215 467 211zM467 211L464.4 215 467.3 222.3 469.9 218.4zM469.9 218.4L467.3 222.3 470.3 229.3 472.8 225.5zM472.8 225.5L470.3 229.3 473.2 236 475.7 232.4zM475.7 232.4L473.2 236 476.1 242.4 478.6 238.9zM430.8 128.4L428.1 134.8 431.3 142.2 434 136zM434 136L431.3 142.2 434.4 149.8 437.2 143.8zM437.2 143.8L434.4 149.8 437.6 157.5 440.3 151.7zM440.3 151.7L437.6 157.5 440.7 165.4 443.4 159.8zM443.4 159.8L440.7 165.4 443.8 173.3 446.5 167.9zM446.5 167.9L443.8 173.3 446.8 181.2 449.5 176zM449.5 176L446.8 181.2 449.9 189.1 452.5 184.1zM452.5 184.1L449.9 189.1 452.9 196.9 455.5 192zM455.5 192L452.9 196.9 455.9 204.5 458.5 199.9zM458.5 199.9L455.9 204.5 458.9 212 461.5 207.6zM461.5 207.6L458.9 212 461.8 219.3 464.4 215zM464.4 215L461.8 219.3 464.8 226.4 467.3 222.3zM467.3 222.3L464.8 226.4 467.7 233.2 470.3 229.3zM470.3 229.3L467.7 233.2 470.7 239.7 473.2 236zM473.2 236L470.7 239.7 473.7 246 476.1 242.4zM424.9 127.6L422.1 134.5 425.4 141.5 428.1 134.8zM428.1 134.8L425.4 141.5 428.6 148.7 431.3 142.2zM431.3 142.2L428.6 148.7 431.7 156.1 434.4 149.8zM434.4 149.8L431.7 156.1 434.9 163.7 437.6 157.5zM437.6 157.5L434.9 163.7 438 171.3 440.7 165.4zM440.7 165.4L438 171.3 441.1 179 443.8 173.3zM443.8 173.3L441.1 179 444.2 186.7 446.8 181.2zM446.8 181.2L444.2 186.7 447.2 194.4 449.9 189.1zM449.9 189.1L447.2 194.4 450.3 201.9 452.9 196.9zM452.9 196.9L450.3 201.9 453.3 209.4 455.9 204.5zM455.9 204.5L453.3 209.4 456.3 216.7 458.9 212zM458.9 212L456.3 216.7 459.3 223.8 461.8 219.3zM461.8 219.3L459.3 223.8 462.2 230.6 464.8 226.4zM464.8 226.4L462.2 230.6 465.2 237.3 467.7 233.2zM467.7 233.2L465.2 237.3 468.2 243.6 470.7 239.7zM470.7 239.7L468.2 243.6 471.2 249.7 473.7 246zM418.9 127.9L416.2 135.3 419.4 141.8 422.1 134.5zM422.1 134.5L419.4 141.8 422.6 148.5 425.4 141.5zM425.4 141.5L422.6 148.5 425.8 155.5 428.6 148.7zM428.6 148.7L425.8 155.5 429 162.7 431.7 156.1zM431.7 156.1L429 162.7 432.2 170.1 434.9 163.7zM434.9 163.7L432.2 170.1 435.3 177.5 438 171.3zM438 171.3L435.3 177.5 438.4 184.9 441.1 179zM441.1 179L438.4 184.9 441.5 192.4 444.2 186.7zM444.2 186.7L441.5 192.4 444.6 199.8 447.2 194.4zM447.2 194.4L444.6 199.8 447.6 207.2 450.3 201.9zM450.3 201.9L447.6 207.2 450.6 214.4 453.3 209.4zM453.3 209.4L450.6 214.4 453.7 221.5 456.3 216.7zM456.3 216.7L453.7 221.5 456.7 228.4 459.3 223.8zM459.3 223.8L456.7 228.4 459.7 235 462.2 230.6zM462.2 230.6L459.7 235 462.7 241.4 465.2 237.3zM465.2 237.3L462.7 241.4 465.6 247.6 468.2 243.6zM468.2 243.6L465.6 247.6 468.6 253.5 471.2 249.7zM412.9 129.1L410.2 137 413.5 143 416.2 135.3zM416.2 135.3L413.5 143 416.7 149.2 419.4 141.8zM419.4 141.8L416.7 149.2 419.9 155.8 422.6 148.5zM422.6 148.5L419.9 155.8 423.1 162.6 425.8 155.5zM425.8 155.5L423.1 162.6 426.3 169.6 429 162.7zM429 162.7L426.3 169.6 429.4 176.6 432.2 170.1zM432.2 170.1L429.4 176.6 432.6 183.8 435.3 177.5zM435.3 177.5L432.6 183.8 435.7 191.1 438.4 184.9zM438.4 184.9L435.7 191.1 438.8 198.3 441.5 192.4zM441.5 192.4L438.8 198.3 441.9 205.5 444.6 199.8zM444.6 199.8L441.9 205.5 444.9 212.6 447.6 207.2zM447.6 207.2L444.9 212.6 448 219.6 450.6 214.4zM450.6 214.4L448 219.6 451 226.4 453.7 221.5zM453.7 221.5L451 226.4 454.1 233.1 456.7 228.4zM456.7 228.4L454.1 233.1 457.1 239.5 459.7 235zM459.7 235L457.1 239.5 460.1 245.7 462.7 241.4zM462.7 241.4L460.1 245.7 463.1 251.7 465.6 247.6zM465.6 247.6L463.1 251.7 466.1 257.4 468.6 253.5zM407 131.4L404.3 139.7 407.5 145.1 410.2 137zM410.2 137L407.5 145.1 410.7 150.9 413.5 143zM413.5 143L410.7 150.9 414 156.9 416.7 149.2zM416.7 149.2L414 156.9 417.2 163.3 419.9 155.8zM419.9 155.8L417.2 163.3 420.4 169.8 423.1 162.6zM423.1 162.6L420.4 169.8 423.6 176.6 426.3 169.6zM426.3 169.6L423.6 176.6 426.7 183.4 429.4 176.6zM429.4 176.6L426.7 183.4 429.9 190.4 432.6 183.8zM432.6 183.8L429.9 190.4 433 197.3 435.7 191.1zM435.7 191.1L433 197.3 436.1 204.3 438.8 198.3zM438.8 198.3L436.1 204.3 439.2 211.2 441.9 205.5zM441.9 205.5L439.2 211.2 442.3 218.1 444.9 212.6zM444.9 212.6L442.3 218.1 445.3 224.8 448 219.6zM448 219.6L445.3 224.8 448.4 231.4 451 226.4zM451 226.4L448.4 231.4 451.4 237.9 454.1 233.1zM454.1 233.1L451.4 237.9 454.5 244.1 457.1 239.5zM457.1 239.5L454.5 244.1 457.5 250.1 460.1 245.7zM460.1 245.7L457.5 250.1 460.5 255.8 463.1 251.7zM463.1 251.7L460.5 255.8 463.6 261.3 466.1 257.4zM397.8 130L395.2 138.7 398.4 143.2 401.1 134.6zM401.1 134.6L398.4 143.2 401.6 148.1 404.3 139.7zM404.3 139.7L401.6 148.1 404.8 153.3 407.5 145.1zM407.5 145.1L404.8 153.3 408.1 158.9 410.7 150.9zM410.7 150.9L408.1 158.9 411.3 164.8 414 156.9zM414 156.9L411.3 164.8 414.5 170.9 417.2 163.3zM417.2 163.3L414.5 170.9 417.7 177.2 420.4 169.8zM420.4 169.8L417.7 177.2 420.9 183.7 423.6 176.6zM423.6 176.6L420.9 183.7 424 190.3 426.7 183.4zM426.7 183.4L424 190.3 427.2 197 429.9 190.4zM429.9 190.4L427.2 197 430.3 203.7 433 197.3zM433 197.3L430.3 203.7 433.4 210.4 436.1 204.3zM436.1 204.3L433.4 210.4 436.5 217.1 439.2 211.2zM439.2 211.2L436.5 217.1 439.6 223.7 442.3 218.1zM442.3 218.1L439.6 223.7 442.7 230.2 445.3 224.8zM445.3 224.8L442.7 230.2 445.8 236.6 448.4 231.4zM448.4 231.4L445.8 236.6 448.8 242.7 451.4 237.9zM451.4 237.9L448.8 242.7 451.9 248.7 454.5 244.1zM454.5 244.1L451.9 248.7 454.9 254.5 457.5 250.1zM457.5 250.1L454.9 254.5 458 260 460.5 255.8zM460.5 255.8L458 260 461 265.3 463.6 261.3zM379.4 123.2L376.9 132.4 380 134.5 382.5 125.3zM382.5 125.3L380 134.5 383.1 137.1 385.6 127.9zM385.6 127.9L383.1 137.1 386.2 140.1 388.8 131.1zM388.8 131.1L386.2 140.1 389.4 143.6 392 134.7zM392 134.7L389.4 143.6 392.6 147.6 395.2 138.7zM395.2 138.7L392.6 147.6 395.7 151.9 398.4 143.2zM398.4 143.2L395.7 151.9 399 156.6 401.6 148.1zM401.6 148.1L399 156.6 402.2 161.7 404.8 153.3zM404.8 153.3L402.2 161.7 405.4 167.1 408.1 158.9zM408.1 158.9L405.4 167.1 408.6 172.7 411.3 164.8zM411.3 164.8L408.6 172.7 411.8 178.6 414.5 170.9zM414.5 170.9L411.8 178.6 415 184.7 417.7 177.2zM417.7 177.2L415 184.7 418.2 190.9 420.9 183.7zM420.9 183.7L418.2 190.9 421.3 197.3 424 190.3zM424 190.3L421.3 197.3 424.5 203.7 427.2 197zM427.2 197L424.5 203.7 427.6 210.2 430.3 203.7zM430.3 203.7L427.6 210.2 430.8 216.6 433.4 210.4zM433.4 210.4L430.8 216.6 433.9 223 436.5 217.1zM436.5 217.1L433.9 223 437 229.4 439.6 223.7zM439.6 223.7L437 229.4 440.1 235.6 442.7 230.2zM442.7 230.2L440.1 235.6 443.1 241.7 445.8 236.6zM445.8 236.6L443.1 241.7 446.2 247.6 448.8 242.7zM448.8 242.7L446.2 247.6 449.3 253.4 451.9 248.7zM451.9 248.7L449.3 253.4 452.3 258.9 454.9 254.5zM454.9 254.5L452.3 258.9 455.4 264.2 458 260zM458 260L455.4 264.2 458.5 269.3 461 265.3zM370.8 129.6L368.4 138.8 371.3 140 373.8 130.7zM373.8 130.7L371.3 140 374.4 141.6 376.9 132.4zM376.9 132.4L374.4 141.6 377.4 143.7 380 134.5zM380 134.5L377.4 143.7 380.5 146.3 383.1 137.1zM383.1 137.1L380.5 146.3 383.6 149.2 386.2 140.1zM386.2 140.1L383.6 149.2 386.8 152.7 389.4 143.6zM389.4 143.6L386.8 152.7 389.9 156.5 392.6 147.6zM392.6 147.6L389.9 156.5 393.1 160.7 395.7 151.9zM395.7 151.9L393.1 160.7 396.3 165.2 399 156.6zM399 156.6L396.3 165.2 399.5 170.1 402.2 161.7zM402.2 161.7L399.5 170.1 402.7 175.3 405.4 167.1zM405.4 167.1L402.7 175.3 405.9 180.7 408.6 172.7zM408.6 172.7L405.9 180.7 409.1 186.4 411.8 178.6zM411.8 178.6L409.1 186.4 412.3 192.2 415 184.7zM415 184.7L412.3 192.2 415.5 198.2 418.2 190.9zM418.2 190.9L415.5 198.2 418.6 204.3 421.3 197.3zM421.3 197.3L418.6 204.3 421.8 210.5 424.5 203.7zM424.5 203.7L421.8 210.5 424.9 216.7 427.6 210.2zM427.6 210.2L424.9 216.7 428.1 222.9 430.8 216.6zM430.8 216.6L428.1 222.9 431.2 229 433.9 223zM433.9 223L431.2 229 434.3 235.1 437 229.4zM437 229.4L434.3 235.1 437.4 241.1 440.1 235.6zM440.1 235.6L437.4 241.1 440.5 246.9 443.1 241.7zM443.1 241.7L440.5 246.9 443.6 252.6 446.2 247.6zM446.2 247.6L443.6 252.6 446.7 258.1 449.3 253.4zM449.3 253.4L446.7 258.1 449.8 263.4 452.3 258.9zM452.3 258.9L449.8 263.4 452.8 268.4 455.4 264.2zM455.4 264.2L452.8 268.4 455.9 273.2 458.5 269.3zM368.4 138.8L365.9 148 368.9 149.2 371.3 140zM371.3 140L368.9 149.2 371.9 150.9 374.4 141.6zM374.4 141.6L371.9 150.9 374.9 152.9 377.4 143.7zM377.4 143.7L374.9 152.9 378 155.4 380.5 146.3zM380.5 146.3L378 155.4 381.1 158.4 383.6 149.2zM383.6 149.2L381.1 158.4 384.2 161.7 386.8 152.7zM386.8 152.7L384.2 161.7 387.4 165.4 389.9 156.5zM389.9 156.5L387.4 165.4 390.5 169.4 393.1 160.7zM393.1 160.7L390.5 169.4 393.7 173.8 396.3 165.2zM396.3 165.2L393.7 173.8 396.9 178.5 399.5 170.1zM399.5 170.1L396.9 178.5 400.1 183.5 402.7 175.3zM402.7 175.3L400.1 183.5 403.3 188.7 405.9 180.7zM405.9 180.7L403.3 188.7 406.4 194.2 409.1 186.4zM409.1 186.4L406.4 194.2 409.6 199.8 412.3 192.2zM412.3 192.2L409.6 199.8 412.8 205.5 415.5 198.2zM415.5 198.2L412.8 205.5 416 211.3 418.6 204.3zM418.6 204.3L416 211.3 419.1 217.2 421.8 210.5zM421.8 210.5L419.1 217.2 422.3 223.2 424.9 216.7zM424.9 216.7L422.3 223.2 425.4 229.1 428.1 222.9zM428.1 222.9L425.4 229.1 428.5 235 431.2 229zM431.2 229L428.5 235 431.6 240.8 434.3 235.1zM434.3 235.1L431.6 240.8 434.8 246.5 437.4 241.1zM437.4 241.1L434.8 246.5 437.9 252.1 440.5 246.9zM440.5 246.9L437.9 252.1 441 257.5 443.6 252.6zM443.6 252.6L441 257.5 444.1 262.7 446.7 258.1zM446.7 258.1L444.1 262.7 447.2 267.8 449.8 263.4zM449.8 263.4L447.2 267.8 450.3 272.6 452.8 268.4zM452.8 268.4L450.3 272.6 453.4 277.2 455.9 273.2zM365.9 148L363.5 157.1 366.4 158.4 368.9 149.2zM368.9 149.2L366.4 158.4 369.4 160.1 371.9 150.9zM371.9 150.9L369.4 160.1 372.4 162.1 374.9 152.9zM374.9 152.9L372.4 162.1 375.5 164.6 378 155.4zM378 155.4L375.5 164.6 378.6 167.5 381.1 158.4zM381.1 158.4L378.6 167.5 381.7 170.7 384.2 161.7zM384.2 161.7L381.7 170.7 384.8 174.3 387.4 165.4zM387.4 165.4L384.8 174.3 387.9 178.2 390.5 169.4zM390.5 169.4L387.9 178.2 391.1 182.4 393.7 173.8zM393.7 173.8L391.1 182.4 394.3 186.9 396.9 178.5zM396.9 178.5L394.3 186.9 397.4 191.7 400.1 183.5zM400.1 183.5L397.4 191.7 400.6 196.7 403.3 188.7zM403.3 188.7L400.6 196.7 403.8 201.9 406.4 194.2zM406.4 194.2L403.8 201.9 407 207.3 409.6 199.8zM409.6 199.8L407 207.3 410.1 212.8 412.8 205.5zM412.8 205.5L410.1 212.8 413.3 218.3 416 211.3zM416 211.3L413.3 218.3 416.5 224 419.1 217.2zM419.1 217.2L416.5 224 419.6 229.6 422.3 223.2zM422.3 223.2L419.6 229.6 422.7 235.3 425.4 229.1zM425.4 229.1L422.7 235.3 425.9 240.9 428.5 235zM428.5 235L425.9 240.9 429 246.4 431.6 240.8zM431.6 240.8L429 246.4 432.1 251.9 434.8 246.5zM434.8 246.5L432.1 251.9 435.2 257.2 437.9 252.1zM437.9 252.1L435.2 257.2 438.3 262.4 441 257.5zM441 257.5L438.3 262.4 441.4 267.4 444.1 262.7zM444.1 262.7L441.4 267.4 444.6 272.2 447.2 267.8zM447.2 267.8L444.6 272.2 447.7 276.8 450.3 272.6zM450.3 272.6L447.7 276.8 450.8 281.1 453.4 277.2zM363.5 157.1L361.1 166.2 364 167.5 366.4 158.4zM366.4 158.4L364 167.5 367 169.2 369.4 160.1zM369.4 160.1L367 169.2 370 171.3 372.4 162.1zM372.4 162.1L370 171.3 373 173.7 375.5 164.6zM375.5 164.6L373 173.7 376.1 176.5 378.6 167.5zM378.6 167.5L376.1 176.5 379.2 179.6 381.7 170.7zM381.7 170.7L379.2 179.6 382.3 183.1 384.8 174.3zM384.8 174.3L382.3 183.1 385.4 186.8 387.9 178.2zM387.9 178.2L385.4 186.8 388.5 190.9 391.1 182.4zM391.1 182.4L388.5 190.9 391.7 195.2 394.3 186.9zM394.3 186.9L391.7 195.2 394.8 199.8 397.4 191.7zM397.4 191.7L394.8 199.8 398 204.6 400.6 196.7zM400.6 196.7L398 204.6 401.2 209.6 403.8 201.9zM403.8 201.9L401.2 209.6 404.3 214.7 407 207.3zM407 207.3L404.3 214.7 407.5 219.9 410.1 212.8zM410.1 212.8L407.5 219.9 410.7 225.3 413.3 218.3zM413.3 218.3L410.7 225.3 413.8 230.6 416.5 224zM416.5 224L413.8 230.6 416.9 236 419.6 229.6zM419.6 229.6L416.9 236 420.1 241.4 422.7 235.3zM422.7 235.3L420.1 241.4 423.2 246.8 425.9 240.9zM425.9 240.9L423.2 246.8 426.3 252 429 246.4zM429 246.4L426.3 252 429.5 257.2 432.1 251.9zM432.1 251.9L429.5 257.2 432.6 262.3 435.2 257.2zM435.2 257.2L432.6 262.3 435.7 267.2 438.3 262.4zM438.3 262.4L435.7 267.2 438.8 271.9 441.4 267.4zM441.4 267.4L438.8 271.9 441.9 276.5 444.6 272.2zM444.6 272.2L441.9 276.5 445.1 280.8 447.7 276.8zM447.7 276.8L445.1 280.8 448.2 285 450.8 281.1zM361.1 166.2L358.7 175.2 361.6 176.5 364 167.5zM364 167.5L361.6 176.5 364.6 178.2 367 169.2zM367 169.2L364.6 178.2 367.5 180.2 370 171.3zM370 171.3L367.5 180.2 370.5 182.6 373 173.7zM373 173.7L370.5 182.6 373.6 185.3 376.1 176.5zM376.1 176.5L373.6 185.3 376.6 188.4 379.2 179.6zM379.2 179.6L376.6 188.4 379.7 191.7 382.3 183.1zM382.3 183.1L379.7 191.7 382.8 195.4 385.4 186.8zM385.4 186.8L382.8 195.4 386 199.3 388.5 190.9zM388.5 190.9L386 199.3 389.1 203.4 391.7 195.2zM391.7 195.2L389.1 203.4 392.2 207.8 394.8 199.8zM394.8 199.8L392.2 207.8 395.4 212.4 398 204.6zM398 204.6L395.4 212.4 398.5 217.1 401.2 209.6zM401.2 209.6L398.5 217.1 401.7 222 404.3 214.7zM404.3 214.7L401.7 222 404.9 227 407.5 219.9zM407.5 219.9L404.9 227 408 232.1 410.7 225.3zM410.7 225.3L408 232.1 411.2 237.2 413.8 230.6zM413.8 230.6L411.2 237.2 414.3 242.3 416.9 236zM416.9 236L414.3 242.3 417.4 247.5 420.1 241.4zM420.1 241.4L417.4 247.5 420.6 252.5 423.2 246.8zM423.2 246.8L420.6 252.5 423.7 257.5 426.3 252zM426.3 252L423.7 257.5 426.8 262.4 429.5 257.2zM429.5 257.2L426.8 262.4 429.9 267.2 432.6 262.3zM432.6 262.3L429.9 267.2 433.1 271.9 435.7 267.2zM435.7 267.2L433.1 271.9 436.2 276.4 438.8 271.9zM438.8 271.9L436.2 276.4 439.3 280.7 441.9 276.5zM441.9 276.5L439.3 280.7 442.5 284.9 445.1 280.8zM445.1 280.8L442.5 284.9 445.6 288.8 448.2 285zM358.7 175.2L356.4 183.9 359.2 185.3 361.6 176.5zM361.6 176.5L359.2 185.3 362.1 187 364.6 178.2zM364.6 178.2L362.1 187 365.1 189 367.5 180.2zM367.5 180.2L365.1 189 368.1 191.4 370.5 182.6zM370.5 182.6L368.1 191.4 371.1 194 373.6 185.3zM373.6 185.3L371.1 194 374.2 197 376.6 188.4zM376.6 188.4L374.2 197 377.2 200.2 379.7 191.7zM379.7 191.7L377.2 200.2 380.3 203.7 382.8 195.4zM382.8 195.4L380.3 203.7 383.4 207.5 386 199.3zM386 199.3L383.4 207.5 386.5 211.5 389.1 203.4zM389.1 203.4L386.5 211.5 389.7 215.7 392.2 207.8zM392.2 207.8L389.7 215.7 392.8 220 395.4 212.4zM395.4 212.4L392.8 220 395.9 224.6 398.5 217.1zM398.5 217.1L395.9 224.6 399.1 229.2 401.7 222zM401.7 222L399.1 229.2 402.2 234 404.9 227zM404.9 227L402.2 234 405.4 238.8 408 232.1zM408 232.1L405.4 238.8 408.5 243.6 411.2 237.2zM411.2 237.2L408.5 243.6 411.6 248.5 414.3 242.3zM414.3 242.3L411.6 248.5 414.8 253.4 417.4 247.5zM417.4 247.5L414.8 253.4 417.9 258.2 420.6 252.5zM420.6 252.5L417.9 258.2 421 262.9 423.7 257.5zM423.7 257.5L421 262.9 424.2 267.6 426.8 262.4zM426.8 262.4L424.2 267.6 427.3 272.1 429.9 267.2zM429.9 267.2L427.3 272.1 430.4 276.5 433.1 271.9zM433.1 271.9L430.4 276.5 433.6 280.8 436.2 276.4zM436.2 276.4L433.6 280.8 436.7 284.9 439.3 280.7zM439.3 280.7L436.7 284.9 439.9 288.8 442.5 284.9zM442.5 284.9L439.9 288.8 443 292.5 445.6 288.8zM356.4 183.9L354 192.5 356.9 193.9 359.2 185.3zM359.2 185.3L356.9 193.9 359.7 195.6 362.1 187zM362.1 187L359.7 195.6 362.7 197.6 365.1 189zM365.1 189L362.7 197.6 365.6 199.9 368.1 191.4zM368.1 191.4L365.6 199.9 368.6 202.5 371.1 194zM371.1 194L368.6 202.5 371.7 205.4 374.2 197zM374.2 197L371.7 205.4 374.7 208.5 377.2 200.2zM377.2 200.2L374.7 208.5 377.8 211.9 380.3 203.7zM380.3 203.7L377.8 211.9 380.9 215.5 383.4 207.5zM383.4 207.5L380.9 215.5 384 219.3 386.5 211.5zM386.5 211.5L384 219.3 387.1 223.3 389.7 215.7zM389.7 215.7L387.1 223.3 390.2 227.5 392.8 220zM392.8 220L390.2 227.5 393.3 231.8 395.9 224.6zM395.9 224.6L393.3 231.8 396.5 236.2 399.1 229.2zM399.1 229.2L396.5 236.2 399.6 240.7 402.2 234zM402.2 234L399.6 240.7 402.7 245.3 405.4 238.8zM405.4 238.8L402.7 245.3 405.9 249.9 408.5 243.6zM408.5 243.6L405.9 249.9 409 254.5 411.6 248.5zM411.6 248.5L409 254.5 412.1 259.1 414.8 253.4zM414.8 253.4L412.1 259.1 415.3 263.7 417.9 258.2zM417.9 258.2L415.3 263.7 418.4 268.2 421 262.9zM421 262.9L418.4 268.2 421.5 272.6 424.2 267.6zM424.2 267.6L421.5 272.6 424.7 276.9 427.3 272.1zM427.3 272.1L424.7 276.9 427.8 281 430.4 276.5zM430.4 276.5L427.8 281 430.9 285 433.6 280.8zM433.6 280.8L430.9 285 434.1 288.9 436.7 284.9zM436.7 284.9L434.1 288.9 437.3 292.6 439.9 288.8zM439.9 288.8L437.3 292.6 440.4 296.1 443 292.5zM351.2 191.4L348.8 199.6 351.6 200.8 354 192.5zM354 192.5L351.6 200.8 354.5 202.2 356.9 193.9zM356.9 193.9L354.5 202.2 357.4 203.9 359.7 195.6zM359.7 195.6L357.4 203.9 360.3 205.9 362.7 197.6zM362.7 197.6L360.3 205.9 363.2 208.2 365.6 199.9zM365.6 199.9L363.2 208.2 366.2 210.7 368.6 202.5zM368.6 202.5L366.2 210.7 369.2 213.5 371.7 205.4zM371.7 205.4L369.2 213.5 372.2 216.5 374.7 208.5zM374.7 208.5L372.2 216.5 375.3 219.8 377.8 211.9zM377.8 211.9L375.3 219.8 378.3 223.2 380.9 215.5zM380.9 215.5L378.3 223.2 381.4 226.9 384 219.3zM384 219.3L381.4 226.9 384.5 230.7 387.1 223.3zM387.1 223.3L384.5 230.7 387.6 234.7 390.2 227.5zM390.2 227.5L387.6 234.7 390.7 238.8 393.3 231.8zM393.3 231.8L390.7 238.8 393.9 243 396.5 236.2zM396.5 236.2L393.9 243 397 247.3 399.6 240.7zM399.6 240.7L397 247.3 400.1 251.6 402.7 245.3zM402.7 245.3L400.1 251.6 403.2 256 405.9 249.9zM405.9 249.9L403.2 256 406.4 260.4 409 254.5zM409 254.5L406.4 260.4 409.5 264.7 412.1 259.1zM412.1 259.1L409.5 264.7 412.6 269 415.3 263.7zM415.3 263.7L412.6 269 415.8 273.3 418.4 268.2zM418.4 268.2L415.8 273.3 418.9 277.4 421.5 272.6zM421.5 272.6L418.9 277.4 422 281.5 424.7 276.9zM424.7 276.9L422 281.5 425.2 285.4 427.8 281zM427.8 281L425.2 285.4 428.3 289.2 430.9 285zM430.9 285L428.3 289.2 431.5 292.8 434.1 288.9zM434.1 288.9L431.5 292.8 434.6 296.3 437.3 292.6zM437.3 292.6L434.6 296.3 437.8 299.5 440.4 296.1zM348.8 199.6L346.5 207.6 349.3 208.8 351.6 200.8zM351.6 200.8L349.3 208.8 352.1 210.3 354.5 202.2zM354.5 202.2L352.1 210.3 355 212 357.4 203.9zM357.4 203.9L355 212 357.9 214 360.3 205.9zM360.3 205.9L357.9 214 360.8 216.2 363.2 208.2zM363.2 208.2L360.8 216.2 363.7 218.7 366.2 210.7zM366.2 210.7L363.7 218.7 366.7 221.4 369.2 213.5zM369.2 213.5L366.7 221.4 369.7 224.3 372.2 216.5zM372.2 216.5L369.7 224.3 372.8 227.4 375.3 219.8zM375.3 219.8L372.8 227.4 375.8 230.7 378.3 223.2zM378.3 223.2L375.8 230.7 378.9 234.2 381.4 226.9zM381.4 226.9L378.9 234.2 382 237.9 384.5 230.7zM384.5 230.7L382 237.9 385 241.7 387.6 234.7zM387.6 234.7L385 241.7 388.1 245.6 390.7 238.8zM390.7 238.8L388.1 245.6 391.3 249.6 393.9 243zM393.9 243L391.3 249.6 394.4 253.6 397 247.3zM397 247.3L394.4 253.6 397.5 257.8 400.1 251.6zM400.1 251.6L397.5 257.8 400.6 261.9 403.2 256zM403.2 256L400.6 261.9 403.7 266 406.4 260.4zM406.4 260.4L403.7 266 406.8 270.1 409.5 264.7zM409.5 264.7L406.8 270.1 410 274.2 412.6 269zM412.6 269L410 274.2 413.1 278.2 415.8 273.3zM415.8 273.3L413.1 278.2 416.2 282.1 418.9 277.4zM418.9 277.4L416.2 282.1 419.4 285.9 422 281.5zM422 281.5L419.4 285.9 422.5 289.6 425.2 285.4zM425.2 285.4L422.5 289.6 425.7 293.2 428.3 289.2zM428.3 289.2L425.7 293.2 428.8 296.6 431.5 292.8zM431.5 292.8L428.8 296.6 432 299.8 434.6 296.3zM434.6 296.3L432 299.8 435.2 302.9 437.8 299.5zM346.5 207.6L344.1 215.2 346.9 216.5 349.3 208.8zM349.3 208.8L346.9 216.5 349.7 218 352.1 210.3zM352.1 210.3L349.7 218 352.6 219.8 355 212zM355 212L352.6 219.8 355.4 221.7 357.9 214zM357.9 214L355.4 221.7 358.4 223.9 360.8 216.2zM360.8 216.2L358.4 223.9 361.3 226.3 363.7 218.7zM363.7 218.7L361.3 226.3 364.3 228.9 366.7 221.4zM366.7 221.4L364.3 228.9 367.2 231.8 369.7 224.3zM369.7 224.3L367.2 231.8 370.3 234.8 372.8 227.4zM372.8 227.4L370.3 234.8 373.3 238 375.8 230.7zM375.8 230.7L373.3 238 376.3 241.3 378.9 234.2zM378.9 234.2L376.3 241.3 379.4 244.8 382 237.9zM382 237.9L379.4 244.8 382.5 248.4 385 241.7zM385 241.7L382.5 248.4 385.6 252.1 388.1 245.6zM388.1 245.6L385.6 252.1 388.6 255.9 391.3 249.6zM391.3 249.6L388.6 255.9 391.7 259.8 394.4 253.6zM394.4 253.6L391.7 259.8 394.9 263.6 397.5 257.8zM397.5 257.8L394.9 263.6 398 267.5 400.6 261.9zM400.6 261.9L398 267.5 401.1 271.4 403.7 266zM403.7 266L401.1 271.4 404.2 275.3 406.8 270.1zM406.8 270.1L404.2 275.3 407.3 279.2 410 274.2zM410 274.2L407.3 279.2 410.4 282.9 413.1 278.2zM413.1 278.2L410.4 282.9 413.6 286.6 416.2 282.1zM416.2 282.1L413.6 286.6 416.7 290.2 419.4 285.9zM419.4 285.9L416.7 290.2 419.9 293.6 422.5 289.6zM422.5 289.6L419.9 293.6 423 297 425.7 293.2zM425.7 293.2L423 297 426.2 300.2 428.8 296.6zM428.8 296.6L426.2 300.2 429.4 303.2 432 299.8zM432 299.8L429.4 303.2 432.6 306.1 435.2 302.9zM344.1 215.2L341.8 222.6 344.5 223.9 346.9 216.5zM346.9 216.5L344.5 223.9 347.3 225.4 349.7 218zM349.7 218L347.3 225.4 350.2 227.2 352.6 219.8zM352.6 219.8L350.2 227.2 353 229.1 355.4 221.7zM355.4 221.7L353 229.1 355.9 231.3 358.4 223.9zM358.4 223.9L355.9 231.3 358.8 233.6 361.3 226.3zM361.3 226.3L358.8 233.6 361.8 236.2 364.3 228.9zM364.3 228.9L361.8 236.2 364.8 238.9 367.2 231.8zM367.2 231.8L364.8 238.9 367.7 241.8 370.3 234.8zM370.3 234.8L367.7 241.8 370.8 244.9 373.3 238zM373.3 238L370.8 244.9 373.8 248.1 376.3 241.3zM376.3 241.3L373.8 248.1 376.8 251.4 379.4 244.8zM379.4 244.8L376.8 251.4 379.9 254.8 382.5 248.4zM382.5 248.4L379.9 254.8 383 258.4 385.6 252.1zM385.6 252.1L383 258.4 386 262 388.6 255.9zM388.6 255.9L386 262 389.1 265.6 391.7 259.8zM391.7 259.8L389.1 265.6 392.2 269.3 394.9 263.6zM394.9 263.6L392.2 269.3 395.3 273 398 267.5zM398 267.5L395.3 273 398.4 276.6 401.1 271.4zM401.1 271.4L398.4 276.6 401.5 280.3 404.2 275.3zM404.2 275.3L401.5 280.3 404.7 283.9 407.3 279.2zM407.3 279.2L404.7 283.9 407.8 287.4 410.4 282.9zM410.4 282.9L407.8 287.4 410.9 290.9 413.6 286.6zM413.6 286.6L410.9 290.9 414.1 294.2 416.7 290.2zM416.7 290.2L414.1 294.2 417.2 297.5 419.9 293.6zM419.9 293.6L417.2 297.5 420.4 300.6 423 297zM423 297L420.4 300.6 423.5 303.6 426.2 300.2zM426.2 300.2L423.5 303.6 426.7 306.4 429.4 303.2zM429.4 303.2L426.7 306.4 429.9 309.1 432.6 306.1z"/></g><ellipse cx="417" cy="182" rx="56" ry="60" fill="url(#sp)"/><path d="M513 168h1v1h-1zM519 172h1v1h-1zM525 175h1v1h-1zM531 179h1v1h-1zM537 182h1v1h-1zM544 185h1v1h-1zM550 187h1v1h-1zM557 189h1v1h-1zM564 191h1v1h-1zM571 191h1v1h-1zM578 192h1v1h-1zM586 192h1v1h-1zM515 172h1v1h-1zM521 176h1v1h-1zM527 180h1v1h-1zM533 184h1v1h-1zM540 188h1v1h-1zM546 191h1v1h-1zM553 194h1v1h-1zM560 196h1v1h-1zM567 197h1v1h-1zM574 198h1v1h-1zM581 198h1v1h-1zM512 170h1v1h-1zM518 175h1v1h-1zM524 180h1v1h-1zM530 185h1v1h-1zM536 190h1v1h-1zM542 194h1v1h-1zM549 197h1v1h-1zM556 200h1v1h-1zM562 202h1v1h-1zM570 204h1v1h-1zM577 205h1v1h-1zM520 179h1v1h-1zM526 185h1v1h-1zM532 190h1v1h-1zM539 196h1v1h-1zM545 200h1v1h-1zM552 204h1v1h-1zM558 207h1v1h-1zM565 209h1v1h-1zM573 210h1v1h-1zM511 169h1v1h-1zM517 176h1v1h-1zM523 183h1v1h-1zM529 190h1v1h-1zM535 196h1v1h-1zM541 202h1v1h-1zM548 207h1v1h-1zM554 211h1v1h-1zM561 214h1v1h-1zM568 216h1v1h-1zM513 172h1v1h-1zM525 189h1v1h-1zM531 196h1v1h-1zM538 203h1v1h-1zM544 209h1v1h-1zM550 214h1v1h-1zM557 218h1v1h-1zM564 220h1v1h-1zM516 177h1v1h-1zM522 187h1v1h-1zM528 195h1v1h-1zM534 203h1v1h-1zM540 210h1v1h-1zM547 216h1v1h-1zM553 221h1v1h-1zM560 225h1v1h-1zM512 173h1v1h-1zM518 184h1v1h-1zM524 194h1v1h-1zM530 203h1v1h-1zM536 211h1v1h-1zM543 218h1v1h-1zM549 224h1v1h-1zM556 229h1v1h-1zM503 156h1v1h-1zM509 168h1v1h-1zM520 192h1v1h-1zM526 203h1v1h-1zM532 212h1v1h-1zM539 220h1v1h-1zM545 227h1v1h-1zM552 232h1v1h-1zM493 136h1v1h-1zM499 150h1v1h-1zM505 164h1v1h-1zM511 177h1v1h-1zM517 190h1v1h-1zM523 202h1v1h-1zM529 212h1v1h-1zM535 222h1v1h-1zM541 229h1v1h-1zM548 236h1v1h-1zM483 114h1v1h-1zM489 128h1v1h-1zM495 144h1v1h-1zM501 159h1v1h-1zM507 174h1v1h-1zM513 188h1v1h-1zM519 201h1v1h-1zM525 213h1v1h-1zM531 223h1v1h-1zM537 232h1v1h-1zM544 239h1v1h-1zM472 91h1v1h-1zM485 122h1v1h-1zM491 138h1v1h-1zM497 155h1v1h-1zM503 171h1v1h-1zM509 187h1v1h-1zM514 201h1v1h-1zM520 214h1v1h-1zM527 225h1v1h-1zM533 234h1v1h-1zM540 242h1v1h-1zM461 70h1v1h-1zM467 84h1v1h-1zM474 100h1v1h-1zM480 117h1v1h-1zM486 134h1v1h-1zM492 152h1v1h-1zM498 169h1v1h-1zM504 186h1v1h-1zM510 201h1v1h-1zM516 215h1v1h-1zM522 227h1v1h-1zM529 237h1v1h-1zM535 245h1v1h-1zM449 52h1v1h-1zM456 64h1v1h-1zM462 78h1v1h-1zM469 95h1v1h-1zM475 113h1v1h-1zM482 132h1v1h-1zM488 150h1v1h-1zM494 169h1v1h-1zM500 186h1v1h-1zM506 202h1v1h-1zM512 217h1v1h-1zM518 229h1v1h-1zM524 240h1v1h-1zM531 249h1v1h-1zM436 38h1v1h-1zM443 48h1v1h-1zM450 60h1v1h-1zM457 76h1v1h-1zM464 93h1v1h-1zM470 112h1v1h-1zM477 131h1v1h-1zM483 150h1v1h-1zM489 169h1v1h-1zM495 187h1v1h-1zM501 204h1v1h-1zM507 219h1v1h-1zM513 232h1v1h-1zM520 244h1v1h-1zM526 253h1v1h-1zM416 29h1v1h-1zM423 31h1v1h-1zM430 37h1v1h-1zM437 47h1v1h-1zM444 60h1v1h-1zM451 76h1v1h-1zM458 93h1v1h-1zM465 113h1v1h-1zM472 132h1v1h-1zM478 152h1v1h-1zM484 172h1v1h-1zM490 190h1v1h-1zM496 207h1v1h-1zM502 222h1v1h-1zM509 236h1v1h-1zM515 247h1v1h-1zM522 257h1v1h-1zM409 32h1v1h-1zM417 34h1v1h-1zM424 40h1v1h-1zM431 50h1v1h-1zM439 63h1v1h-1zM446 79h1v1h-1zM453 97h1v1h-1zM459 116h1v1h-1zM466 136h1v1h-1zM472 156h1v1h-1zM479 176h1v1h-1zM485 194h1v1h-1zM491 211h1v1h-1zM497 227h1v1h-1zM504 240h1v1h-1zM510 252h1v1h-1zM517 262h1v1h-1zM390 44h1v1h-1zM396 40h1v1h-1zM403 38h1v1h-1zM411 41h1v1h-1zM418 47h1v1h-1zM425 57h1v1h-1zM433 70h1v1h-1zM440 85h1v1h-1zM447 103h1v1h-1zM454 122h1v1h-1zM460 142h1v1h-1zM467 162h1v1h-1zM473 181h1v1h-1zM480 200h1v1h-1zM486 217h1v1h-1zM492 232h1v1h-1zM499 245h1v1h-1zM505 257h1v1h-1zM512 266h1v1h-1zM318 170h1v1h-1zM377 61h1v1h-1zM383 54h1v1h-1zM390 50h1v1h-1zM397 49h1v1h-1zM404 51h1v1h-1zM412 57h1v1h-1zM419 67h1v1h-1zM426 80h1v1h-1zM434 95h1v1h-1zM441 112h1v1h-1zM448 131h1v1h-1zM455 150h1v1h-1zM461 170h1v1h-1zM468 189h1v1h-1zM474 207h1v1h-1zM481 223h1v1h-1zM487 238h1v1h-1zM494 251h1v1h-1zM500 262h1v1h-1zM507 272h1v1h-1zM313 174h1v1h-1zM318 172h1v1h-1zM365 82h1v1h-1zM371 73h1v1h-1zM377 67h1v1h-1zM384 63h1v1h-1zM391 62h1v1h-1zM398 65h1v1h-1zM405 71h1v1h-1zM413 80h1v1h-1zM420 93h1v1h-1zM427 107h1v1h-1zM435 124h1v1h-1zM442 142h1v1h-1zM449 161h1v1h-1zM455 179h1v1h-1zM462 197h1v1h-1zM469 215h1v1h-1zM475 231h1v1h-1zM482 245h1v1h-1zM488 258h1v1h-1zM495 268h1v1h-1zM502 277h1v1h-1zM308 178h1v1h-1zM312 177h1v1h-1zM317 174h1v1h-1zM321 169h1v1h-1zM354 105h1v1h-1zM360 96h1v1h-1zM365 88h1v1h-1zM372 82h1v1h-1zM378 79h1v1h-1zM385 78h1v1h-1zM392 81h1v1h-1zM399 87h1v1h-1zM407 96h1v1h-1zM414 108h1v1h-1zM421 122h1v1h-1zM428 138h1v1h-1zM436 155h1v1h-1zM443 173h1v1h-1zM449 190h1v1h-1zM456 207h1v1h-1zM463 224h1v1h-1zM470 239h1v1h-1zM476 253h1v1h-1zM483 265h1v1h-1zM490 275h1v1h-1zM497 283h1v1h-1zM302 182h1v1h-1zM307 182h1v1h-1zM311 180h1v1h-1zM320 171h1v1h-1zM343 128h1v1h-1zM349 119h1v1h-1zM354 111h1v1h-1zM360 104h1v1h-1zM366 99h1v1h-1zM372 97h1v1h-1zM379 97h1v1h-1zM386 100h1v1h-1zM393 105h1v1h-1zM400 114h1v1h-1zM408 125h1v1h-1zM415 138h1v1h-1zM422 153h1v1h-1zM429 169h1v1h-1zM436 186h1v1h-1zM443 202h1v1h-1zM450 218h1v1h-1zM457 234h1v1h-1zM464 248h1v1h-1zM471 261h1v1h-1zM477 272h1v1h-1zM484 281h1v1h-1zM492 289h1v1h-1zM297 187h1v1h-1zM301 187h1v1h-1zM306 186h1v1h-1zM310 183h1v1h-1zM315 178h1v1h-1zM319 173h1v1h-1zM324 166h1v1h-1zM328 159h1v1h-1zM333 151h1v1h-1zM338 143h1v1h-1zM343 135h1v1h-1zM349 128h1v1h-1zM354 122h1v1h-1zM360 118h1v1h-1zM367 116h1v1h-1zM373 116h1v1h-1zM380 120h1v1h-1zM387 125h1v1h-1zM394 133h1v1h-1zM402 144h1v1h-1zM409 156h1v1h-1zM416 170h1v1h-1zM423 185h1v1h-1zM430 200h1v1h-1zM437 215h1v1h-1zM444 230h1v1h-1zM451 244h1v1h-1zM458 257h1v1h-1zM465 269h1v1h-1zM472 279h1v1h-1zM479 288h1v1h-1zM486 295h1v1h-1zM291 191h1v1h-1zM296 192h1v1h-1zM301 191h1v1h-1zM305 190h1v1h-1zM310 186h1v1h-1zM314 182h1v1h-1zM323 171h1v1h-1zM328 164h1v1h-1zM333 157h1v1h-1zM338 151h1v1h-1zM343 145h1v1h-1zM349 140h1v1h-1zM355 137h1v1h-1zM361 136h1v1h-1zM368 137h1v1h-1zM375 140h1v1h-1zM382 146h1v1h-1zM389 153h1v1h-1zM396 163h1v1h-1zM403 174h1v1h-1zM410 187h1v1h-1zM417 201h1v1h-1zM424 215h1v1h-1zM431 229h1v1h-1zM438 242h1v1h-1zM445 255h1v1h-1zM452 267h1v1h-1zM459 277h1v1h-1zM466 287h1v1h-1zM473 295h1v1h-1zM481 301h1v1h-1zM286 194h1v1h-1zM290 196h1v1h-1zM295 197h1v1h-1zM300 196h1v1h-1zM304 194h1v1h-1zM309 191h1v1h-1zM313 187h1v1h-1zM318 182h1v1h-1zM323 177h1v1h-1zM328 172h1v1h-1zM333 167h1v1h-1zM338 162h1v1h-1zM344 159h1v1h-1zM350 157h1v1h-1zM356 156h1v1h-1zM362 158h1v1h-1zM369 161h1v1h-1zM376 166h1v1h-1zM383 173h1v1h-1zM390 182h1v1h-1zM397 193h1v1h-1zM404 204h1v1h-1zM411 217h1v1h-1zM418 229h1v1h-1zM425 242h1v1h-1zM432 254h1v1h-1zM439 266h1v1h-1zM446 276h1v1h-1zM454 286h1v1h-1zM461 294h1v1h-1zM468 301h1v1h-1zM475 307h1v1h-1zM280 198h1v1h-1zM285 201h1v1h-1zM289 202h1v1h-1zM294 203h1v1h-1zM299 202h1v1h-1zM303 200h1v1h-1zM308 197h1v1h-1zM313 194h1v1h-1zM318 190h1v1h-1zM323 186h1v1h-1zM328 183h1v1h-1zM333 180h1v1h-1zM339 177h1v1h-1zM345 176h1v1h-1zM351 176h1v1h-1zM357 178h1v1h-1zM364 181h1v1h-1zM370 186h1v1h-1zM377 193h1v1h-1zM384 201h1v1h-1zM391 211h1v1h-1zM398 221h1v1h-1zM405 232h1v1h-1zM412 244h1v1h-1zM419 255h1v1h-1zM427 266h1v1h-1zM434 276h1v1h-1zM441 285h1v1h-1zM448 294h1v1h-1zM455 301h1v1h-1zM462 307h1v1h-1zM470 312h1v1h-1zM274 201h1v1h-1zM279 205h1v1h-1zM284 207h1v1h-1zM289 208h1v1h-1zM293 209h1v1h-1zM298 208h1v1h-1zM303 207h1v1h-1zM308 205h1v1h-1zM313 203h1v1h-1zM318 200h1v1h-1zM323 198h1v1h-1zM328 196h1v1h-1zM334 194h1v1h-1zM339 194h1v1h-1zM345 195h1v1h-1zM352 197h1v1h-1zM358 201h1v1h-1zM365 206h1v1h-1zM372 212h1v1h-1zM378 219h1v1h-1zM385 228h1v1h-1zM392 237h1v1h-1zM399 247h1v1h-1zM406 257h1v1h-1zM414 267h1v1h-1zM421 277h1v1h-1zM428 286h1v1h-1zM435 294h1v1h-1zM442 301h1v1h-1zM449 308h1v1h-1zM457 313h1v1h-1zM464 317h1v1h-1zM267 204h1v1h-1zM273 208h1v1h-1zM278 211h1v1h-1zM283 214h1v1h-1zM288 215h1v1h-1zM292 216h1v1h-1zM297 216h1v1h-1zM302 215h1v1h-1zM307 214h1v1h-1zM312 213h1v1h-1zM318 212h1v1h-1zM323 211h1v1h-1zM328 211h1v1h-1zM334 211h1v1h-1zM340 212h1v1h-1zM346 215h1v1h-1zM353 219h1v1h-1zM359 223h1v1h-1zM366 229h1v1h-1zM373 236h1v1h-1zM380 244h1v1h-1zM387 252h1v1h-1zM394 261h1v1h-1zM401 270h1v1h-1zM408 279h1v1h-1zM415 287h1v1h-1zM422 295h1v1h-1zM429 302h1v1h-1zM436 308h1v1h-1zM443 314h1v1h-1zM451 318h1v1h-1zM459 321h1v1h-1zM261 206h1v1h-1zM266 211h1v1h-1zM272 215h1v1h-1zM277 218h1v1h-1zM282 221h1v1h-1zM287 222h1v1h-1zM292 224h1v1h-1zM297 224h1v1h-1zM302 224h1v1h-1zM307 224h1v1h-1zM312 224h1v1h-1zM318 224h1v1h-1zM323 225h1v1h-1zM329 226h1v1h-1zM335 228h1v1h-1zM341 231h1v1h-1zM347 235h1v1h-1zM354 240h1v1h-1zM360 245h1v1h-1zM367 251h1v1h-1zM374 258h1v1h-1zM381 266h1v1h-1zM388 273h1v1h-1zM395 281h1v1h-1zM402 289h1v1h-1zM409 296h1v1h-1zM416 303h1v1h-1zM423 309h1v1h-1zM430 314h1v1h-1zM437 319h1v1h-1zM445 323h1v1h-1zM453 325h1v1h-1zM254 208h1v1h-1zM260 213h1v1h-1zM265 218h1v1h-1zM270 222h1v1h-1zM276 225h1v1h-1zM281 228h1v1h-1zM286 230h1v1h-1zM291 232h1v1h-1zM296 233h1v1h-1zM301 234h1v1h-1zM307 235h1v1h-1zM312 237h1v1h-1zM318 238h1v1h-1zM324 240h1v1h-1zM329 242h1v1h-1zM336 245h1v1h-1zM342 249h1v1h-1zM348 254h1v1h-1zM355 259h1v1h-1zM361 265h1v1h-1zM368 271h1v1h-1zM375 278h1v1h-1zM382 285h1v1h-1zM389 291h1v1h-1zM396 298h1v1h-1zM403 304h1v1h-1zM410 310h1v1h-1zM417 315h1v1h-1zM424 320h1v1h-1zM431 324h1v1h-1zM439 327h1v1h-1zM447 329h1v1h-1zM248 209h1v1h-1zM253 215h1v1h-1zM259 220h1v1h-1zM264 225h1v1h-1zM269 229h1v1h-1zM275 233h1v1h-1zM280 236h1v1h-1zM285 239h1v1h-1zM290 241h1v1h-1zM296 243h1v1h-1zM301 245h1v1h-1zM307 247h1v1h-1zM312 249h1v1h-1zM318 252h1v1h-1zM324 255h1v1h-1zM330 258h1v1h-1zM336 262h1v1h-1zM342 266h1v1h-1zM349 271h1v1h-1zM355 277h1v1h-1zM362 282h1v1h-1zM369 288h1v1h-1zM376 294h1v1h-1zM382 300h1v1h-1zM389 306h1v1h-1zM396 311h1v1h-1zM403 316h1v1h-1zM411 321h1v1h-1zM418 324h1v1h-1zM425 328h1v1h-1zM433 330h1v1h-1zM441 332h1v1h-1zM240 209h1v1h-1zM246 216h1v1h-1zM252 222h1v1h-1zM257 227h1v1h-1zM263 232h1v1h-1zM268 236h1v1h-1zM273 240h1v1h-1zM279 244h1v1h-1zM284 247h1v1h-1zM290 250h1v1h-1zM295 253h1v1h-1zM301 255h1v1h-1zM306 258h1v1h-1zM312 261h1v1h-1zM318 265h1v1h-1zM324 268h1v1h-1zM330 272h1v1h-1zM336 277h1v1h-1zM343 281h1v1h-1zM349 286h1v1h-1zM356 292h1v1h-1zM363 297h1v1h-1zM369 302h1v1h-1zM376 307h1v1h-1zM383 312h1v1h-1zM390 317h1v1h-1zM397 321h1v1h-1zM404 325h1v1h-1zM412 328h1v1h-1zM419 331h1v1h-1zM427 333h1v1h-1zM435 335h1v1h-1z" fill="#1a1a00" fill-opacity=".5" shape-rendering="crispEdges"/><path d="M344.9 234L18.4 460.7" stroke="#dc0000" stroke-width="1.8" fill="none"/><path d="M500.3 225.6L848 398.1" stroke="#00d800" stroke-width="1.8" fill="none"/><path d="M416.6 33.7L416.6 -89" stroke="#0000f0" stroke-width="2" fill="none"/></svg></div>
<!-- input -->
<div id="input"></div>
<div class="t" style="left:14px;top:444px;letter-spacing:1.15px"><span style="color:#1a1a1a;font-weight:bold">(</span><span style="color:#a8307a">x</span><span style="color:#1a1a1a">,</span><span style="color:#a8307a">y</span><span style="color:#1a1a1a;font-weight:bold">)</span><span style="color:#1a1a1a;font-weight:bold">-&gt;</span><span style="color:#2f6cc0">5</span><span style="color:#1a1a1a;font-weight:bold">*</span><span style="color:#b02a5a">sin</span><span style="color:#1a1a1a;font-weight:bold">((</span><span style="color:#a8307a">x</span><span style="color:#1a1a1a">^</span><span style="color:#2f6cc0">2</span><span style="color:#1a1a1a">+</span><span style="color:#a8307a">y</span><span style="color:#1a1a1a">^</span><span style="color:#2f6cc0">2</span><span style="color:#1a1a1a;font-weight:bold">)</span><span style="color:#1a1a1a">^</span><span style="color:#2f6cc0">.5</span><span style="color:#1a1a1a;font-weight:bold">)</span><span style="color:#1a1a1a;font-weight:bold">/</span><span style="color:#1a1a1a;font-weight:bold">(</span><span style="color:#a8307a">x</span><span style="color:#1a1a1a">^</span><span style="color:#2f6cc0">2</span><span style="color:#1a1a1a">+</span><span style="color:#a8307a">y</span><span style="color:#1a1a1a">^</span><span style="color:#2f6cc0">2</span><span style="color:#1a1a1a;font-weight:bold">)</span><span style="color:#1a1a1a">^</span><span style="color:#2f6cc0">.5</span></div>
<div class="t" style="left:1px;top:476px;color:#333;letter-spacing:0.3px">Ready</div>
</body></html>
